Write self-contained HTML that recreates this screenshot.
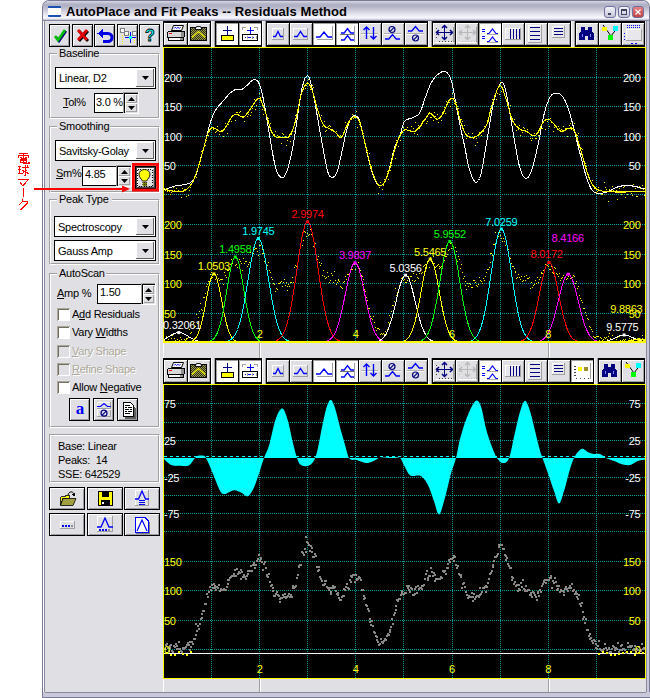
<!DOCTYPE html><html><head><meta charset="utf-8"><style>
html,body{margin:0;padding:0;}
body{width:650px;height:698px;position:relative;overflow:hidden;background:#fff;font-family:"Liberation Sans",sans-serif;}
.t{position:absolute;font-size:11px;line-height:13px;white-space:nowrap;color:#000;letter-spacing:-0.25px;}
svg{position:absolute;}
</style></head><body>
<div style="position:absolute;left:42px;top:0px;width:608px;height:698px;background:#7a7a96;border-radius:7px 7px 0 0;"></div>
<div style="position:absolute;left:43px;top:1px;width:606px;height:697px;background:#c8c8d8;border-radius:6px 6px 0 0;"></div>
<div style="position:absolute;left:43px;top:1px;width:606px;height:19px;background:linear-gradient(#d8d8e4 0px,#b4b4c8 3px,#b0b0c4 5px,#c8c8d8 9px,#e4e4ee 13px,#f8f8fc 17px,#c0c0d0 19px);border-radius:6px 6px 0 0;"></div>
<div style="position:absolute;left:42px;top:20px;width:608px;height:1px;background:#8484a0;"></div>
<div style="position:absolute;left:43px;top:21px;width:1px;height:677px;background:#fff;"></div>
<div style="position:absolute;left:44px;top:21px;width:1px;height:677px;background:#8888a0;"></div>
<div style="position:absolute;left:646px;top:21px;width:4px;height:677px;background:#c8c8d8;"></div>
<div style="position:absolute;left:646px;top:21px;width:1px;height:677px;background:#8888a0;"></div>
<div style="position:absolute;left:649px;top:21px;width:1px;height:677px;background:#7a7a96;"></div>
<div style="position:absolute;left:43px;top:692px;width:607px;height:6px;background:#c8c8d8;"></div>
<div style="position:absolute;left:45px;top:692px;width:601px;height:1px;background:#8888a0;"></div>
<div style="position:absolute;left:42px;top:697px;width:608px;height:1px;background:#7a7a96;"></div>
<div style="position:absolute;left:45px;top:21px;width:601px;height:671px;background:#e0dfe3;"></div>
<div style="position:absolute;left:48px;top:6px;width:13px;height:11px;background:#1c50b0;border-radius:1px;"></div>
<div style="position:absolute;left:48px;top:8px;width:13px;height:7px;background:#fffff8;"></div>
<div class="t" style="left:66px;top:4px;font-weight:bold;font-size:13px;line-height:15px;letter-spacing:0.07px;">AutoPlace and Fit Peaks -- Residuals Method</div>
<div style="position:absolute;left:604px;top:6px;width:12px;height:12px;background:linear-gradient(#f4f4fa,#c4c4d8);border:1px solid #7070a0;border-radius:3px;box-sizing:border-box;"></div>
<div style="position:absolute;left:618px;top:6px;width:12px;height:12px;background:linear-gradient(#f4f4fa,#c4c4d8);border:1px solid #7070a0;border-radius:3px;box-sizing:border-box;"></div>
<div style="position:absolute;left:632px;top:6px;width:12px;height:12px;background:linear-gradient(#e88080,#c04040);border:1px solid #7070a0;border-radius:3px;box-sizing:border-box;"></div>
<div style="position:absolute;left:608px;top:13px;width:3px;height:2px;background:#404060;"></div>
<div style="position:absolute;left:621px;top:9px;width:6px;height:6px;border:1px solid #404060;border-top-width:2px;box-sizing:border-box;"></div>
<svg style="left:635px;top:9px" width="6" height="6"><path d="M0.5 0.5L5.5 5.5M5.5 0.5L0.5 5.5" stroke="#fff" stroke-width="1.3"/></svg>
<div style="position:absolute;left:49px;top:24px;width:21px;height:23px;background:#000;"></div>
<div style="position:absolute;left:50px;top:25px;width:19px;height:21px;background:#fff;"></div>
<div style="position:absolute;left:51px;top:26px;width:18px;height:20px;background:#9d9da1;"></div>
<div style="position:absolute;left:51px;top:26px;width:17px;height:19px;background:#e0dfe3;"></div>
<svg style="position:absolute;left:50px;top:25px;overflow:visible" width="20" height="21" shape-rendering="crispEdges"><path d="M5 11L8 15L15 5" stroke="#000080" stroke-width="2.6" fill="none" transform="translate(1,1)" shape-rendering="auto"/><path d="M5 11L8 15L15 5" stroke="#00c000" stroke-width="2.6" fill="none" shape-rendering="auto"/></svg>
<div style="position:absolute;left:72px;top:24px;width:21px;height:23px;background:#000;"></div>
<div style="position:absolute;left:73px;top:25px;width:19px;height:21px;background:#fff;"></div>
<div style="position:absolute;left:74px;top:26px;width:18px;height:20px;background:#9d9da1;"></div>
<div style="position:absolute;left:74px;top:26px;width:17px;height:19px;background:#e0dfe3;"></div>
<svg style="position:absolute;left:73px;top:25px;overflow:visible" width="20" height="21" shape-rendering="crispEdges"><path d="M5 5L14 15M14 5L5 15" stroke="#000" stroke-width="2.8" transform="translate(1,1)" shape-rendering="auto"/><path d="M5 5L14 15M14 5L5 15" stroke="#e00000" stroke-width="2.8" shape-rendering="auto"/></svg>
<div style="position:absolute;left:94px;top:24px;width:21px;height:23px;background:#000;"></div>
<div style="position:absolute;left:95px;top:25px;width:19px;height:21px;background:#fff;"></div>
<div style="position:absolute;left:96px;top:26px;width:18px;height:20px;background:#9d9da1;"></div>
<div style="position:absolute;left:96px;top:26px;width:17px;height:19px;background:#e0dfe3;"></div>
<svg style="position:absolute;left:95px;top:25px;overflow:visible" width="20" height="21" shape-rendering="crispEdges"><path d="M7 8.5H13A4 4 0 0 1 13 16.5H8" stroke="#0000e0" stroke-width="3" fill="none" shape-rendering="auto"/><path d="M2.5 8.5L7.5 4V13Z" fill="#0000e0"/></svg>
<div style="position:absolute;left:117px;top:24px;width:21px;height:23px;background:#000;"></div>
<div style="position:absolute;left:118px;top:25px;width:19px;height:21px;background:#fff;"></div>
<div style="position:absolute;left:119px;top:26px;width:18px;height:20px;background:#9d9da1;"></div>
<div style="position:absolute;left:119px;top:26px;width:17px;height:19px;background:#e0dfe3;"></div>
<svg style="position:absolute;left:118px;top:25px;overflow:visible" width="20" height="21" shape-rendering="crispEdges"><rect x="2.5" y="3.5" width="4" height="4" fill="#fff" stroke="#808080"/><rect x="6.5" y="6.5" width="4" height="4" fill="#fff" stroke="#808080"/><rect x="14.5" y="6.5" width="4" height="4" fill="#fff" stroke="#808080"/><path d="M4.5 10V19M16.5 13V19" stroke="#ff0" stroke-dasharray="1 1"/><path d="M12.5 7V18M7 12.5H18" stroke="#00f"/><rect x="11" y="11" width="3" height="3" fill="#0ff"/></svg>
<div style="position:absolute;left:139px;top:24px;width:21px;height:23px;background:#000;"></div>
<div style="position:absolute;left:140px;top:25px;width:19px;height:21px;background:#fff;"></div>
<div style="position:absolute;left:141px;top:26px;width:18px;height:20px;background:#9d9da1;"></div>
<div style="position:absolute;left:141px;top:26px;width:17px;height:19px;background:#e0dfe3;"></div>
<svg style="position:absolute;left:140px;top:25px;overflow:visible" width="20" height="21" shape-rendering="crispEdges"><text x="10" y="16" text-anchor="middle" font-family="Liberation Sans" font-weight="bold" font-size="16" fill="#0ff" stroke="#000" stroke-width="0.8">?</text></svg>
<div style="position:absolute;left:49px;top:53px;width:111px;height:66px;border-top:1px solid #a0a0a0;border-left:1px solid #a0a0a0;border-right:1px solid #fff;border-bottom:1px solid #fff;box-sizing:border-box;"></div>
<div style="position:absolute;left:50px;top:54px;width:109px;height:64px;border-top:1px solid #fff;border-left:1px solid #fff;border-right:1px solid #a0a0a0;border-bottom:1px solid #a0a0a0;box-sizing:border-box;"></div>
<div style="position:absolute;left:57px;top:52px;width:43px;height:4px;background:#e0dfe3;"></div>
<div class="t" style="left:59px;top:47px;">Baseline</div>
<div style="position:absolute;left:55px;top:67px;width:101px;height:22px;background:#000;"></div>
<div style="position:absolute;left:56px;top:68px;width:99px;height:20px;background:#fff;"></div>
<div class="t" style="left:59px;top:72px;">Linear, D2</div>
<div style="position:absolute;left:136px;top:69px;width:18px;height:18px;background:#fff;"></div>
<div style="position:absolute;left:137px;top:70px;width:17px;height:17px;background:#a0a0a0;"></div>
<div style="position:absolute;left:137px;top:70px;width:16px;height:16px;background:#e0dfe3;"></div>
<div style="position:absolute;left:153px;top:69px;width:1px;height:18px;background:#606060;"></div>
<div style="position:absolute;left:136px;top:86px;width:18px;height:1px;background:#606060;"></div>
<svg style="position:absolute;left:141.5px;top:76.0px" width="7" height="4"><path d="M0 0H7L3.5 4Z" fill="#000"/></svg>
<div class="t" style="left:63px;top:96px;"><u>T</u>ol%</div>
<div style="position:absolute;left:94px;top:93px;width:30px;height:20px;background:#000;"></div>
<div style="position:absolute;left:95px;top:94px;width:28px;height:18px;background:#fff;"></div>
<div class="t" style="left:96px;top:96px;">3.0 %</div>
<div style="position:absolute;left:123px;top:92px;width:16px;height:22px;background:#fff;"></div>
<div style="position:absolute;left:123px;top:92px;width:15px;height:21px;background:#a0a0a0;"></div>
<div style="position:absolute;left:124px;top:93px;width:14px;height:20px;background:#000;"></div>
<div style="position:absolute;left:125px;top:94px;width:13px;height:19px;background:#e0dfe3;"></div>
<div style="position:absolute;left:125px;top:94px;width:12px;height:9px;background:#fff;"></div>
<div style="position:absolute;left:126px;top:95px;width:11px;height:8px;background:#a0a0a0;"></div>
<div style="position:absolute;left:126px;top:95px;width:10px;height:7px;background:#e0dfe3;"></div>
<div style="position:absolute;left:125px;top:103px;width:12px;height:9px;background:#fff;"></div>
<div style="position:absolute;left:126px;top:104px;width:11px;height:8px;background:#a0a0a0;"></div>
<div style="position:absolute;left:126px;top:104px;width:10px;height:7px;background:#e0dfe3;"></div>
<svg style="position:absolute;left:127.5px;top:96.5px" width="7" height="4"><path d="M3.5 0L7 4H0Z" fill="#000"/></svg>
<svg style="position:absolute;left:127.5px;top:105.5px" width="7" height="4"><path d="M0 0H7L3.5 4Z" fill="#000"/></svg>
<div style="position:absolute;left:49px;top:126px;width:111px;height:67px;border-top:1px solid #a0a0a0;border-left:1px solid #a0a0a0;border-right:1px solid #fff;border-bottom:1px solid #fff;box-sizing:border-box;"></div>
<div style="position:absolute;left:50px;top:127px;width:109px;height:65px;border-top:1px solid #fff;border-left:1px solid #fff;border-right:1px solid #a0a0a0;border-bottom:1px solid #a0a0a0;box-sizing:border-box;"></div>
<div style="position:absolute;left:57px;top:125px;width:53px;height:4px;background:#e0dfe3;"></div>
<div class="t" style="left:59px;top:120px;">Smoothing</div>
<div style="position:absolute;left:55px;top:140px;width:101px;height:21px;background:#000;"></div>
<div style="position:absolute;left:56px;top:141px;width:99px;height:19px;background:#fff;"></div>
<div class="t" style="left:59px;top:145px;">Savitsky-Golay</div>
<div style="position:absolute;left:136px;top:142px;width:18px;height:17px;background:#fff;"></div>
<div style="position:absolute;left:137px;top:143px;width:17px;height:16px;background:#a0a0a0;"></div>
<div style="position:absolute;left:137px;top:143px;width:16px;height:15px;background:#e0dfe3;"></div>
<div style="position:absolute;left:153px;top:142px;width:1px;height:17px;background:#606060;"></div>
<div style="position:absolute;left:136px;top:158px;width:18px;height:1px;background:#606060;"></div>
<svg style="position:absolute;left:141.5px;top:148.5px" width="7" height="4"><path d="M0 0H7L3.5 4Z" fill="#000"/></svg>
<div class="t" style="left:56px;top:167px;"><u>S</u>m%</div>
<div style="position:absolute;left:82px;top:166px;width:35px;height:20px;background:#000;"></div>
<div style="position:absolute;left:83px;top:167px;width:33px;height:18px;background:#fff;"></div>
<div class="t" style="left:85px;top:168px;">4.85</div>
<div style="position:absolute;left:116px;top:165px;width:16px;height:22px;background:#fff;"></div>
<div style="position:absolute;left:116px;top:165px;width:15px;height:21px;background:#a0a0a0;"></div>
<div style="position:absolute;left:117px;top:166px;width:14px;height:20px;background:#000;"></div>
<div style="position:absolute;left:118px;top:167px;width:13px;height:19px;background:#e0dfe3;"></div>
<div style="position:absolute;left:118px;top:167px;width:12px;height:9px;background:#fff;"></div>
<div style="position:absolute;left:119px;top:168px;width:11px;height:8px;background:#a0a0a0;"></div>
<div style="position:absolute;left:119px;top:168px;width:10px;height:7px;background:#e0dfe3;"></div>
<div style="position:absolute;left:118px;top:176px;width:12px;height:9px;background:#fff;"></div>
<div style="position:absolute;left:119px;top:177px;width:11px;height:8px;background:#a0a0a0;"></div>
<div style="position:absolute;left:119px;top:177px;width:10px;height:7px;background:#e0dfe3;"></div>
<svg style="position:absolute;left:120.5px;top:169.5px" width="7" height="4"><path d="M3.5 0L7 4H0Z" fill="#000"/></svg>
<svg style="position:absolute;left:120.5px;top:178.5px" width="7" height="4"><path d="M0 0H7L3.5 4Z" fill="#000"/></svg>
<div style="position:absolute;left:135px;top:166px;width:21px;height:23px;background:#000;"></div>
<div style="position:absolute;left:136px;top:167px;width:19px;height:21px;background:#404040;"></div>
<div style="position:absolute;left:137px;top:168px;width:17px;height:19px;background:#fff;"></div>
<div style="position:absolute;left:138px;top:169px;width:16px;height:18px;background:#a0a0a0;"></div>
<div style="position:absolute;left:138px;top:169px;width:15px;height:17px;background:#e0dfe3;"></div>
<svg style="position:absolute;left:134px;top:166px;overflow:visible" width="22" height="24" shape-rendering="crispEdges"><rect x="3.5" y="3.5" width="15" height="17" fill="none" stroke="#000" stroke-dasharray="1 1.5"/><path d="M10.5 3.5C7.3 3.5 5 5.5 5 8.5C5 11 7 12.5 8.5 15H12.5C14 12.5 16 11 16 8.5C16 5.5 13.7 3.5 10.5 3.5Z" fill="#ff0" stroke="#000" stroke-width="0.9" shape-rendering="auto"/><path d="M8.5 15.5H12.5V19.5H8.5Z" fill="#808000"/><path d="M8 16.5H13M8 18.5H13" stroke="#000" stroke-width="0.6" stroke-dasharray="1 1"/></svg>
<div style="position:absolute;left:49px;top:199px;width:111px;height:66px;border-top:1px solid #a0a0a0;border-left:1px solid #a0a0a0;border-right:1px solid #fff;border-bottom:1px solid #fff;box-sizing:border-box;"></div>
<div style="position:absolute;left:50px;top:200px;width:109px;height:64px;border-top:1px solid #fff;border-left:1px solid #fff;border-right:1px solid #a0a0a0;border-bottom:1px solid #a0a0a0;box-sizing:border-box;"></div>
<div style="position:absolute;left:57px;top:198px;width:55px;height:4px;background:#e0dfe3;"></div>
<div class="t" style="left:59px;top:193px;">Peak Type</div>
<div style="position:absolute;left:54px;top:216px;width:102px;height:21px;background:#000;"></div>
<div style="position:absolute;left:55px;top:217px;width:100px;height:19px;background:#fff;"></div>
<div class="t" style="left:58px;top:221px;">Spectroscopy</div>
<div style="position:absolute;left:136px;top:218px;width:18px;height:17px;background:#fff;"></div>
<div style="position:absolute;left:137px;top:219px;width:17px;height:16px;background:#a0a0a0;"></div>
<div style="position:absolute;left:137px;top:219px;width:16px;height:15px;background:#e0dfe3;"></div>
<div style="position:absolute;left:153px;top:218px;width:1px;height:17px;background:#606060;"></div>
<div style="position:absolute;left:136px;top:234px;width:18px;height:1px;background:#606060;"></div>
<svg style="position:absolute;left:141.5px;top:224.5px" width="7" height="4"><path d="M0 0H7L3.5 4Z" fill="#000"/></svg>
<div style="position:absolute;left:54px;top:240px;width:102px;height:21px;background:#000;"></div>
<div style="position:absolute;left:55px;top:241px;width:100px;height:19px;background:#fff;"></div>
<div class="t" style="left:58px;top:245px;">Gauss Amp</div>
<div style="position:absolute;left:136px;top:242px;width:18px;height:17px;background:#fff;"></div>
<div style="position:absolute;left:137px;top:243px;width:17px;height:16px;background:#a0a0a0;"></div>
<div style="position:absolute;left:137px;top:243px;width:16px;height:15px;background:#e0dfe3;"></div>
<div style="position:absolute;left:153px;top:242px;width:1px;height:17px;background:#606060;"></div>
<div style="position:absolute;left:136px;top:258px;width:18px;height:1px;background:#606060;"></div>
<svg style="position:absolute;left:141.5px;top:248.5px" width="7" height="4"><path d="M0 0H7L3.5 4Z" fill="#000"/></svg>
<div style="position:absolute;left:49px;top:273px;width:111px;height:155px;border-top:1px solid #a0a0a0;border-left:1px solid #a0a0a0;border-right:1px solid #fff;border-bottom:1px solid #fff;box-sizing:border-box;"></div>
<div style="position:absolute;left:50px;top:274px;width:109px;height:153px;border-top:1px solid #fff;border-left:1px solid #fff;border-right:1px solid #a0a0a0;border-bottom:1px solid #a0a0a0;box-sizing:border-box;"></div>
<div style="position:absolute;left:57px;top:272px;width:49px;height:4px;background:#e0dfe3;"></div>
<div class="t" style="left:59px;top:267px;">AutoScan</div>
<div class="t" style="left:57px;top:287px;"><u>A</u>mp %</div>
<div style="position:absolute;left:97px;top:284px;width:45px;height:20px;background:#000;"></div>
<div style="position:absolute;left:98px;top:285px;width:43px;height:18px;background:#fff;"></div>
<div class="t" style="left:100px;top:286px;">1.50</div>
<div style="position:absolute;left:141px;top:283px;width:15px;height:22px;background:#fff;"></div>
<div style="position:absolute;left:141px;top:283px;width:14px;height:21px;background:#a0a0a0;"></div>
<div style="position:absolute;left:142px;top:284px;width:13px;height:20px;background:#000;"></div>
<div style="position:absolute;left:143px;top:285px;width:12px;height:19px;background:#e0dfe3;"></div>
<div style="position:absolute;left:143px;top:285px;width:11px;height:9px;background:#fff;"></div>
<div style="position:absolute;left:144px;top:286px;width:10px;height:8px;background:#a0a0a0;"></div>
<div style="position:absolute;left:144px;top:286px;width:9px;height:7px;background:#e0dfe3;"></div>
<div style="position:absolute;left:143px;top:294px;width:11px;height:9px;background:#fff;"></div>
<div style="position:absolute;left:144px;top:295px;width:10px;height:8px;background:#a0a0a0;"></div>
<div style="position:absolute;left:144px;top:295px;width:9px;height:7px;background:#e0dfe3;"></div>
<svg style="position:absolute;left:145.0px;top:287.5px" width="7" height="4"><path d="M3.5 0L7 4H0Z" fill="#000"/></svg>
<svg style="position:absolute;left:145.0px;top:296.5px" width="7" height="4"><path d="M0 0H7L3.5 4Z" fill="#000"/></svg>
<div style="position:absolute;left:57px;top:308px;width:13px;height:13px;background:#aca899;"></div>
<div style="position:absolute;left:58px;top:309px;width:12px;height:12px;background:#fff;"></div>
<div style="position:absolute;left:58px;top:309px;width:11px;height:11px;background:#716f64;"></div>
<div style="position:absolute;left:59px;top:310px;width:10px;height:10px;background:#fff;"></div>
<div class="t" style="left:72px;top:308px;color:#000;">A<u>d</u>d Residuals</div>
<div style="position:absolute;left:57px;top:326px;width:13px;height:13px;background:#aca899;"></div>
<div style="position:absolute;left:58px;top:327px;width:12px;height:12px;background:#fff;"></div>
<div style="position:absolute;left:58px;top:327px;width:11px;height:11px;background:#716f64;"></div>
<div style="position:absolute;left:59px;top:328px;width:10px;height:10px;background:#fff;"></div>
<div class="t" style="left:72px;top:326px;color:#000;">Vary <u>W</u>idths</div>
<div style="position:absolute;left:57px;top:345px;width:13px;height:13px;background:#aca899;"></div>
<div style="position:absolute;left:58px;top:346px;width:12px;height:12px;background:#fff;"></div>
<div style="position:absolute;left:58px;top:346px;width:11px;height:11px;background:#716f64;"></div>
<div style="position:absolute;left:59px;top:347px;width:10px;height:10px;background:#e0dfe3;"></div>
<div class="t" style="left:72px;top:345px;color:#aca899;text-shadow:1px 1px #fff;"><u>V</u>ary Shape</div>
<div style="position:absolute;left:57px;top:363px;width:13px;height:13px;background:#aca899;"></div>
<div style="position:absolute;left:58px;top:364px;width:12px;height:12px;background:#fff;"></div>
<div style="position:absolute;left:58px;top:364px;width:11px;height:11px;background:#716f64;"></div>
<div style="position:absolute;left:59px;top:365px;width:10px;height:10px;background:#e0dfe3;"></div>
<div class="t" style="left:72px;top:363px;color:#aca899;text-shadow:1px 1px #fff;"><u>R</u>efine Shape</div>
<div style="position:absolute;left:57px;top:381px;width:13px;height:13px;background:#aca899;"></div>
<div style="position:absolute;left:58px;top:382px;width:12px;height:12px;background:#fff;"></div>
<div style="position:absolute;left:58px;top:382px;width:11px;height:11px;background:#716f64;"></div>
<div style="position:absolute;left:59px;top:383px;width:10px;height:10px;background:#fff;"></div>
<div class="t" style="left:72px;top:381px;color:#000;">Allow <u>N</u>egative</div>
<div style="position:absolute;left:69px;top:398px;width:21px;height:23px;background:#000;"></div>
<div style="position:absolute;left:70px;top:399px;width:19px;height:21px;background:#fff;"></div>
<div style="position:absolute;left:71px;top:400px;width:18px;height:20px;background:#9d9da1;"></div>
<div style="position:absolute;left:71px;top:400px;width:17px;height:19px;background:#e0dfe3;"></div>
<svg style="position:absolute;left:70px;top:399px;overflow:visible" width="20" height="21" shape-rendering="crispEdges"><text x="10" y="15" text-anchor="middle" font-family="Liberation Serif" font-weight="bold" font-size="17" fill="#0000ff">a</text></svg>
<div style="position:absolute;left:93px;top:398px;width:21px;height:23px;background:#000;"></div>
<div style="position:absolute;left:94px;top:399px;width:19px;height:21px;background:#fff;"></div>
<div style="position:absolute;left:95px;top:400px;width:18px;height:20px;background:#9d9da1;"></div>
<div style="position:absolute;left:95px;top:400px;width:17px;height:19px;background:#e0dfe3;"></div>
<svg style="position:absolute;left:94px;top:399px;overflow:visible" width="20" height="21" shape-rendering="crispEdges"><rect x="3" y="3" width="14" height="15" fill="#a0a0a0"/><rect x="3" y="3" width="13" height="14" fill="#fff"/><rect x="4" y="4" width="12" height="13" fill="#e0dfe3"/><path d="M3 9.5H17" stroke="#a0a0a0"/><path d="M3 10.5H17" stroke="#fff"/><path d="M3 7.5H6.5L10.0 4.5L13.5 7.5H17" fill="none" stroke="#0000ff" stroke-width="1.1" shape-rendering="auto"/><circle cx="10" cy="14.2" r="3" fill="none" stroke="#000080" stroke-width="1.2" shape-rendering="auto"/><path d="M12.1 12.1L7.9 16.3" stroke="#000080" stroke-width="1.2" shape-rendering="auto"/></svg>
<div style="position:absolute;left:117px;top:398px;width:21px;height:23px;background:#000;"></div>
<div style="position:absolute;left:118px;top:399px;width:19px;height:21px;background:#fff;"></div>
<div style="position:absolute;left:119px;top:400px;width:18px;height:20px;background:#9d9da1;"></div>
<div style="position:absolute;left:119px;top:400px;width:17px;height:19px;background:#e0dfe3;"></div>
<svg style="position:absolute;left:118px;top:399px;overflow:visible" width="20" height="21" shape-rendering="crispEdges"><path d="M6 4.5H13L16.5 8V18.5H6Z" fill="#606060" transform="translate(1,1)"/><path d="M5.5 3.5H12.5L15.5 6.5V17.5H5.5Z" fill="#fff" stroke="#000"/><path d="M7 6.5h5M7 8.5h2M10 8.5h4M7 10.5h4M12 10.5h2M7 12.5h2M10 12.5h4M7 14.5h5" stroke="#000"/></svg>
<div style="position:absolute;left:49px;top:434px;width:111px;height:49px;border-top:1px solid #a0a0a0;border-left:1px solid #a0a0a0;border-right:1px solid #fff;border-bottom:1px solid #fff;box-sizing:border-box;"></div>
<div style="position:absolute;left:50px;top:435px;width:109px;height:47px;border-top:1px solid #fff;border-left:1px solid #fff;border-right:1px solid #a0a0a0;border-bottom:1px solid #a0a0a0;box-sizing:border-box;"></div>
<div class="t" style="left:58px;top:440px;">Base: Linear</div>
<div class="t" style="left:58px;top:454px;">Peaks:&nbsp; 14</div>
<div class="t" style="left:58px;top:468px;">SSE: 642529</div>
<div style="position:absolute;left:49px;top:487px;width:36px;height:23px;background:#000;"></div>
<div style="position:absolute;left:50px;top:488px;width:34px;height:21px;background:#fff;"></div>
<div style="position:absolute;left:51px;top:489px;width:33px;height:20px;background:#9d9da1;"></div>
<div style="position:absolute;left:51px;top:489px;width:32px;height:19px;background:#e0dfe3;"></div>
<svg style="position:absolute;left:57px;top:488px;overflow:visible" width="20" height="21" shape-rendering="crispEdges"><path d="M3.5 8.5H8L9 7H12V10H6L3.5 17Z" fill="#ff0" stroke="#000" stroke-width="0.8"/><path d="M6 10.5H19L16 17.5H3.5Z" fill="#a0a040" stroke="#000" stroke-width="0.8" shape-rendering="auto"/><path d="M11 7C12 3 16 3 17 6" stroke="#000" fill="none" shape-rendering="auto"/><path d="M15.5 6.5L17.5 7.5L18 5" stroke="#000" fill="none"/></svg>
<div style="position:absolute;left:87px;top:487px;width:36px;height:23px;background:#000;"></div>
<div style="position:absolute;left:88px;top:488px;width:34px;height:21px;background:#fff;"></div>
<div style="position:absolute;left:89px;top:489px;width:33px;height:20px;background:#9d9da1;"></div>
<div style="position:absolute;left:89px;top:489px;width:32px;height:19px;background:#e0dfe3;"></div>
<svg style="position:absolute;left:95px;top:488px;overflow:visible" width="20" height="21" shape-rendering="crispEdges"><rect x="3" y="3" width="15" height="15" fill="#000"/><rect x="4" y="4" width="13" height="13" fill="#ff0"/><rect x="7" y="4" width="7" height="5" fill="#000"/><rect x="6" y="12" width="9" height="5" fill="#000"/><rect x="7" y="14" width="2" height="2" fill="#fff"/></svg>
<div style="position:absolute;left:124px;top:487px;width:36px;height:23px;background:#000;"></div>
<div style="position:absolute;left:125px;top:488px;width:34px;height:21px;background:#fff;"></div>
<div style="position:absolute;left:126px;top:489px;width:33px;height:20px;background:#9d9da1;"></div>
<div style="position:absolute;left:126px;top:489px;width:32px;height:19px;background:#e0dfe3;"></div>
<svg style="position:absolute;left:132px;top:488px;overflow:visible" width="20" height="21" shape-rendering="crispEdges"><rect x="3" y="2" width="14" height="16" fill="#a0a0a0"/><rect x="3" y="2" width="13" height="15" fill="#fff"/><rect x="4" y="3" width="12" height="14" fill="#e0dfe3"/><path d="M3 11H6.5L10.0 3L13.5 11H17" fill="none" stroke="#0000ff" stroke-width="1.3" shape-rendering="auto"/><path d="M7 12.5H13M7 14.5H13M7 16.5H13" stroke="#00f"/></svg>
<div style="position:absolute;left:49px;top:513px;width:36px;height:23px;background:#000;"></div>
<div style="position:absolute;left:50px;top:514px;width:34px;height:21px;background:#fff;"></div>
<div style="position:absolute;left:51px;top:515px;width:33px;height:20px;background:#9d9da1;"></div>
<div style="position:absolute;left:51px;top:515px;width:32px;height:19px;background:#e0dfe3;"></div>
<svg style="position:absolute;left:57px;top:514px;overflow:visible" width="20" height="21" shape-rendering="crispEdges"><rect x="3" y="7" width="15" height="8" fill="#a0a0a0"/><rect x="3" y="7" width="14" height="7" fill="#fff"/><rect x="4" y="8" width="13" height="6" fill="#e0dfe3"/><path d="M5 11.5h2M8 11.5h2M11 11.5h2" stroke="#00f" stroke-width="2"/><path d="M14 11.5h2" stroke="#909090" stroke-width="2"/></svg>
<div style="position:absolute;left:87px;top:513px;width:36px;height:23px;background:#000;"></div>
<div style="position:absolute;left:88px;top:514px;width:34px;height:21px;background:#fff;"></div>
<div style="position:absolute;left:89px;top:515px;width:33px;height:20px;background:#9d9da1;"></div>
<div style="position:absolute;left:89px;top:515px;width:32px;height:19px;background:#e0dfe3;"></div>
<svg style="position:absolute;left:95px;top:514px;overflow:visible" width="20" height="21" shape-rendering="crispEdges"><rect x="2" y="2" width="16" height="16" fill="#a0a0a0"/><rect x="2" y="2" width="15" height="15" fill="#fff"/><rect x="3" y="3" width="14" height="14" fill="#e0dfe3"/><path d="M2 13H6.0L10.0 4L14.0 13H18" fill="none" stroke="#0000ff" stroke-width="1.3" shape-rendering="auto"/><path d="M4 16h2M7 16h2M10 16h2" stroke="#00f" stroke-width="2"/><path d="M13 16h2" stroke="#909090" stroke-width="2"/></svg>
<div style="position:absolute;left:124px;top:513px;width:36px;height:23px;background:#000;"></div>
<div style="position:absolute;left:125px;top:514px;width:34px;height:21px;background:#fff;"></div>
<div style="position:absolute;left:126px;top:515px;width:33px;height:20px;background:#9d9da1;"></div>
<div style="position:absolute;left:126px;top:515px;width:32px;height:19px;background:#e0dfe3;"></div>
<svg style="position:absolute;left:132px;top:514px;overflow:visible" width="20" height="21" shape-rendering="crispEdges"><path d="M3.5 3.5H13L16.5 7V18.5H3.5Z" fill="#fff" stroke="#00f" stroke-width="1.3"/><path d="M5 17L10 6L15 17" stroke="#00f" stroke-width="1.2" fill="none" shape-rendering="auto"/><path d="M4 19.5H17.5V8" stroke="#808080" fill="none"/></svg>
<svg style="left:0px;top:140px" width="40" height="80"><g stroke="#f00" stroke-width="1.1" fill="none" shape-rendering="crispEdges"><path d="M19 13.5H28M18.5 18V15.5H28.5V18M23.5 14V20M20 17.5H22M25 17.5H27"/><path d="M20.5 19V22.5H26.5V19H20.5M20.5 20.5H26.5M23.5 19V23.5H29V22"/><path d="M18 26.5H21M18 29.5H21M18 33.5H21.5M19.5 26.5V33.5M22 27.5H29M25.5 25V35.5H24M27 25.5L28 26.5M22.5 30L24 31.5M22 34L25 31M27 30L25.5 31.5M26 32L28.5 34"/><path d="M18 39.5H28L23 46M20 42.5L23 46"/><path d="M23.5 48V56.5"/><path d="M22.5 59V61.5M22.5 61.5H27.5V63L21 69.5H20M22 62L19 65"/></g></svg>
<svg style="left:130px;top:161px" width="32" height="34"><rect x="3.4" y="3.4" width="24.2" height="25.7" fill="none" stroke="#f00" stroke-width="2.8"/></svg>
<svg style="left:30px;top:180px" width="102" height="16"><path d="M4 9H93" stroke="#f00" stroke-width="2"/><path d="M92 5.5L100 9L92 12.5Z" fill="#f00"/></svg>
<div style="position:absolute;left:211px;top:21px;width:4px;height:26px;background:#fff"></div>
<div style="position:absolute;left:212px;top:21px;width:3px;height:26px;background:#a0a0a0"></div>
<div style="position:absolute;left:212px;top:21px;width:2px;height:26px;background:#e4e4e8"></div>
<div style="position:absolute;left:262px;top:21px;width:4px;height:26px;background:#fff"></div>
<div style="position:absolute;left:263px;top:21px;width:3px;height:26px;background:#a0a0a0"></div>
<div style="position:absolute;left:263px;top:21px;width:2px;height:26px;background:#e4e4e8"></div>
<div style="position:absolute;left:428px;top:21px;width:4px;height:26px;background:#fff"></div>
<div style="position:absolute;left:429px;top:21px;width:3px;height:26px;background:#a0a0a0"></div>
<div style="position:absolute;left:429px;top:21px;width:2px;height:26px;background:#e4e4e8"></div>
<div style="position:absolute;left:571px;top:21px;width:4px;height:26px;background:#fff"></div>
<div style="position:absolute;left:572px;top:21px;width:3px;height:26px;background:#a0a0a0"></div>
<div style="position:absolute;left:572px;top:21px;width:2px;height:26px;background:#e4e4e8"></div>
<div style="position:absolute;left:163px;top:21px;width:48px;height:26px;background:#000"></div>
<div style="position:absolute;left:164px;top:23px;width:23px;height:22px;background:#fff"></div>
<div style="position:absolute;left:165px;top:24px;width:22px;height:21px;background:#a0a0a0"></div>
<div style="position:absolute;left:165px;top:24px;width:21px;height:20px;background:#e0dfe3"></div>
<svg style="position:absolute;left:164px;top:23px;overflow:visible" width="22" height="22" shape-rendering="crispEdges"><path d="M9.5 2.5H19.5L17.5 7.5H7.5Z" fill="#fff" stroke="#000" shape-rendering="auto"/><path d="M10 5.5l1.3-1.3 1.3 1.3 1.3-1.3 1.3 1.3 1.3-1.3" stroke="#00f" fill="none" shape-rendering="auto"/><rect x="3.5" y="8.5" width="17" height="6" rx="1.5" fill="#d8d8d8" stroke="#000"/><rect x="17" y="9" width="3" height="5" fill="#909090"/><rect x="5" y="10" width="3" height="1" fill="#f00"/><rect x="4.5" y="14.5" width="15" height="3" rx="1" fill="#fff" stroke="#000"/><rect x="16" y="15" width="3" height="2" fill="#909090"/></svg>
<div style="position:absolute;left:188px;top:23px;width:22px;height:22px;background:#fff"></div>
<div style="position:absolute;left:189px;top:24px;width:21px;height:21px;background:#a0a0a0"></div>
<div style="position:absolute;left:189px;top:24px;width:20px;height:20px;background:#e0dfe3"></div>
<svg style="position:absolute;left:188px;top:23px;overflow:visible" width="22" height="22" shape-rendering="crispEdges"><defs><pattern id="dith" width="2" height="2" patternUnits="userSpaceOnUse"><rect width="2" height="2" fill="#303018"/><rect width="1" height="1" fill="#9a9a48"/><rect x="1" y="1" width="1" height="1" fill="#9a9a48"/></pattern></defs><rect x="2.5" y="4.5" width="16" height="13" fill="url(#dith)" stroke="#000"/><path d="M4 14.5L10.5 8.5L17 14.5" stroke="#ff0" fill="none" stroke-width="1.1" shape-rendering="auto"/><path d="M7 6.5H14L12.5 3.5H8.5Z" fill="#f0f0f0" stroke="#000" stroke-width="0.9" shape-rendering="auto"/></svg>
<div style="position:absolute;left:215px;top:21px;width:47px;height:26px;background:#000"></div>
<div style="position:absolute;left:216px;top:23px;width:22px;height:22px;background:#a0a0a0"></div>
<div style="position:absolute;left:217px;top:24px;width:21px;height:21px;background:#fff"></div>
<svg style="position:absolute;left:216px;top:23px;overflow:visible" width="22" height="22" shape-rendering="crispEdges"><path d="M11.5 3V12M7 7.5H16" stroke="#000080" stroke-width="1"/><rect x="5.5" y="12.5" width="12" height="5" fill="#ff0" stroke="#000"/></svg>
<div style="position:absolute;left:239px;top:23px;width:22px;height:22px;background:#a0a0a0"></div>
<div style="position:absolute;left:240px;top:24px;width:21px;height:21px;background:#fff"></div>
<svg style="position:absolute;left:239px;top:23px;overflow:visible" width="22" height="22" shape-rendering="crispEdges"><path d="M3.5 7V4.5H7M15 4.5H18.5V7" stroke="#a0a0a0" fill="none"/><path d="M11.5 4V11M8 7.5H15" stroke="#00f" stroke-width="1.2"/><rect x="3.5" y="11.5" width="15" height="6" fill="#fff" stroke="#000"/><path d="M6 14.5h1M9 14.5h3M14 14.5h1" stroke="#00f"/><path d="M8 13v3M13 13v3M17 13v3" stroke="#a0a0a0"/></svg>
<div style="position:absolute;left:266px;top:21px;width:162px;height:26px;background:#000"></div>
<div style="position:absolute;left:267px;top:23px;width:22px;height:22px;background:#fff"></div>
<div style="position:absolute;left:268px;top:24px;width:21px;height:21px;background:#a0a0a0"></div>
<div style="position:absolute;left:268px;top:24px;width:20px;height:20px;background:#e0dfe3"></div>
<svg style="position:absolute;left:267px;top:23px;overflow:visible" width="22" height="22" shape-rendering="crispEdges"><rect x="5" y="5" width="12" height="12" fill="#a0a0a0"/><rect x="5" y="5" width="11" height="11" fill="#fff"/><rect x="6" y="6" width="10" height="10" fill="#e0dfe3"/><path d="M6 13.5H8.5L11.0 8.5L13.5 13.5H16" fill="none" stroke="#0000ff" stroke-width="1.3" shape-rendering="auto"/></svg>
<div style="position:absolute;left:290px;top:23px;width:22px;height:22px;background:#fff"></div>
<div style="position:absolute;left:291px;top:24px;width:21px;height:21px;background:#a0a0a0"></div>
<div style="position:absolute;left:291px;top:24px;width:20px;height:20px;background:#e0dfe3"></div>
<svg style="position:absolute;left:290px;top:23px;overflow:visible" width="22" height="22" shape-rendering="crispEdges"><rect x="3" y="5" width="15" height="12" fill="#a0a0a0"/><rect x="3" y="5" width="14" height="11" fill="#fff"/><rect x="4" y="6" width="13" height="10" fill="#e0dfe3"/><path d="M4 13.5H7.2L10.5 8.5L13.8 13.5H17" fill="none" stroke="#0000ff" stroke-width="1.3" shape-rendering="auto"/></svg>
<div style="position:absolute;left:313px;top:23px;width:22px;height:22px;background:#a0a0a0"></div>
<div style="position:absolute;left:314px;top:24px;width:21px;height:21px;background:#fff"></div>
<svg style="position:absolute;left:313px;top:23px;overflow:visible" width="22" height="22" shape-rendering="crispEdges"><path d="M3 14H7.0L11.0 9L15.0 14H19" fill="none" stroke="#0000ff" stroke-width="1.3" shape-rendering="auto"/><path d="M19.5 3V16.5H4" stroke="#a0a0a0" fill="none"/></svg>
<div style="position:absolute;left:336px;top:23px;width:22px;height:22px;background:#a0a0a0"></div>
<div style="position:absolute;left:337px;top:24px;width:21px;height:21px;background:#fff"></div>
<svg style="position:absolute;left:336px;top:23px;overflow:visible" width="22" height="22" shape-rendering="crispEdges"><path d="M5 10H8.2L11.5 5.5L14.8 10H18" fill="none" stroke="#0000ff" stroke-width="1.3" shape-rendering="auto"/><path d="M4 11.5H18" stroke="#707070"/><path d="M5 17H8.2L11.5 12.5L14.8 17H18" fill="none" stroke="#0000ff" stroke-width="1.3" shape-rendering="auto"/><path d="M18.5 3V18.5" stroke="#a0a0a0" fill="none"/></svg>
<div style="position:absolute;left:359px;top:23px;width:22px;height:22px;background:#fff"></div>
<div style="position:absolute;left:360px;top:24px;width:21px;height:21px;background:#a0a0a0"></div>
<div style="position:absolute;left:360px;top:24px;width:20px;height:20px;background:#e0dfe3"></div>
<svg style="position:absolute;left:359px;top:23px;overflow:visible" width="22" height="22" shape-rendering="crispEdges"><path d="M2 11.5H19" stroke="#fff"/><path d="M2 10.5H19" stroke="#b0b0b0"/><path d="M7.5 16V4M4.5 7L7.5 4L10.5 7M14.5 4V16M11.5 13L14.5 16L17.5 13" stroke="#00f" stroke-width="1.4" fill="none" shape-rendering="auto"/></svg>
<div style="position:absolute;left:382px;top:23px;width:22px;height:22px;background:#fff"></div>
<div style="position:absolute;left:383px;top:24px;width:21px;height:21px;background:#a0a0a0"></div>
<div style="position:absolute;left:383px;top:24px;width:20px;height:20px;background:#e0dfe3"></div>
<svg style="position:absolute;left:382px;top:23px;overflow:visible" width="22" height="22" shape-rendering="crispEdges"><path d="M2 11.5H19" stroke="#fff"/><path d="M2 10.5H19" stroke="#b0b0b0"/><circle cx="10" cy="6.5" r="3" fill="none" stroke="#000080" stroke-width="1.2" shape-rendering="auto"/><path d="M12.1 4.4L7.9 8.6" stroke="#000080" stroke-width="1.2" shape-rendering="auto"/><path d="M3 16H6.8L10.5 11.5L14.2 16H18" fill="none" stroke="#0000ff" stroke-width="1.3" shape-rendering="auto"/></svg>
<div style="position:absolute;left:405px;top:23px;width:22px;height:22px;background:#fff"></div>
<div style="position:absolute;left:406px;top:24px;width:21px;height:21px;background:#a0a0a0"></div>
<div style="position:absolute;left:406px;top:24px;width:20px;height:20px;background:#e0dfe3"></div>
<svg style="position:absolute;left:405px;top:23px;overflow:visible" width="22" height="22" shape-rendering="crispEdges"><path d="M2 11.5H19" stroke="#fff"/><path d="M2 10.5H19" stroke="#b0b0b0"/><path d="M3 8H6.8L10.5 3.5L14.2 8H18" fill="none" stroke="#0000ff" stroke-width="1.3" shape-rendering="auto"/><circle cx="10.5" cy="15" r="3" fill="none" stroke="#000080" stroke-width="1.2" shape-rendering="auto"/><path d="M12.6 12.9L8.4 17.1" stroke="#000080" stroke-width="1.2" shape-rendering="auto"/></svg>
<div style="position:absolute;left:432px;top:21px;width:139px;height:26px;background:#000"></div>
<div style="position:absolute;left:433px;top:23px;width:22px;height:22px;background:#fff"></div>
<div style="position:absolute;left:434px;top:24px;width:21px;height:21px;background:#a0a0a0"></div>
<div style="position:absolute;left:434px;top:24px;width:20px;height:20px;background:#e0dfe3"></div>
<svg style="position:absolute;left:433px;top:23px;overflow:visible" width="22" height="22" shape-rendering="crispEdges"><path d="M11.5 2V16M3 9.5H19" stroke="#000080"/><path d="M9 5L11.5 2.5L14 5M9 14L11.5 16.5L14 14M6 7L3.5 9.5L6 12M17 7L19.5 9.5L17 12" stroke="#000080" stroke-width="1.5" fill="none" shape-rendering="auto"/><path d="M3 5h1M3 8h1M3 11h1M3 14h1M6 18h1M9 18h1M12 18h1M15 18h1M18 18h1" stroke="#404040"/><path d="M2 19.5H20" stroke="#fff"/><path d="M20.5 4V19" stroke="#a0a0a0"/></svg>
<div style="position:absolute;left:456px;top:23px;width:22px;height:22px;background:#fff"></div>
<div style="position:absolute;left:457px;top:24px;width:21px;height:21px;background:#a0a0a0"></div>
<div style="position:absolute;left:457px;top:24px;width:20px;height:20px;background:#e0dfe3"></div>
<svg style="position:absolute;left:456px;top:23px;overflow:visible" width="22" height="22" shape-rendering="crispEdges"><path d="M11.5 2V16M3 9.5H19" stroke="#b8b8b8"/><path d="M9 5L11.5 2.5L14 5M9 14L11.5 16.5L14 14M6 7L3.5 9.5L6 12M17 7L19.5 9.5L17 12" stroke="#b8b8b8" stroke-width="1.5" fill="none" shape-rendering="auto"/><path d="M3 5h1M3 8h1M3 11h1M3 14h1M6 18h1M9 18h1M12 18h1M15 18h1M18 18h1" stroke="#c0c0c0"/><path d="M2 19.5H20" stroke="#fff"/><path d="M20.5 4V19" stroke="#a0a0a0"/></svg>
<div style="position:absolute;left:479px;top:23px;width:22px;height:22px;background:#a0a0a0"></div>
<div style="position:absolute;left:480px;top:24px;width:21px;height:21px;background:#fff"></div>
<svg style="position:absolute;left:479px;top:23px;overflow:visible" width="22" height="22" shape-rendering="crispEdges"><path d="M3 6.5h3M3 8.5h3M3 13.5h3M3 15.5h3" stroke="#00f"/><path d="M8 10.5H10L13.5 6L17 10.5H19M8 18.5H10L13.5 14L17 18.5H19" stroke="#00f" stroke-width="1.2" fill="none" shape-rendering="auto"/><path d="M8 11.5H19M8 19.5H19" stroke="#b0b0b0"/></svg>
<div style="position:absolute;left:502px;top:23px;width:22px;height:22px;background:#fff"></div>
<div style="position:absolute;left:503px;top:24px;width:21px;height:21px;background:#a0a0a0"></div>
<div style="position:absolute;left:503px;top:24px;width:20px;height:20px;background:#e0dfe3"></div>
<svg style="position:absolute;left:502px;top:23px;overflow:visible" width="22" height="22" shape-rendering="crispEdges"><rect x="3" y="5" width="16" height="12" fill="#a0a0a0"/><rect x="3" y="5" width="15" height="11" fill="#fff"/><rect x="4" y="6" width="14" height="10" fill="#e8e8ec"/><path d="M8.5 6V16M11.5 6V16M14.5 6V16M17.5 6V16" stroke="#000080"/></svg>
<div style="position:absolute;left:525px;top:23px;width:22px;height:22px;background:#fff"></div>
<div style="position:absolute;left:526px;top:24px;width:21px;height:21px;background:#a0a0a0"></div>
<div style="position:absolute;left:526px;top:24px;width:20px;height:20px;background:#e0dfe3"></div>
<svg style="position:absolute;left:525px;top:23px;overflow:visible" width="22" height="22" shape-rendering="crispEdges"><rect x="3" y="2" width="14" height="18" fill="#a0a0a0"/><rect x="3" y="2" width="13" height="17" fill="#fff"/><rect x="4" y="3" width="12" height="16" fill="#e8e8ec"/><path d="M5 4.5H15M5 8.5H15M5 12.5H15M5 16.5H15" stroke="#000080"/></svg>
<div style="position:absolute;left:548px;top:23px;width:22px;height:22px;background:#fff"></div>
<div style="position:absolute;left:549px;top:24px;width:21px;height:21px;background:#a0a0a0"></div>
<div style="position:absolute;left:549px;top:24px;width:20px;height:20px;background:#e0dfe3"></div>
<svg style="position:absolute;left:548px;top:23px;overflow:visible" width="22" height="22" shape-rendering="crispEdges"><rect x="4" y="3" width="13" height="12" fill="#a0a0a0"/><rect x="4" y="3" width="12" height="11" fill="#fff"/><rect x="5" y="4" width="11" height="10" fill="#e8e8ec"/><path d="M6 5.5H15M6 8.5H15M6 11.5H15" stroke="#000080"/></svg>
<div style="position:absolute;left:575px;top:21px;width:70px;height:26px;background:#000"></div>
<div style="position:absolute;left:576px;top:23px;width:22px;height:22px;background:#fff"></div>
<div style="position:absolute;left:577px;top:24px;width:21px;height:21px;background:#a0a0a0"></div>
<div style="position:absolute;left:577px;top:24px;width:20px;height:20px;background:#e0dfe3"></div>
<svg style="position:absolute;left:576px;top:23px;overflow:visible" width="22" height="22" shape-rendering="crispEdges"><path d="M5 4h4v3h3v-3h4v4l2 3v6h-6v-4h-3v4h-6v-6l2-3z" fill="#000080"/><rect x="6" y="11" width="1" height="3" fill="#8080ff"/><rect x="14" y="11" width="1" height="3" fill="#8080ff"/><rect x="9" y="8" width="3" height="2" fill="#000080"/></svg>
<div style="position:absolute;left:599px;top:23px;width:22px;height:22px;background:#fff"></div>
<div style="position:absolute;left:600px;top:24px;width:21px;height:21px;background:#a0a0a0"></div>
<div style="position:absolute;left:600px;top:24px;width:20px;height:20px;background:#e0dfe3"></div>
<svg style="position:absolute;left:599px;top:23px;overflow:visible" width="22" height="22" shape-rendering="crispEdges"><path d="M4 2L12 13L19 4" stroke="#000" fill="none" shape-rendering="auto"/><rect x="3" y="4" width="5" height="4" fill="#ff0"/><rect x="14" y="3" width="5" height="5" fill="#0ff"/><rect x="9" y="12" width="5" height="5" fill="#0f0"/></svg>
<div style="position:absolute;left:622px;top:23px;width:22px;height:22px;background:#fff"></div>
<div style="position:absolute;left:623px;top:24px;width:21px;height:21px;background:#a0a0a0"></div>
<div style="position:absolute;left:623px;top:24px;width:20px;height:20px;background:#e0dfe3"></div>
<svg style="position:absolute;left:622px;top:23px;overflow:visible" width="22" height="22" shape-rendering="crispEdges"><rect x="4" y="6" width="16" height="12" fill="#a0a0a0"/><rect x="4" y="6" width="15" height="11" fill="#fff"/><rect x="5" y="7" width="14" height="10" fill="#e8e8ec"/><path d="M5 2h13M5 4h13" stroke="#00f" stroke-dasharray="1 1"/><path d="M2 10v1M2 13v1M2 16v1" stroke="#00f"/><path d="M9 20h2M13 20h2" stroke="#00f"/></svg>
<div style="position:absolute;left:211px;top:358px;width:4px;height:26px;background:#fff"></div>
<div style="position:absolute;left:212px;top:358px;width:3px;height:26px;background:#a0a0a0"></div>
<div style="position:absolute;left:212px;top:358px;width:2px;height:26px;background:#e4e4e8"></div>
<div style="position:absolute;left:262px;top:358px;width:4px;height:26px;background:#fff"></div>
<div style="position:absolute;left:263px;top:358px;width:3px;height:26px;background:#a0a0a0"></div>
<div style="position:absolute;left:263px;top:358px;width:2px;height:26px;background:#e4e4e8"></div>
<div style="position:absolute;left:428px;top:358px;width:4px;height:26px;background:#fff"></div>
<div style="position:absolute;left:429px;top:358px;width:3px;height:26px;background:#a0a0a0"></div>
<div style="position:absolute;left:429px;top:358px;width:2px;height:26px;background:#e4e4e8"></div>
<div style="position:absolute;left:594px;top:358px;width:4px;height:26px;background:#fff"></div>
<div style="position:absolute;left:595px;top:358px;width:3px;height:26px;background:#a0a0a0"></div>
<div style="position:absolute;left:595px;top:358px;width:2px;height:26px;background:#e4e4e8"></div>
<div style="position:absolute;left:163px;top:358px;width:48px;height:26px;background:#000"></div>
<div style="position:absolute;left:164px;top:360px;width:23px;height:22px;background:#fff"></div>
<div style="position:absolute;left:165px;top:361px;width:22px;height:21px;background:#a0a0a0"></div>
<div style="position:absolute;left:165px;top:361px;width:21px;height:20px;background:#e0dfe3"></div>
<svg style="position:absolute;left:164px;top:360px;overflow:visible" width="22" height="22" shape-rendering="crispEdges"><path d="M9.5 2.5H19.5L17.5 7.5H7.5Z" fill="#fff" stroke="#000" shape-rendering="auto"/><path d="M10 5.5l1.3-1.3 1.3 1.3 1.3-1.3 1.3 1.3 1.3-1.3" stroke="#00f" fill="none" shape-rendering="auto"/><rect x="3.5" y="8.5" width="17" height="6" rx="1.5" fill="#d8d8d8" stroke="#000"/><rect x="17" y="9" width="3" height="5" fill="#909090"/><rect x="5" y="10" width="3" height="1" fill="#f00"/><rect x="4.5" y="14.5" width="15" height="3" rx="1" fill="#fff" stroke="#000"/><rect x="16" y="15" width="3" height="2" fill="#909090"/></svg>
<div style="position:absolute;left:188px;top:360px;width:22px;height:22px;background:#fff"></div>
<div style="position:absolute;left:189px;top:361px;width:21px;height:21px;background:#a0a0a0"></div>
<div style="position:absolute;left:189px;top:361px;width:20px;height:20px;background:#e0dfe3"></div>
<svg style="position:absolute;left:188px;top:360px;overflow:visible" width="22" height="22" shape-rendering="crispEdges"><defs><pattern id="dith" width="2" height="2" patternUnits="userSpaceOnUse"><rect width="2" height="2" fill="#303018"/><rect width="1" height="1" fill="#9a9a48"/><rect x="1" y="1" width="1" height="1" fill="#9a9a48"/></pattern></defs><rect x="2.5" y="4.5" width="16" height="13" fill="url(#dith)" stroke="#000"/><path d="M4 14.5L10.5 8.5L17 14.5" stroke="#ff0" fill="none" stroke-width="1.1" shape-rendering="auto"/><path d="M7 6.5H14L12.5 3.5H8.5Z" fill="#f0f0f0" stroke="#000" stroke-width="0.9" shape-rendering="auto"/></svg>
<div style="position:absolute;left:215px;top:358px;width:47px;height:26px;background:#000"></div>
<div style="position:absolute;left:216px;top:360px;width:22px;height:22px;background:#a0a0a0"></div>
<div style="position:absolute;left:217px;top:361px;width:21px;height:21px;background:#fff"></div>
<svg style="position:absolute;left:216px;top:360px;overflow:visible" width="22" height="22" shape-rendering="crispEdges"><path d="M11.5 3V12M7 7.5H16" stroke="#000080" stroke-width="1"/><rect x="5.5" y="12.5" width="12" height="5" fill="#ff0" stroke="#000"/></svg>
<div style="position:absolute;left:239px;top:360px;width:22px;height:22px;background:#a0a0a0"></div>
<div style="position:absolute;left:240px;top:361px;width:21px;height:21px;background:#fff"></div>
<svg style="position:absolute;left:239px;top:360px;overflow:visible" width="22" height="22" shape-rendering="crispEdges"><path d="M3.5 7V4.5H7M15 4.5H18.5V7" stroke="#a0a0a0" fill="none"/><path d="M11.5 4V11M8 7.5H15" stroke="#00f" stroke-width="1.2"/><rect x="3.5" y="11.5" width="15" height="6" fill="#fff" stroke="#000"/><path d="M6 14.5h1M9 14.5h3M14 14.5h1" stroke="#00f"/><path d="M8 13v3M13 13v3M17 13v3" stroke="#a0a0a0"/></svg>
<div style="position:absolute;left:266px;top:358px;width:162px;height:26px;background:#000"></div>
<div style="position:absolute;left:267px;top:360px;width:22px;height:22px;background:#fff"></div>
<div style="position:absolute;left:268px;top:361px;width:21px;height:21px;background:#a0a0a0"></div>
<div style="position:absolute;left:268px;top:361px;width:20px;height:20px;background:#e0dfe3"></div>
<svg style="position:absolute;left:267px;top:360px;overflow:visible" width="22" height="22" shape-rendering="crispEdges"><rect x="5" y="5" width="12" height="12" fill="#a0a0a0"/><rect x="5" y="5" width="11" height="11" fill="#fff"/><rect x="6" y="6" width="10" height="10" fill="#e0dfe3"/><path d="M6 13.5H8.5L11.0 8.5L13.5 13.5H16" fill="none" stroke="#0000ff" stroke-width="1.3" shape-rendering="auto"/></svg>
<div style="position:absolute;left:290px;top:360px;width:22px;height:22px;background:#fff"></div>
<div style="position:absolute;left:291px;top:361px;width:21px;height:21px;background:#a0a0a0"></div>
<div style="position:absolute;left:291px;top:361px;width:20px;height:20px;background:#e0dfe3"></div>
<svg style="position:absolute;left:290px;top:360px;overflow:visible" width="22" height="22" shape-rendering="crispEdges"><rect x="3" y="5" width="15" height="12" fill="#a0a0a0"/><rect x="3" y="5" width="14" height="11" fill="#fff"/><rect x="4" y="6" width="13" height="10" fill="#e0dfe3"/><path d="M4 13.5H7.2L10.5 8.5L13.8 13.5H17" fill="none" stroke="#0000ff" stroke-width="1.3" shape-rendering="auto"/></svg>
<div style="position:absolute;left:313px;top:360px;width:22px;height:22px;background:#a0a0a0"></div>
<div style="position:absolute;left:314px;top:361px;width:21px;height:21px;background:#fff"></div>
<svg style="position:absolute;left:313px;top:360px;overflow:visible" width="22" height="22" shape-rendering="crispEdges"><path d="M3 14H7.0L11.0 9L15.0 14H19" fill="none" stroke="#0000ff" stroke-width="1.3" shape-rendering="auto"/><path d="M19.5 3V16.5H4" stroke="#a0a0a0" fill="none"/></svg>
<div style="position:absolute;left:336px;top:360px;width:22px;height:22px;background:#a0a0a0"></div>
<div style="position:absolute;left:337px;top:361px;width:21px;height:21px;background:#fff"></div>
<svg style="position:absolute;left:336px;top:360px;overflow:visible" width="22" height="22" shape-rendering="crispEdges"><path d="M5 10H8.2L11.5 5.5L14.8 10H18" fill="none" stroke="#0000ff" stroke-width="1.3" shape-rendering="auto"/><path d="M4 11.5H18" stroke="#707070"/><path d="M5 17H8.2L11.5 12.5L14.8 17H18" fill="none" stroke="#0000ff" stroke-width="1.3" shape-rendering="auto"/><path d="M18.5 3V18.5" stroke="#a0a0a0" fill="none"/></svg>
<div style="position:absolute;left:359px;top:360px;width:22px;height:22px;background:#fff"></div>
<div style="position:absolute;left:360px;top:361px;width:21px;height:21px;background:#a0a0a0"></div>
<div style="position:absolute;left:360px;top:361px;width:20px;height:20px;background:#e0dfe3"></div>
<svg style="position:absolute;left:359px;top:360px;overflow:visible" width="22" height="22" shape-rendering="crispEdges"><path d="M2 11.5H19" stroke="#fff"/><path d="M2 10.5H19" stroke="#b0b0b0"/><path d="M7.5 16V4M4.5 7L7.5 4L10.5 7M14.5 4V16M11.5 13L14.5 16L17.5 13" stroke="#00f" stroke-width="1.4" fill="none" shape-rendering="auto"/></svg>
<div style="position:absolute;left:382px;top:360px;width:22px;height:22px;background:#fff"></div>
<div style="position:absolute;left:383px;top:361px;width:21px;height:21px;background:#a0a0a0"></div>
<div style="position:absolute;left:383px;top:361px;width:20px;height:20px;background:#e0dfe3"></div>
<svg style="position:absolute;left:382px;top:360px;overflow:visible" width="22" height="22" shape-rendering="crispEdges"><path d="M2 11.5H19" stroke="#fff"/><path d="M2 10.5H19" stroke="#b0b0b0"/><circle cx="10" cy="6.5" r="3" fill="none" stroke="#000080" stroke-width="1.2" shape-rendering="auto"/><path d="M12.1 4.4L7.9 8.6" stroke="#000080" stroke-width="1.2" shape-rendering="auto"/><path d="M3 16H6.8L10.5 11.5L14.2 16H18" fill="none" stroke="#0000ff" stroke-width="1.3" shape-rendering="auto"/></svg>
<div style="position:absolute;left:405px;top:360px;width:22px;height:22px;background:#fff"></div>
<div style="position:absolute;left:406px;top:361px;width:21px;height:21px;background:#a0a0a0"></div>
<div style="position:absolute;left:406px;top:361px;width:20px;height:20px;background:#e0dfe3"></div>
<svg style="position:absolute;left:405px;top:360px;overflow:visible" width="22" height="22" shape-rendering="crispEdges"><path d="M2 11.5H19" stroke="#fff"/><path d="M2 10.5H19" stroke="#b0b0b0"/><path d="M3 8H6.8L10.5 3.5L14.2 8H18" fill="none" stroke="#0000ff" stroke-width="1.3" shape-rendering="auto"/><circle cx="10.5" cy="15" r="3" fill="none" stroke="#000080" stroke-width="1.2" shape-rendering="auto"/><path d="M12.6 12.9L8.4 17.1" stroke="#000080" stroke-width="1.2" shape-rendering="auto"/></svg>
<div style="position:absolute;left:432px;top:358px;width:162px;height:26px;background:#000"></div>
<div style="position:absolute;left:433px;top:360px;width:22px;height:22px;background:#fff"></div>
<div style="position:absolute;left:434px;top:361px;width:21px;height:21px;background:#a0a0a0"></div>
<div style="position:absolute;left:434px;top:361px;width:20px;height:20px;background:#e0dfe3"></div>
<svg style="position:absolute;left:433px;top:360px;overflow:visible" width="22" height="22" shape-rendering="crispEdges"><path d="M11.5 2V16M3 9.5H19" stroke="#000080"/><path d="M9 5L11.5 2.5L14 5M9 14L11.5 16.5L14 14M6 7L3.5 9.5L6 12M17 7L19.5 9.5L17 12" stroke="#000080" stroke-width="1.5" fill="none" shape-rendering="auto"/><path d="M3 5h1M3 8h1M3 11h1M3 14h1M6 18h1M9 18h1M12 18h1M15 18h1M18 18h1" stroke="#404040"/><path d="M2 19.5H20" stroke="#fff"/><path d="M20.5 4V19" stroke="#a0a0a0"/></svg>
<div style="position:absolute;left:456px;top:360px;width:22px;height:22px;background:#fff"></div>
<div style="position:absolute;left:457px;top:361px;width:21px;height:21px;background:#a0a0a0"></div>
<div style="position:absolute;left:457px;top:361px;width:20px;height:20px;background:#e0dfe3"></div>
<svg style="position:absolute;left:456px;top:360px;overflow:visible" width="22" height="22" shape-rendering="crispEdges"><path d="M11.5 2V16M3 9.5H19" stroke="#b8b8b8"/><path d="M9 5L11.5 2.5L14 5M9 14L11.5 16.5L14 14M6 7L3.5 9.5L6 12M17 7L19.5 9.5L17 12" stroke="#b8b8b8" stroke-width="1.5" fill="none" shape-rendering="auto"/><path d="M3 5h1M3 8h1M3 11h1M3 14h1M6 18h1M9 18h1M12 18h1M15 18h1M18 18h1" stroke="#c0c0c0"/><path d="M2 19.5H20" stroke="#fff"/><path d="M20.5 4V19" stroke="#a0a0a0"/></svg>
<div style="position:absolute;left:479px;top:360px;width:22px;height:22px;background:#a0a0a0"></div>
<div style="position:absolute;left:480px;top:361px;width:21px;height:21px;background:#fff"></div>
<svg style="position:absolute;left:479px;top:360px;overflow:visible" width="22" height="22" shape-rendering="crispEdges"><path d="M3 6.5h3M3 8.5h3M3 13.5h3M3 15.5h3" stroke="#00f"/><path d="M8 10.5H10L13.5 6L17 10.5H19M8 18.5H10L13.5 14L17 18.5H19" stroke="#00f" stroke-width="1.2" fill="none" shape-rendering="auto"/><path d="M8 11.5H19M8 19.5H19" stroke="#b0b0b0"/></svg>
<div style="position:absolute;left:502px;top:360px;width:22px;height:22px;background:#fff"></div>
<div style="position:absolute;left:503px;top:361px;width:21px;height:21px;background:#a0a0a0"></div>
<div style="position:absolute;left:503px;top:361px;width:20px;height:20px;background:#e0dfe3"></div>
<svg style="position:absolute;left:502px;top:360px;overflow:visible" width="22" height="22" shape-rendering="crispEdges"><rect x="3" y="5" width="16" height="12" fill="#a0a0a0"/><rect x="3" y="5" width="15" height="11" fill="#fff"/><rect x="4" y="6" width="14" height="10" fill="#e8e8ec"/><path d="M8.5 6V16M11.5 6V16M14.5 6V16M17.5 6V16" stroke="#000080"/></svg>
<div style="position:absolute;left:525px;top:360px;width:22px;height:22px;background:#fff"></div>
<div style="position:absolute;left:526px;top:361px;width:21px;height:21px;background:#a0a0a0"></div>
<div style="position:absolute;left:526px;top:361px;width:20px;height:20px;background:#e0dfe3"></div>
<svg style="position:absolute;left:525px;top:360px;overflow:visible" width="22" height="22" shape-rendering="crispEdges"><rect x="3" y="2" width="14" height="18" fill="#a0a0a0"/><rect x="3" y="2" width="13" height="17" fill="#fff"/><rect x="4" y="3" width="12" height="16" fill="#e8e8ec"/><path d="M5 4.5H15M5 8.5H15M5 12.5H15M5 16.5H15" stroke="#000080"/></svg>
<div style="position:absolute;left:548px;top:360px;width:22px;height:22px;background:#fff"></div>
<div style="position:absolute;left:549px;top:361px;width:21px;height:21px;background:#a0a0a0"></div>
<div style="position:absolute;left:549px;top:361px;width:20px;height:20px;background:#e0dfe3"></div>
<svg style="position:absolute;left:548px;top:360px;overflow:visible" width="22" height="22" shape-rendering="crispEdges"><rect x="4" y="3" width="13" height="12" fill="#a0a0a0"/><rect x="4" y="3" width="12" height="11" fill="#fff"/><rect x="5" y="4" width="11" height="10" fill="#e8e8ec"/><path d="M6 5.5H15M6 8.5H15M6 11.5H15" stroke="#000080"/></svg>
<div style="position:absolute;left:571px;top:360px;width:22px;height:22px;background:#a0a0a0"></div>
<div style="position:absolute;left:572px;top:361px;width:21px;height:21px;background:#fff"></div>
<svg style="position:absolute;left:571px;top:360px;overflow:visible" width="22" height="22" shape-rendering="crispEdges"><path d="M3 6h2M3 9h2M3 12h2M3 15h2M5 18h1M9 18h1M13 18h1M17 18h1" stroke="#404040"/><rect x="7" y="7" width="4" height="4" fill="#ff0"/><rect x="13" y="7" width="4" height="4" fill="#a09030"/><path d="M19.5 3V19" stroke="#a0a0a0"/></svg>
<div style="position:absolute;left:598px;top:358px;width:47px;height:26px;background:#000"></div>
<div style="position:absolute;left:599px;top:360px;width:22px;height:22px;background:#fff"></div>
<div style="position:absolute;left:600px;top:361px;width:21px;height:21px;background:#a0a0a0"></div>
<div style="position:absolute;left:600px;top:361px;width:20px;height:20px;background:#e0dfe3"></div>
<svg style="position:absolute;left:599px;top:360px;overflow:visible" width="22" height="22" shape-rendering="crispEdges"><path d="M5 4h4v3h3v-3h4v4l2 3v6h-6v-4h-3v4h-6v-6l2-3z" fill="#000080"/><rect x="6" y="11" width="1" height="3" fill="#8080ff"/><rect x="14" y="11" width="1" height="3" fill="#8080ff"/><rect x="9" y="8" width="3" height="2" fill="#000080"/></svg>
<div style="position:absolute;left:622px;top:360px;width:22px;height:22px;background:#fff"></div>
<div style="position:absolute;left:623px;top:361px;width:21px;height:21px;background:#a0a0a0"></div>
<div style="position:absolute;left:623px;top:361px;width:20px;height:20px;background:#e0dfe3"></div>
<svg style="position:absolute;left:622px;top:360px;overflow:visible" width="22" height="22" shape-rendering="crispEdges"><path d="M4 2L12 13L19 4" stroke="#000" fill="none" shape-rendering="auto"/><rect x="3" y="4" width="5" height="4" fill="#ff0"/><rect x="14" y="3" width="5" height="5" fill="#0ff"/><rect x="9" y="12" width="5" height="5" fill="#0f0"/></svg>
<svg style="position:absolute;left:0;top:0" width="650" height="698" shape-rendering="crispEdges">
<rect x="163" y="47" width="483" height="296" fill="#000"/>
<rect x="163.5" y="47.5" width="482" height="295" fill="none" stroke="#ff0" stroke-width="1"/>
<rect x="163" y="384" width="483" height="295" fill="#000"/>
<rect x="163.5" y="384.5" width="482" height="294" fill="none" stroke="#ff0" stroke-width="1"/>
<path d="M211.5 48V342" stroke="#00a0a0" stroke-dasharray="1 1"/>
<path d="M259.5 48V342" stroke="#00a0a0" stroke-dasharray="1 1"/>
<path d="M307.5 48V342" stroke="#00a0a0" stroke-dasharray="1 1"/>
<path d="M355.5 48V342" stroke="#00a0a0" stroke-dasharray="1 1"/>
<path d="M403.5 48V342" stroke="#00a0a0" stroke-dasharray="1 1"/>
<path d="M452.5 48V342" stroke="#00a0a0" stroke-dasharray="1 1"/>
<path d="M500.5 48V342" stroke="#00a0a0" stroke-dasharray="1 1"/>
<path d="M548.5 48V342" stroke="#00a0a0" stroke-dasharray="1 1"/>
<path d="M596.5 48V342" stroke="#00a0a0" stroke-dasharray="1 1"/>
<path d="M164 77.5H645" stroke="#00a0a0" stroke-dasharray="1 1"/>
<path d="M164 106.5H645" stroke="#00a0a0" stroke-dasharray="1 1"/>
<path d="M164 136.5H645" stroke="#00a0a0" stroke-dasharray="1 1"/>
<path d="M164 165.5H645" stroke="#00a0a0" stroke-dasharray="1 1"/>
<path d="M164 194.5H645" stroke="#00a0a0" stroke-dasharray="1 1"/>
<path d="M164 224.5H645" stroke="#00a0a0" stroke-dasharray="1 1"/>
<path d="M164 254.5H645" stroke="#00a0a0" stroke-dasharray="1 1"/>
<path d="M164 283.5H645" stroke="#00a0a0" stroke-dasharray="1 1"/>
<path d="M164 313.5H645" stroke="#00a0a0" stroke-dasharray="1 1"/>
<path d="M211.5 385V678" stroke="#00a0a0" stroke-dasharray="1 1"/>
<path d="M259.5 385V678" stroke="#00a0a0" stroke-dasharray="1 1"/>
<path d="M307.5 385V678" stroke="#00a0a0" stroke-dasharray="1 1"/>
<path d="M355.5 385V678" stroke="#00a0a0" stroke-dasharray="1 1"/>
<path d="M403.5 385V678" stroke="#00a0a0" stroke-dasharray="1 1"/>
<path d="M452.5 385V678" stroke="#00a0a0" stroke-dasharray="1 1"/>
<path d="M500.5 385V678" stroke="#00a0a0" stroke-dasharray="1 1"/>
<path d="M548.5 385V678" stroke="#00a0a0" stroke-dasharray="1 1"/>
<path d="M596.5 385V678" stroke="#00a0a0" stroke-dasharray="1 1"/>
<path d="M164 403.5H645" stroke="#00a0a0" stroke-dasharray="1 1"/>
<path d="M164 422.5H645" stroke="#00a0a0" stroke-dasharray="1 1"/>
<path d="M164 440.5H645" stroke="#00a0a0" stroke-dasharray="1 1"/>
<path d="M164 477.5H645" stroke="#00a0a0" stroke-dasharray="1 1"/>
<path d="M164 495.5H645" stroke="#00a0a0" stroke-dasharray="1 1"/>
<path d="M164 513.5H645" stroke="#00a0a0" stroke-dasharray="1 1"/>
<path d="M164 531.5H645" stroke="#00a0a0" stroke-dasharray="1 1"/>
<path d="M164 561.5H645" stroke="#00a0a0" stroke-dasharray="1 1"/>
<path d="M164 590.5H645" stroke="#00a0a0" stroke-dasharray="1 1"/>
<path d="M164 620.5H645" stroke="#00a0a0" stroke-dasharray="1 1"/>
<path d="M164 649.5H645" stroke="#00a0a0" stroke-dasharray="1 1"/>
</svg>
<svg style="position:absolute;left:0;top:0" width="650" height="698"><defs><clipPath id="cp1"><rect x="164" y="48" width="481" height="293"/></clipPath><clipPath id="cp2"><rect x="164" y="385" width="481" height="293"/></clipPath></defs><g clip-path="url(#cp1)">
</g><g clip-path="url(#cp2)">
<path d="M164 458.0 L164.0 458.9 L164.5 459.4 L165.0 459.9 L165.5 460.4 L166.0 460.9 L166.5 461.4 L167.0 461.9 L167.5 462.3 L168.0 462.8 L168.5 463.2 L169.0 463.6 L169.5 464.0 L170.0 464.4 L170.5 464.6 L171.0 464.9 L171.5 465.1 L172.0 465.3 L172.5 465.4 L173.0 465.5 L173.5 465.6 L174.0 465.7 L174.5 465.7 L175.0 465.8 L175.5 465.8 L176.0 465.8 L176.5 465.8 L177.0 465.8 L177.5 465.8 L178.0 465.7 L178.5 465.7 L179.0 465.7 L179.5 465.7 L180.0 465.7 L180.5 465.7 L181.0 465.8 L181.5 465.8 L182.0 465.9 L182.5 465.9 L183.0 466.0 L183.5 466.0 L184.0 466.1 L184.5 466.1 L185.0 466.2 L185.5 466.2 L186.0 466.1 L186.5 466.1 L187.0 466.0 L187.5 465.9 L188.0 465.8 L188.5 465.6 L189.0 465.3 L189.5 465.0 L190.0 464.6 L190.5 464.1 L191.0 463.5 L191.5 462.8 L192.0 462.1 L192.5 461.4 L193.0 460.6 L193.5 459.9 L194.0 459.2 L194.5 458.6 L195.0 458.0 L195.5 457.5 L196.0 457.0 L196.5 456.6 L197.0 456.2 L197.5 456.0 L198.0 455.8 L198.5 455.7 L199.0 455.6 L199.5 455.5 L200.0 455.5 L200.5 455.4 L201.0 455.4 L201.5 455.4 L202.0 455.4 L202.5 455.5 L203.0 455.6 L203.5 455.7 L204.0 455.8 L204.5 456.0 L205.0 456.5 L205.5 457.2 L206.0 458.0 L206.5 459.0 L207.0 460.0 L207.5 461.0 L208.0 462.1 L208.5 463.2 L209.0 464.3 L209.5 465.5 L210.0 466.7 L210.5 467.8 L211.0 469.0 L211.5 470.2 L212.0 471.4 L212.5 472.7 L213.0 474.0 L213.5 475.2 L214.0 476.5 L214.5 477.8 L215.0 479.1 L215.5 480.3 L216.0 481.5 L216.5 482.7 L217.0 483.9 L217.5 485.2 L218.0 486.4 L218.5 487.6 L219.0 488.8 L219.5 489.8 L220.0 490.8 L220.5 491.7 L221.0 492.5 L221.5 493.1 L222.0 493.5 L222.5 493.8 L223.0 494.0 L223.5 494.1 L224.0 494.1 L224.5 494.0 L225.0 494.0 L225.5 493.9 L226.0 493.7 L226.5 493.5 L227.0 493.3 L227.5 493.1 L228.0 492.8 L228.5 492.6 L229.0 492.3 L229.5 492.0 L230.0 491.8 L230.5 491.5 L231.0 491.3 L231.5 491.0 L232.0 490.8 L232.5 490.6 L233.0 490.5 L233.5 490.4 L234.0 490.3 L234.5 490.3 L235.0 490.3 L235.5 490.4 L236.0 490.5 L236.5 490.6 L237.0 490.8 L237.5 490.9 L238.0 491.2 L238.5 491.4 L239.0 491.6 L239.5 491.8 L240.0 492.1 L240.5 492.3 L241.0 492.5 L241.5 492.7 L242.0 493.1 L242.5 493.4 L243.0 493.8 L243.5 494.2 L244.0 494.6 L244.5 495.0 L245.0 495.4 L245.5 495.7 L246.0 496.0 L246.5 496.2 L247.0 496.3 L247.5 496.3 L248.0 496.2 L248.5 495.9 L249.0 495.5 L249.5 495.0 L250.0 494.5 L250.5 493.8 L251.0 493.0 L251.5 492.2 L252.0 491.3 L252.5 490.4 L253.0 489.4 L253.5 488.4 L254.0 487.4 L254.5 486.3 L255.0 485.1 L255.5 483.8 L256.0 482.4 L256.5 480.9 L257.0 479.4 L257.5 477.9 L258.0 476.4 L258.5 474.9 L259.0 473.4 L259.5 471.9 L260.0 470.4 L260.5 468.8 L261.0 467.2 L261.5 465.6 L262.0 464.0 L262.5 462.5 L263.0 460.9 L263.5 459.4 L264.0 458.0 L264.5 456.7 L265.0 455.4 L265.5 454.3 L266.0 453.2 L266.5 452.1 L267.0 451.0 L267.5 449.8 L268.0 448.5 L268.5 447.1 L269.0 445.5 L269.5 443.8 L270.0 441.8 L270.5 439.8 L271.0 437.6 L271.5 435.4 L272.0 433.2 L272.5 431.0 L273.0 428.9 L273.5 426.9 L274.0 425.0 L274.5 423.2 L275.0 421.5 L275.5 419.8 L276.0 418.2 L276.5 416.7 L277.0 415.4 L277.5 414.2 L278.0 413.2 L278.5 412.3 L279.0 411.5 L279.5 410.7 L280.0 410.0 L280.5 409.4 L281.0 408.9 L281.5 408.6 L282.0 408.5 L282.5 408.5 L283.0 408.8 L283.5 409.3 L284.0 410.1 L284.5 411.0 L285.0 412.1 L285.5 413.4 L286.0 414.8 L286.5 416.3 L287.0 417.9 L287.5 419.6 L288.0 421.3 L288.5 423.1 L289.0 425.1 L289.5 427.3 L290.0 429.6 L290.5 431.9 L291.0 434.3 L291.5 436.7 L292.0 439.0 L292.5 441.2 L293.0 443.3 L293.5 445.3 L294.0 447.3 L294.5 449.3 L295.0 451.2 L295.5 453.0 L296.0 454.8 L296.5 456.4 L297.0 458.0 L297.5 459.4 L298.0 460.8 L298.5 461.9 L299.0 462.9 L299.5 463.7 L300.0 464.2 L300.5 464.6 L301.0 465.0 L301.5 465.2 L302.0 465.5 L302.5 465.7 L303.0 465.9 L303.5 466.0 L304.0 466.1 L304.5 466.2 L305.0 466.2 L305.5 466.2 L306.0 466.2 L306.5 466.1 L307.0 466.1 L307.5 466.0 L308.0 465.9 L308.5 465.7 L309.0 465.5 L309.5 465.3 L310.0 465.0 L310.5 464.6 L311.0 464.2 L311.5 463.8 L312.0 463.3 L312.5 462.7 L313.0 462.0 L313.5 461.3 L314.0 460.4 L314.5 459.4 L315.0 458.3 L315.5 457.0 L316.0 455.6 L316.5 454.0 L317.0 452.1 L317.5 450.1 L318.0 447.8 L318.5 445.3 L319.0 442.8 L319.5 440.1 L320.0 437.4 L320.5 434.7 L321.0 432.1 L321.5 429.6 L322.0 427.2 L322.5 424.8 L323.0 422.5 L323.5 420.1 L324.0 417.8 L324.5 415.5 L325.0 413.3 L325.5 411.2 L326.0 409.3 L326.5 407.5 L327.0 405.9 L327.5 404.5 L328.0 403.2 L328.5 402.2 L329.0 401.3 L329.5 400.6 L330.0 400.2 L330.5 400.0 L331.0 400.0 L331.5 400.3 L332.0 400.9 L332.5 401.7 L333.0 402.7 L333.5 403.9 L334.0 405.2 L334.5 406.6 L335.0 408.1 L335.5 409.7 L336.0 411.4 L336.5 413.3 L337.0 415.2 L337.5 417.2 L338.0 419.3 L338.5 421.3 L339.0 423.3 L339.5 425.3 L340.0 427.2 L340.5 429.0 L341.0 430.8 L341.5 432.6 L342.0 434.4 L342.5 436.1 L343.0 437.9 L343.5 439.6 L344.0 441.4 L344.5 443.1 L345.0 444.8 L345.5 446.6 L346.0 448.5 L346.5 450.5 L347.0 452.4 L347.5 454.2 L348.0 455.8 L348.5 457.1 L349.0 458.0 L349.5 458.6 L350.0 459.1 L350.5 459.4 L351.0 459.6 L351.5 459.8 L352.0 459.9 L352.5 459.9 L353.0 459.8 L353.5 459.8 L354.0 459.7 L354.5 459.7 L355.0 459.7 L355.5 459.7 L356.0 459.8 L356.5 460.0 L357.0 460.1 L357.5 460.3 L358.0 460.5 L358.5 460.7 L359.0 460.9 L359.5 461.0 L360.0 461.2 L360.5 461.4 L361.0 461.6 L361.5 461.8 L362.0 462.0 L362.5 462.1 L363.0 462.3 L363.5 462.4 L364.0 462.6 L364.5 462.7 L365.0 462.8 L365.5 462.9 L366.0 462.9 L366.5 463.0 L367.0 463.0 L367.5 463.0 L368.0 462.9 L368.5 462.8 L369.0 462.7 L369.5 462.6 L370.0 462.5 L370.5 462.3 L371.0 462.1 L371.5 461.9 L372.0 461.7 L372.5 461.4 L373.0 461.2 L373.5 461.0 L374.0 460.7 L374.5 460.5 L375.0 460.3 L375.5 460.0 L376.0 459.8 L376.5 459.6 L377.0 459.2 L377.5 458.8 L378.0 458.4 L378.5 458.1 L379.0 458.0 L379.5 458.0 L380.0 457.9 L380.5 457.9 L381.0 457.8 L381.5 457.8 L382.0 457.7 L382.5 457.7 L383.0 457.6 L383.5 457.6 L384.0 457.5 L384.5 457.5 L385.0 457.4 L385.5 457.4 L386.0 457.3 L386.5 457.3 L387.0 457.2 L387.5 457.2 L388.0 457.1 L388.5 457.1 L389.0 457.1 L389.5 457.0 L390.0 457.0 L390.5 457.0 L391.0 457.0 L391.5 457.0 L392.0 457.0 L392.5 457.0 L393.0 457.0 L393.5 457.0 L394.0 457.0 L394.5 457.0 L395.0 457.1 L395.5 457.1 L396.0 457.2 L396.5 457.2 L397.0 457.3 L397.5 457.4 L398.0 457.5 L398.5 457.6 L399.0 457.7 L399.5 457.9 L400.0 458.0 L400.5 458.3 L401.0 459.0 L401.5 459.9 L402.0 461.0 L402.5 462.1 L403.0 463.3 L403.5 464.4 L404.0 465.3 L404.5 466.2 L405.0 467.2 L405.5 468.2 L406.0 469.2 L406.5 470.1 L407.0 471.1 L407.5 472.0 L408.0 472.9 L408.5 473.7 L409.0 474.3 L409.5 474.9 L410.0 475.2 L410.5 475.5 L411.0 475.7 L411.5 475.9 L412.0 476.0 L412.5 476.1 L413.0 476.1 L413.5 476.1 L414.0 476.0 L414.5 476.0 L415.0 475.9 L415.5 475.8 L416.0 475.7 L416.5 475.6 L417.0 475.6 L417.5 475.5 L418.0 475.5 L418.5 475.5 L419.0 475.5 L419.5 475.6 L420.0 475.7 L420.5 475.9 L421.0 476.1 L421.5 476.4 L422.0 476.8 L422.5 477.2 L423.0 477.7 L423.5 478.2 L424.0 478.8 L424.5 479.4 L425.0 480.1 L425.5 480.8 L426.0 481.6 L426.5 482.4 L427.0 483.3 L427.5 484.2 L428.0 485.2 L428.5 486.2 L429.0 487.3 L429.5 488.6 L430.0 489.9 L430.5 491.3 L431.0 492.7 L431.5 494.1 L432.0 495.6 L432.5 497.1 L433.0 498.5 L433.5 499.9 L434.0 501.3 L434.5 502.8 L435.0 504.4 L435.5 506.2 L436.0 508.0 L436.5 509.8 L437.0 511.4 L437.5 512.8 L438.0 513.8 L438.5 514.4 L439.0 514.5 L439.5 514.2 L440.0 513.5 L440.5 512.6 L441.0 511.4 L441.5 510.0 L442.0 508.4 L442.5 506.7 L443.0 504.9 L443.5 503.1 L444.0 501.2 L444.5 499.4 L445.0 497.6 L445.5 495.9 L446.0 494.0 L446.5 492.0 L447.0 489.9 L447.5 487.8 L448.0 485.7 L448.5 483.5 L449.0 481.4 L449.5 479.3 L450.0 477.2 L450.5 475.3 L451.0 473.4 L451.5 471.7 L452.0 470.1 L452.5 468.6 L453.0 467.2 L453.5 465.9 L454.0 464.5 L454.5 463.0 L455.0 461.5 L455.5 459.8 L456.0 458.0 L456.5 455.9 L457.0 453.5 L457.5 451.0 L458.0 448.3 L458.5 445.7 L459.0 443.2 L459.5 440.9 L460.0 438.9 L460.5 437.1 L461.0 435.4 L461.5 433.7 L462.0 432.0 L462.5 430.3 L463.0 428.7 L463.5 427.1 L464.0 425.6 L464.5 424.1 L465.0 422.6 L465.5 421.2 L466.0 419.8 L466.5 418.5 L467.0 417.2 L467.5 415.9 L468.0 414.7 L468.5 413.5 L469.0 412.3 L469.5 411.2 L470.0 410.1 L470.5 409.0 L471.0 407.9 L471.5 406.9 L472.0 406.0 L472.5 405.1 L473.0 404.2 L473.5 403.4 L474.0 402.7 L474.5 402.1 L475.0 401.6 L475.5 401.1 L476.0 400.7 L476.5 400.5 L477.0 400.5 L477.5 400.7 L478.0 401.0 L478.5 401.6 L479.0 402.2 L479.5 403.1 L480.0 404.1 L480.5 405.3 L481.0 406.6 L481.5 408.2 L482.0 410.1 L482.5 412.3 L483.0 414.6 L483.5 417.1 L484.0 419.6 L484.5 422.1 L485.0 424.4 L485.5 426.7 L486.0 428.6 L486.5 430.4 L487.0 432.2 L487.5 433.9 L488.0 435.5 L488.5 437.0 L489.0 438.6 L489.5 440.0 L490.0 441.5 L490.5 442.9 L491.0 444.3 L491.5 445.6 L492.0 447.0 L492.5 448.3 L493.0 449.6 L493.5 450.9 L494.0 452.1 L494.5 453.2 L495.0 454.3 L495.5 455.4 L496.0 456.3 L496.5 457.2 L497.0 458.0 L497.5 458.7 L498.0 459.4 L498.5 460.0 L499.0 460.6 L499.5 461.2 L500.0 461.7 L500.5 462.1 L501.0 462.5 L501.5 462.7 L502.0 463.0 L502.5 463.1 L503.0 463.1 L503.5 463.1 L504.0 463.1 L504.5 463.1 L505.0 462.9 L505.5 462.8 L506.0 462.5 L506.5 462.1 L507.0 461.6 L507.5 461.0 L508.0 460.2 L508.5 459.2 L509.0 458.0 L509.5 456.6 L510.0 454.9 L510.5 453.0 L511.0 450.9 L511.5 448.7 L512.0 446.4 L512.5 444.0 L513.0 441.6 L513.5 439.1 L514.0 436.8 L514.5 434.5 L515.0 432.3 L515.5 430.2 L516.0 428.0 L516.5 425.8 L517.0 423.6 L517.5 421.4 L518.0 419.2 L518.5 417.2 L519.0 415.2 L519.5 413.4 L520.0 411.8 L520.5 410.2 L521.0 408.6 L521.5 407.1 L522.0 405.6 L522.5 404.3 L523.0 403.2 L523.5 402.2 L524.0 401.4 L524.5 400.9 L525.0 400.7 L525.5 400.9 L526.0 401.3 L526.5 402.0 L527.0 402.9 L527.5 404.0 L528.0 405.2 L528.5 406.6 L529.0 408.0 L529.5 409.5 L530.0 411.0 L530.5 412.6 L531.0 414.4 L531.5 416.3 L532.0 418.3 L532.5 420.3 L533.0 422.5 L533.5 424.6 L534.0 426.7 L534.5 428.8 L535.0 430.8 L535.5 432.8 L536.0 434.9 L536.5 436.9 L537.0 438.9 L537.5 441.0 L538.0 443.0 L538.5 445.0 L539.0 446.9 L539.5 448.8 L540.0 450.7 L540.5 452.4 L541.0 453.9 L541.5 455.3 L542.0 456.6 L542.5 458.0 L543.0 459.4 L543.5 460.8 L544.0 462.2 L544.5 463.6 L545.0 465.0 L545.5 466.4 L546.0 467.8 L546.5 469.2 L547.0 470.6 L547.5 472.0 L548.0 473.4 L548.5 474.9 L549.0 476.3 L549.5 477.8 L550.0 479.3 L550.5 480.8 L551.0 482.3 L551.5 483.8 L552.0 485.3 L552.5 486.8 L553.0 488.2 L553.5 489.6 L554.0 491.0 L554.5 492.5 L555.0 494.1 L555.5 495.7 L556.0 497.4 L556.5 499.0 L557.0 500.4 L557.5 501.7 L558.0 502.6 L558.5 503.3 L559.0 503.5 L559.5 503.3 L560.0 502.7 L560.5 501.8 L561.0 500.6 L561.5 499.2 L562.0 497.7 L562.5 496.0 L563.0 494.3 L563.5 492.6 L564.0 491.0 L564.5 489.4 L565.0 487.7 L565.5 485.9 L566.0 484.0 L566.5 482.1 L567.0 480.1 L567.5 478.2 L568.0 476.3 L568.5 474.4 L569.0 472.5 L569.5 470.7 L570.0 469.0 L570.5 467.4 L571.0 465.8 L571.5 464.3 L572.0 462.9 L572.5 461.5 L573.0 460.2 L573.5 459.1 L574.0 458.0 L574.5 457.0 L575.0 456.1 L575.5 455.2 L576.0 454.4 L576.5 453.7 L577.0 453.0 L577.5 452.4 L578.0 451.7 L578.5 451.2 L579.0 450.7 L579.5 450.2 L580.0 449.8 L580.5 449.4 L581.0 449.2 L581.5 449.0 L582.0 448.8 L582.5 448.8 L583.0 448.8 L583.5 449.0 L584.0 449.2 L584.5 449.5 L585.0 449.9 L585.5 450.3 L586.0 450.7 L586.5 451.1 L587.0 451.5 L587.5 451.9 L588.0 452.1 L588.5 452.4 L589.0 452.6 L589.5 452.8 L590.0 453.0 L590.5 453.1 L591.0 453.3 L591.5 453.4 L592.0 453.6 L592.5 453.7 L593.0 453.8 L593.5 453.9 L594.0 454.0 L594.5 454.0 L595.0 454.0 L595.5 454.0 L596.0 453.9 L596.5 453.9 L597.0 453.8 L597.5 453.8 L598.0 453.7 L598.5 453.7 L599.0 453.8 L599.5 453.8 L600.0 454.0 L600.5 454.2 L601.0 454.4 L601.5 454.7 L602.0 455.1 L602.5 455.5 L603.0 455.9 L603.5 456.3 L604.0 456.7 L604.5 457.0 L605.0 457.4 L605.5 457.7 L606.0 458.0 L606.5 458.2 L607.0 458.5 L607.5 458.7 L608.0 458.9 L608.5 459.1 L609.0 459.2 L609.5 459.4 L610.0 459.6 L610.5 459.7 L611.0 459.9 L611.5 460.1 L612.0 460.2 L612.5 460.4 L613.0 460.6 L613.5 460.7 L614.0 460.9 L614.5 461.1 L615.0 461.3 L615.5 461.6 L616.0 461.8 L616.5 462.0 L617.0 462.3 L617.5 462.5 L618.0 462.7 L618.5 463.0 L619.0 463.2 L619.5 463.4 L620.0 463.6 L620.5 463.8 L621.0 463.9 L621.5 464.1 L622.0 464.2 L622.5 464.4 L623.0 464.5 L623.5 464.6 L624.0 464.7 L624.5 464.8 L625.0 464.9 L625.5 465.0 L626.0 465.1 L626.5 465.1 L627.0 465.2 L627.5 465.2 L628.0 465.2 L628.5 465.2 L629.0 465.1 L629.5 465.1 L630.0 465.0 L630.5 464.8 L631.0 464.7 L631.5 464.5 L632.0 464.2 L632.5 464.0 L633.0 463.7 L633.5 463.4 L634.0 463.1 L634.5 462.8 L635.0 462.5 L635.5 462.2 L636.0 461.9 L636.5 461.6 L637.0 461.4 L637.5 461.1 L638.0 460.9 L638.5 460.8 L639.0 460.6 L639.5 460.5 L640.0 460.4 L640.5 460.3 L641.0 460.2 L641.5 460.1 L642.0 460.0 L642.5 460.0 L643.0 459.9 L643.5 459.8 L644.0 459.8 L644.5 459.7 L645.0 459.6 L645 458.0 Z" fill="#00ffff"/>
<path d="M164 456.5H645" stroke="#0ff" stroke-dasharray="3 3" stroke-width="1" shape-rendering="crispEdges"/>
<path d="M164 653.5H645" stroke="#fff" stroke-width="1"/>
</g><g clip-path="url(#cp1)">
<path d="M164.0 190.0 L164.5 189.8 L165.0 189.6 L165.5 189.4 L166.0 189.2 L166.5 189.0 L167.0 188.8 L167.5 188.6 L168.0 188.4 L168.5 188.2 L169.0 188.0 L169.5 187.8 L170.0 187.6 L170.5 187.4 L171.0 187.3 L171.5 187.1 L172.0 186.9 L172.5 186.7 L173.0 186.6 L173.5 186.4 L174.0 186.3 L174.5 186.1 L175.0 186.0 L175.5 185.9 L176.0 185.8 L176.5 185.7 L177.0 185.6 L177.5 185.6 L178.0 185.5 L178.5 185.4 L179.0 185.4 L179.5 185.3 L180.0 185.2 L180.5 185.2 L181.0 185.1 L181.5 185.0 L182.0 185.0 L182.5 184.9 L183.0 184.8 L183.5 184.7 L184.0 184.6 L184.5 184.6 L185.0 184.5 L185.5 184.4 L186.0 184.3 L186.5 184.2 L187.0 184.1 L187.5 184.0 L188.0 183.8 L188.5 183.7 L189.0 183.4 L189.5 183.2 L190.0 182.9 L190.5 182.6 L191.0 182.2 L191.5 181.8 L192.0 181.3 L192.5 180.7 L193.0 180.1 L193.5 179.5 L194.0 178.8 L194.5 177.9 L195.0 177.0 L195.5 175.9 L196.0 174.7 L196.5 173.2 L197.0 171.6 L197.5 169.9 L198.0 168.1 L198.5 166.2 L199.0 164.3 L199.5 162.5 L200.0 160.7 L200.5 158.9 L201.0 157.2 L201.5 155.5 L202.0 153.7 L202.5 152.0 L203.0 150.3 L203.5 148.5 L204.0 146.7 L204.5 144.8 L205.0 142.8 L205.5 140.8 L206.0 138.8 L206.5 136.8 L207.0 134.8 L207.5 132.8 L208.0 130.9 L208.5 129.1 L209.0 127.3 L209.5 125.6 L210.0 123.9 L210.5 122.2 L211.0 120.6 L211.5 119.1 L212.0 117.7 L212.5 116.4 L213.0 115.2 L213.5 114.1 L214.0 113.0 L214.5 112.1 L215.0 111.2 L215.5 110.3 L216.0 109.5 L216.5 108.8 L217.0 108.1 L217.5 107.4 L218.0 106.8 L218.5 106.2 L219.0 105.6 L219.5 105.1 L220.0 104.5 L220.5 104.0 L221.0 103.5 L221.5 102.9 L222.0 102.3 L222.5 101.7 L223.0 101.1 L223.5 100.5 L224.0 99.9 L224.5 99.3 L225.0 98.7 L225.5 98.1 L226.0 97.5 L226.5 96.9 L227.0 96.4 L227.5 95.8 L228.0 95.3 L228.5 94.8 L229.0 94.3 L229.5 93.8 L230.0 93.3 L230.5 92.8 L231.0 92.3 L231.5 91.9 L232.0 91.5 L232.5 91.1 L233.0 90.8 L233.5 90.4 L234.0 90.2 L234.5 90.0 L235.0 89.8 L235.5 89.7 L236.0 89.6 L236.5 89.6 L237.0 89.6 L237.5 89.5 L238.0 89.6 L238.5 89.6 L239.0 89.6 L239.5 89.6 L240.0 89.5 L240.5 89.5 L241.0 89.4 L241.5 89.3 L242.0 89.2 L242.5 89.0 L243.0 88.8 L243.5 88.4 L244.0 88.1 L244.5 87.7 L245.0 87.2 L245.5 86.8 L246.0 86.3 L246.5 85.8 L247.0 85.4 L247.5 84.9 L248.0 84.4 L248.5 83.9 L249.0 83.4 L249.5 82.8 L250.0 82.3 L250.5 81.8 L251.0 81.3 L251.5 81.0 L252.0 80.6 L252.5 80.3 L253.0 80.0 L253.5 79.7 L254.0 79.6 L254.5 79.5 L255.0 79.5 L255.5 79.6 L256.0 79.8 L256.5 80.1 L257.0 80.5 L257.5 81.0 L258.0 81.6 L258.5 82.4 L259.0 83.4 L259.5 84.6 L260.0 85.9 L260.5 87.4 L261.0 89.0 L261.5 90.9 L262.0 92.9 L262.5 95.1 L263.0 97.5 L263.5 100.0 L264.0 102.6 L264.5 105.3 L265.0 108.1 L265.5 110.9 L266.0 113.8 L266.5 116.8 L267.0 119.8 L267.5 122.8 L268.0 125.8 L268.5 128.8 L269.0 131.8 L269.5 134.9 L270.0 138.1 L270.5 141.2 L271.0 144.3 L271.5 147.3 L272.0 150.1 L272.5 152.8 L273.0 155.5 L273.5 158.0 L274.0 160.5 L274.5 162.9 L275.0 165.2 L275.5 167.2 L276.0 169.1 L276.5 170.7 L277.0 172.1 L277.5 173.2 L278.0 174.1 L278.5 174.8 L279.0 175.5 L279.5 176.0 L280.0 176.5 L280.5 176.9 L281.0 177.3 L281.5 177.6 L282.0 177.8 L282.5 177.8 L283.0 177.7 L283.5 177.4 L284.0 176.8 L284.5 176.0 L285.0 175.2 L285.5 174.2 L286.0 173.1 L286.5 172.0 L287.0 170.7 L287.5 169.3 L288.0 167.8 L288.5 166.2 L289.0 164.4 L289.5 162.5 L290.0 160.5 L290.5 158.3 L291.0 156.1 L291.5 153.7 L292.0 151.2 L292.5 148.6 L293.0 145.9 L293.5 143.2 L294.0 140.3 L294.5 137.3 L295.0 134.0 L295.5 130.6 L296.0 127.1 L296.5 123.5 L297.0 119.9 L297.5 116.3 L298.0 112.8 L298.5 109.4 L299.0 106.2 L299.5 103.1 L300.0 99.9 L300.5 96.9 L301.0 93.9 L301.5 91.1 L302.0 88.5 L302.5 86.1 L303.0 84.1 L303.5 82.3 L304.0 80.8 L304.5 79.5 L305.0 78.4 L305.5 77.5 L306.0 76.7 L306.5 76.2 L307.0 75.8 L307.5 75.6 L308.0 75.8 L308.5 76.4 L309.0 77.3 L309.5 78.5 L310.0 80.0 L310.5 81.7 L311.0 83.7 L311.5 85.8 L312.0 88.1 L312.5 90.5 L313.0 93.0 L313.5 95.5 L314.0 98.0 L314.5 100.6 L315.0 103.2 L315.5 106.0 L316.0 108.8 L316.5 111.7 L317.0 114.5 L317.5 117.4 L318.0 120.2 L318.5 123.0 L319.0 125.9 L319.5 128.7 L320.0 131.6 L320.5 134.5 L321.0 137.3 L321.5 140.2 L322.0 142.9 L322.5 145.7 L323.0 148.3 L323.5 151.0 L324.0 153.7 L324.5 156.4 L325.0 159.1 L325.5 161.7 L326.0 164.2 L326.5 166.6 L327.0 168.8 L327.5 170.7 L328.0 172.4 L328.5 173.8 L329.0 174.9 L329.5 175.7 L330.0 176.4 L330.5 176.9 L331.0 177.2 L331.5 177.4 L332.0 177.4 L332.5 177.4 L333.0 177.3 L333.5 177.1 L334.0 176.8 L334.5 176.4 L335.0 175.8 L335.5 175.1 L336.0 174.2 L336.5 173.2 L337.0 171.9 L337.5 170.5 L338.0 168.8 L338.5 166.9 L339.0 164.9 L339.5 162.7 L340.0 160.4 L340.5 158.1 L341.0 155.7 L341.5 153.4 L342.0 151.2 L342.5 149.0 L343.0 146.7 L343.5 144.4 L344.0 142.1 L344.5 139.7 L345.0 137.4 L345.5 135.1 L346.0 132.9 L346.5 130.9 L347.0 128.9 L347.5 127.2 L348.0 125.5 L348.5 124.0 L349.0 122.7 L349.5 121.5 L350.0 120.4 L350.5 119.4 L351.0 118.5 L351.5 117.8 L352.0 117.1 L352.5 116.6 L353.0 116.2 L353.5 116.0 L354.0 115.8 L354.5 115.7 L355.0 115.7 L355.5 115.9 L356.0 116.0 L356.5 116.2 L357.0 116.5 L357.5 117.0 L358.0 117.6 L358.5 118.4 L359.0 119.4 L359.5 120.8 L360.0 122.3 L360.5 124.1 L361.0 126.0 L361.5 128.0 L362.0 130.2 L362.5 132.4 L363.0 134.6 L363.5 136.8 L364.0 139.0 L364.5 141.1 L365.0 143.3 L365.5 145.6 L366.0 147.9 L366.5 150.2 L367.0 152.5 L367.5 154.7 L368.0 157.0 L368.5 159.1 L369.0 161.1 L369.5 163.1 L370.0 164.9 L370.5 166.8 L371.0 168.6 L371.5 170.3 L372.0 171.9 L372.5 173.5 L373.0 175.0 L373.5 176.4 L374.0 177.7 L374.5 178.9 L375.0 179.9 L375.5 180.9 L376.0 181.8 L376.5 182.7 L377.0 183.4 L377.5 184.0 L378.0 184.5 L378.5 184.9 L379.0 185.3 L379.5 185.5 L380.0 185.6 L380.5 185.6 L381.0 185.6 L381.5 185.4 L382.0 185.1 L382.5 184.8 L383.0 184.3 L383.5 183.7 L384.0 183.0 L384.5 182.2 L385.0 181.3 L385.5 180.2 L386.0 179.0 L386.5 177.6 L387.0 176.2 L387.5 174.7 L388.0 173.1 L388.5 171.4 L389.0 169.8 L389.5 168.1 L390.0 166.2 L390.5 164.2 L391.0 162.1 L391.5 159.9 L392.0 157.7 L392.5 155.6 L393.0 153.4 L393.5 151.5 L394.0 149.6 L394.5 148.0 L395.0 146.5 L395.5 145.2 L396.0 144.1 L396.5 143.0 L397.0 141.9 L397.5 140.9 L398.0 139.9 L398.5 138.9 L399.0 137.8 L399.5 136.6 L400.0 135.3 L400.5 133.8 L401.0 132.1 L401.5 130.3 L402.0 128.4 L402.5 126.6 L403.0 124.9 L403.5 123.4 L404.0 122.2 L404.5 121.3 L405.0 120.7 L405.5 120.2 L406.0 119.9 L406.5 119.7 L407.0 119.6 L407.5 119.4 L408.0 119.2 L408.5 119.0 L409.0 118.8 L409.5 118.6 L410.0 118.5 L410.5 118.4 L411.0 118.3 L411.5 118.1 L412.0 118.0 L412.5 117.9 L413.0 117.7 L413.5 117.5 L414.0 117.2 L414.5 116.9 L415.0 116.7 L415.5 116.4 L416.0 116.2 L416.5 115.9 L417.0 115.6 L417.5 115.3 L418.0 114.8 L418.5 114.4 L419.0 113.8 L419.5 113.1 L420.0 112.4 L420.5 111.4 L421.0 110.3 L421.5 109.0 L422.0 107.6 L422.5 106.0 L423.0 104.5 L423.5 102.9 L424.0 101.3 L424.5 99.8 L425.0 98.4 L425.5 97.0 L426.0 95.7 L426.5 94.3 L427.0 93.0 L427.5 91.6 L428.0 90.3 L428.5 89.0 L429.0 87.8 L429.5 86.6 L430.0 85.4 L430.5 84.3 L431.0 83.3 L431.5 82.4 L432.0 81.5 L432.5 80.7 L433.0 79.9 L433.5 79.2 L434.0 78.5 L434.5 77.9 L435.0 77.3 L435.5 76.7 L436.0 76.2 L436.5 75.7 L437.0 75.2 L437.5 74.7 L438.0 74.3 L438.5 73.9 L439.0 73.5 L439.5 73.1 L440.0 72.8 L440.5 72.5 L441.0 72.2 L441.5 72.0 L442.0 71.8 L442.5 71.7 L443.0 71.6 L443.5 71.6 L444.0 71.6 L444.5 71.6 L445.0 71.7 L445.5 71.8 L446.0 72.0 L446.5 72.3 L447.0 72.7 L447.5 73.2 L448.0 73.7 L448.5 74.4 L449.0 75.2 L449.5 76.2 L450.0 77.2 L450.5 78.5 L451.0 79.9 L451.5 81.5 L452.0 83.3 L452.5 85.4 L453.0 87.8 L453.5 90.5 L454.0 93.3 L454.5 96.3 L455.0 99.3 L455.5 102.3 L456.0 105.1 L456.5 107.8 L457.0 110.4 L457.5 112.9 L458.0 115.4 L458.5 117.9 L459.0 120.4 L459.5 122.8 L460.0 125.2 L460.5 127.6 L461.0 129.9 L461.5 132.2 L462.0 134.4 L462.5 136.6 L463.0 138.8 L463.5 141.1 L464.0 143.4 L464.5 145.7 L465.0 148.2 L465.5 150.8 L466.0 153.5 L466.5 156.1 L467.0 158.7 L467.5 161.2 L468.0 163.6 L468.5 165.8 L469.0 167.7 L469.5 169.4 L470.0 171.0 L470.5 172.6 L471.0 174.0 L471.5 175.4 L472.0 176.6 L472.5 177.8 L473.0 178.8 L473.5 179.8 L474.0 180.6 L474.5 181.2 L475.0 181.8 L475.5 182.1 L476.0 182.3 L476.5 182.3 L477.0 182.1 L477.5 181.7 L478.0 181.2 L478.5 180.5 L479.0 179.6 L479.5 178.5 L480.0 177.2 L480.5 175.8 L481.0 174.0 L481.5 171.8 L482.0 169.3 L482.5 166.6 L483.0 163.8 L483.5 160.9 L484.0 158.0 L484.5 155.2 L485.0 152.3 L485.5 149.3 L486.0 146.3 L486.5 143.2 L487.0 140.1 L487.5 137.0 L488.0 133.9 L488.5 130.9 L489.0 127.9 L489.5 125.0 L490.0 122.1 L490.5 119.1 L491.0 116.1 L491.5 113.2 L492.0 110.3 L492.5 107.5 L493.0 104.9 L493.5 102.5 L494.0 100.3 L494.5 98.4 L495.0 96.6 L495.5 94.9 L496.0 93.3 L496.5 91.8 L497.0 90.4 L497.5 89.1 L498.0 87.9 L498.5 86.8 L499.0 85.8 L499.5 84.9 L500.0 84.1 L500.5 83.4 L501.0 82.8 L501.5 82.4 L502.0 82.3 L502.5 82.5 L503.0 83.0 L503.5 83.8 L504.0 85.0 L504.5 86.4 L505.0 88.2 L505.5 90.1 L506.0 92.3 L506.5 94.7 L507.0 97.2 L507.5 99.8 L508.0 102.5 L508.5 105.3 L509.0 108.0 L509.5 110.7 L510.0 113.6 L510.5 116.5 L511.0 119.6 L511.5 122.7 L512.0 125.8 L512.5 129.0 L513.0 132.1 L513.5 135.1 L514.0 138.1 L514.5 140.8 L515.0 143.6 L515.5 146.4 L516.0 149.3 L516.5 152.0 L517.0 154.8 L517.5 157.4 L518.0 159.9 L518.5 162.3 L519.0 164.5 L519.5 166.5 L520.0 168.3 L520.5 169.9 L521.0 171.3 L521.5 172.6 L522.0 173.8 L522.5 174.8 L523.0 175.8 L523.5 176.5 L524.0 177.2 L524.5 177.7 L525.0 178.1 L525.5 178.3 L526.0 178.4 L526.5 178.4 L527.0 178.2 L527.5 177.8 L528.0 177.4 L528.5 176.8 L529.0 176.0 L529.5 175.2 L530.0 174.2 L530.5 173.1 L531.0 171.9 L531.5 170.7 L532.0 169.3 L532.5 167.8 L533.0 166.2 L533.5 164.4 L534.0 162.5 L534.5 160.4 L535.0 158.3 L535.5 156.2 L536.0 153.9 L536.5 151.7 L537.0 149.4 L537.5 147.0 L538.0 144.8 L538.5 142.4 L539.0 140.0 L539.5 137.4 L540.0 134.7 L540.5 132.0 L541.0 129.3 L541.5 126.6 L542.0 124.0 L542.5 121.4 L543.0 119.0 L543.5 116.7 L544.0 114.6 L544.5 112.7 L545.0 110.8 L545.5 109.1 L546.0 107.4 L546.5 105.8 L547.0 104.3 L547.5 103.0 L548.0 101.7 L548.5 100.4 L549.0 99.3 L549.5 98.3 L550.0 97.3 L550.5 96.4 L551.0 95.7 L551.5 95.1 L552.0 94.6 L552.5 94.1 L553.0 93.8 L553.5 93.6 L554.0 93.4 L554.5 93.3 L555.0 93.2 L555.5 93.1 L556.0 93.1 L556.5 93.1 L557.0 93.1 L557.5 93.2 L558.0 93.3 L558.5 93.4 L559.0 93.6 L559.5 93.9 L560.0 94.2 L560.5 94.5 L561.0 94.9 L561.5 95.4 L562.0 96.0 L562.5 96.6 L563.0 97.3 L563.5 98.0 L564.0 98.8 L564.5 99.7 L565.0 100.6 L565.5 101.6 L566.0 102.7 L566.5 103.8 L567.0 105.0 L567.5 106.3 L568.0 107.6 L568.5 109.1 L569.0 110.6 L569.5 112.3 L570.0 114.0 L570.5 115.8 L571.0 117.7 L571.5 119.6 L572.0 121.5 L572.5 123.5 L573.0 125.5 L573.5 127.5 L574.0 129.4 L574.5 131.4 L575.0 133.3 L575.5 135.3 L576.0 137.3 L576.5 139.4 L577.0 141.4 L577.5 143.5 L578.0 145.5 L578.5 147.6 L579.0 149.6 L579.5 151.6 L580.0 153.5 L580.5 155.5 L581.0 157.4 L581.5 159.4 L582.0 161.3 L582.5 163.3 L583.0 165.2 L583.5 167.1 L584.0 169.0 L584.5 170.8 L585.0 172.5 L585.5 174.2 L586.0 175.8 L586.5 177.3 L587.0 178.8 L587.5 180.2 L588.0 181.6 L588.5 182.9 L589.0 184.2 L589.5 185.4 L590.0 186.5 L590.5 187.6 L591.0 188.5 L591.5 189.4 L592.0 190.1 L592.5 190.8 L593.0 191.3 L593.5 191.8 L594.0 192.2 L594.5 192.5 L595.0 192.7 L595.5 192.9 L596.0 193.1 L596.5 193.2 L597.0 193.2 L597.5 193.3 L598.0 193.3 L598.5 193.4 L599.0 193.4 L599.5 193.4 L600.0 193.4 L600.5 193.4 L601.0 193.4 L601.5 193.3 L602.0 193.3 L602.5 193.2 L603.0 193.1 L603.5 192.9 L604.0 192.8 L604.5 192.7 L605.0 192.5 L605.5 192.4 L606.0 192.2 L606.5 192.0 L607.0 191.9 L607.5 191.7 L608.0 191.5 L608.5 191.3 L609.0 191.1 L609.5 190.9 L610.0 190.7 L610.5 190.4 L611.0 190.1 L611.5 189.8 L612.0 189.6 L612.5 189.3 L613.0 189.0 L613.5 188.7 L614.0 188.4 L614.5 188.2 L615.0 187.9 L615.5 187.7 L616.0 187.5 L616.5 187.3 L617.0 187.2 L617.5 187.0 L618.0 186.9 L618.5 186.7 L619.0 186.6 L619.5 186.4 L620.0 186.3 L620.5 186.2 L621.0 186.1 L621.5 186.0 L622.0 185.9 L622.5 185.8 L623.0 185.7 L623.5 185.6 L624.0 185.6 L624.5 185.5 L625.0 185.5 L625.5 185.4 L626.0 185.4 L626.5 185.4 L627.0 185.4 L627.5 185.4 L628.0 185.4 L628.5 185.5 L629.0 185.5 L629.5 185.5 L630.0 185.6 L630.5 185.7 L631.0 185.7 L631.5 185.8 L632.0 185.9 L632.5 186.0 L633.0 186.1 L633.5 186.2 L634.0 186.3 L634.5 186.4 L635.0 186.5 L635.5 186.6 L636.0 186.7 L636.5 186.8 L637.0 186.9 L637.5 187.0 L638.0 187.2 L638.5 187.3 L639.0 187.4 L639.5 187.5 L640.0 187.7 L640.5 187.8 L641.0 188.0 L641.5 188.1 L642.0 188.3 L642.5 188.4 L643.0 188.5 L643.5 188.7 L644.0 188.8 L644.5 189.0 L645.0 189.1" fill="none" stroke="#fff" stroke-width="1" shape-rendering="crispEdges"/>
<path d="M165 190h1v1h-1ZM166 188h1v1h-1ZM167 191h1v1h-1ZM169 191h1v1h-1ZM170 194h1v1h-1ZM171 192h1v1h-1ZM173 187h1v1h-1ZM174 190h1v1h-1ZM176 188h1v1h-1ZM177 191h1v1h-1ZM178 190h1v1h-1ZM180 191h1v1h-1ZM181 197h1v1h-1ZM182 188h1v1h-1ZM184 189h1v1h-1ZM185 189h1v1h-1ZM186 196h1v1h-1ZM188 195h1v1h-1ZM189 190h1v1h-1ZM190 187h1v1h-1ZM192 182h1v1h-1ZM193 181h1v1h-1ZM194 176h1v1h-1ZM196 177h1v1h-1ZM197 170h1v1h-1ZM198 165h1v1h-1ZM200 165h1v1h-1ZM201 151h1v1h-1ZM202 151h1v1h-1ZM204 143h1v1h-1ZM205 145h1v1h-1ZM206 140h1v1h-1ZM208 135h1v1h-1ZM209 131h1v1h-1ZM211 127h1v1h-1ZM212 127h1v1h-1ZM213 129h1v1h-1ZM215 132h1v1h-1ZM216 131h1v1h-1ZM217 126h1v1h-1ZM219 134h1v1h-1ZM220 131h1v1h-1ZM221 130h1v1h-1ZM223 136h1v1h-1ZM224 129h1v1h-1ZM225 123h1v1h-1ZM227 133h1v1h-1ZM228 124h1v1h-1ZM229 121h1v1h-1ZM231 121h1v1h-1ZM232 115h1v1h-1ZM233 115h1v1h-1ZM235 120h1v1h-1ZM236 112h1v1h-1ZM237 112h1v1h-1ZM239 112h1v1h-1ZM240 111h1v1h-1ZM242 116h1v1h-1ZM243 117h1v1h-1ZM244 121h1v1h-1ZM246 113h1v1h-1ZM247 116h1v1h-1ZM248 114h1v1h-1ZM250 115h1v1h-1ZM251 112h1v1h-1ZM252 108h1v1h-1ZM254 99h1v1h-1ZM255 109h1v1h-1ZM256 105h1v1h-1ZM258 98h1v1h-1ZM259 93h1v1h-1ZM260 97h1v1h-1ZM262 109h1v1h-1ZM263 114h1v1h-1ZM264 108h1v1h-1ZM266 116h1v1h-1ZM267 121h1v1h-1ZM268 118h1v1h-1ZM270 123h1v1h-1ZM271 130h1v1h-1ZM272 132h1v1h-1ZM274 134h1v1h-1ZM275 131h1v1h-1ZM277 135h1v1h-1ZM278 136h1v1h-1ZM279 136h1v1h-1ZM281 143h1v1h-1ZM282 133h1v1h-1ZM283 134h1v1h-1ZM285 136h1v1h-1ZM286 145h1v1h-1ZM287 140h1v1h-1ZM289 134h1v1h-1ZM290 141h1v1h-1ZM291 134h1v1h-1ZM293 126h1v1h-1ZM294 131h1v1h-1ZM295 115h1v1h-1ZM297 113h1v1h-1ZM298 110h1v1h-1ZM299 101h1v1h-1ZM301 94h1v1h-1ZM302 91h1v1h-1ZM303 84h1v1h-1ZM305 88h1v1h-1ZM306 85h1v1h-1ZM308 79h1v1h-1ZM309 84h1v1h-1ZM310 89h1v1h-1ZM312 85h1v1h-1ZM313 87h1v1h-1ZM314 99h1v1h-1ZM316 108h1v1h-1ZM317 108h1v1h-1ZM318 112h1v1h-1ZM320 117h1v1h-1ZM321 115h1v1h-1ZM322 126h1v1h-1ZM324 121h1v1h-1ZM325 131h1v1h-1ZM326 130h1v1h-1ZM328 126h1v1h-1ZM329 125h1v1h-1ZM330 126h1v1h-1ZM332 129h1v1h-1ZM333 130h1v1h-1ZM334 131h1v1h-1ZM336 131h1v1h-1ZM337 135h1v1h-1ZM338 135h1v1h-1ZM340 135h1v1h-1ZM341 137h1v1h-1ZM343 133h1v1h-1ZM344 131h1v1h-1ZM345 122h1v1h-1ZM347 125h1v1h-1ZM348 125h1v1h-1ZM349 122h1v1h-1ZM351 119h1v1h-1ZM352 114h1v1h-1ZM353 118h1v1h-1ZM355 116h1v1h-1ZM356 111h1v1h-1ZM357 127h1v1h-1ZM359 124h1v1h-1ZM360 122h1v1h-1ZM361 127h1v1h-1ZM363 133h1v1h-1ZM364 141h1v1h-1ZM365 143h1v1h-1ZM367 150h1v1h-1ZM368 158h1v1h-1ZM369 153h1v1h-1ZM371 166h1v1h-1ZM372 173h1v1h-1ZM374 176h1v1h-1ZM375 179h1v1h-1ZM376 182h1v1h-1ZM378 193h1v1h-1ZM379 187h1v1h-1ZM380 182h1v1h-1ZM382 189h1v1h-1ZM383 185h1v1h-1ZM384 179h1v1h-1ZM386 177h1v1h-1ZM387 171h1v1h-1ZM388 179h1v1h-1ZM390 170h1v1h-1ZM391 165h1v1h-1ZM392 156h1v1h-1ZM394 149h1v1h-1ZM395 158h1v1h-1ZM396 140h1v1h-1ZM398 146h1v1h-1ZM399 135h1v1h-1ZM400 140h1v1h-1ZM402 132h1v1h-1ZM403 127h1v1h-1ZM404 130h1v1h-1ZM406 129h1v1h-1ZM407 127h1v1h-1ZM409 130h1v1h-1ZM410 131h1v1h-1ZM411 126h1v1h-1ZM413 128h1v1h-1ZM414 133h1v1h-1ZM415 122h1v1h-1ZM417 134h1v1h-1ZM418 125h1v1h-1ZM419 128h1v1h-1ZM421 125h1v1h-1ZM422 121h1v1h-1ZM423 121h1v1h-1ZM425 118h1v1h-1ZM426 123h1v1h-1ZM427 121h1v1h-1ZM429 112h1v1h-1ZM430 117h1v1h-1ZM431 117h1v1h-1ZM433 120h1v1h-1ZM434 112h1v1h-1ZM435 116h1v1h-1ZM437 114h1v1h-1ZM438 122h1v1h-1ZM439 118h1v1h-1ZM441 120h1v1h-1ZM442 112h1v1h-1ZM444 107h1v1h-1ZM445 113h1v1h-1ZM446 101h1v1h-1ZM448 100h1v1h-1ZM449 102h1v1h-1ZM450 106h1v1h-1ZM452 93h1v1h-1ZM453 99h1v1h-1ZM454 103h1v1h-1ZM456 102h1v1h-1ZM457 106h1v1h-1ZM458 108h1v1h-1ZM460 122h1v1h-1ZM461 119h1v1h-1ZM462 121h1v1h-1ZM464 125h1v1h-1ZM465 134h1v1h-1ZM466 138h1v1h-1ZM468 133h1v1h-1ZM469 137h1v1h-1ZM470 137h1v1h-1ZM472 133h1v1h-1ZM473 138h1v1h-1ZM475 145h1v1h-1ZM476 138h1v1h-1ZM477 142h1v1h-1ZM479 132h1v1h-1ZM480 133h1v1h-1ZM481 135h1v1h-1ZM483 131h1v1h-1ZM484 126h1v1h-1ZM485 127h1v1h-1ZM487 120h1v1h-1ZM488 121h1v1h-1ZM489 112h1v1h-1ZM491 105h1v1h-1ZM492 99h1v1h-1ZM493 103h1v1h-1ZM495 94h1v1h-1ZM496 99h1v1h-1ZM497 93h1v1h-1ZM499 94h1v1h-1ZM500 82h1v1h-1ZM501 91h1v1h-1ZM503 89h1v1h-1ZM504 94h1v1h-1ZM505 98h1v1h-1ZM507 103h1v1h-1ZM508 105h1v1h-1ZM510 105h1v1h-1ZM511 116h1v1h-1ZM512 118h1v1h-1ZM514 119h1v1h-1ZM515 125h1v1h-1ZM516 130h1v1h-1ZM518 129h1v1h-1ZM519 125h1v1h-1ZM520 135h1v1h-1ZM522 132h1v1h-1ZM523 127h1v1h-1ZM524 128h1v1h-1ZM526 131h1v1h-1ZM527 129h1v1h-1ZM528 132h1v1h-1ZM530 138h1v1h-1ZM531 140h1v1h-1ZM532 138h1v1h-1ZM534 133h1v1h-1ZM535 138h1v1h-1ZM536 138h1v1h-1ZM538 135h1v1h-1ZM539 136h1v1h-1ZM541 128h1v1h-1ZM542 128h1v1h-1ZM543 121h1v1h-1ZM545 129h1v1h-1ZM546 119h1v1h-1ZM547 121h1v1h-1ZM549 126h1v1h-1ZM550 118h1v1h-1ZM551 122h1v1h-1ZM553 131h1v1h-1ZM554 127h1v1h-1ZM555 125h1v1h-1ZM557 129h1v1h-1ZM558 126h1v1h-1ZM559 128h1v1h-1ZM561 129h1v1h-1ZM562 130h1v1h-1ZM563 126h1v1h-1ZM565 128h1v1h-1ZM566 128h1v1h-1ZM567 136h1v1h-1ZM569 125h1v1h-1ZM570 123h1v1h-1ZM571 129h1v1h-1ZM573 130h1v1h-1ZM574 123h1v1h-1ZM576 139h1v1h-1ZM577 135h1v1h-1ZM578 133h1v1h-1ZM580 149h1v1h-1ZM581 148h1v1h-1ZM582 149h1v1h-1ZM584 161h1v1h-1ZM585 163h1v1h-1ZM586 166h1v1h-1ZM588 177h1v1h-1ZM589 178h1v1h-1ZM590 180h1v1h-1ZM592 180h1v1h-1ZM593 185h1v1h-1ZM594 188h1v1h-1ZM596 192h1v1h-1ZM597 191h1v1h-1ZM598 187h1v1h-1ZM600 190h1v1h-1ZM601 194h1v1h-1ZM602 194h1v1h-1ZM604 182h1v1h-1ZM605 187h1v1h-1ZM606 189h1v1h-1ZM608 201h1v1h-1ZM609 189h1v1h-1ZM611 190h1v1h-1ZM612 186h1v1h-1ZM613 190h1v1h-1ZM615 192h1v1h-1ZM616 190h1v1h-1ZM617 199h1v1h-1ZM619 188h1v1h-1ZM620 191h1v1h-1ZM621 194h1v1h-1ZM623 187h1v1h-1ZM624 186h1v1h-1ZM625 197h1v1h-1ZM627 194h1v1h-1ZM628 191h1v1h-1ZM629 191h1v1h-1ZM631 193h1v1h-1ZM632 195h1v1h-1ZM633 184h1v1h-1ZM635 188h1v1h-1ZM636 196h1v1h-1ZM637 196h1v1h-1ZM639 186h1v1h-1ZM640 188h1v1h-1ZM642 185h1v1h-1ZM643 189h1v1h-1ZM644 195h1v1h-1Z" fill="#ff0" shape-rendering="crispEdges"/>
<path d="M164.0 188.7 L164.5 188.9 L165.0 189.1 L165.5 189.3 L166.0 189.5 L166.5 189.7 L167.0 189.8 L167.5 190.0 L168.0 190.1 L168.5 190.3 L169.0 190.4 L169.5 190.5 L170.0 190.6 L170.5 190.7 L171.0 190.8 L171.5 190.9 L172.0 191.0 L172.5 191.0 L173.0 191.1 L173.5 191.2 L174.0 191.2 L174.5 191.3 L175.0 191.3 L175.5 191.4 L176.0 191.4 L176.5 191.4 L177.0 191.4 L177.5 191.4 L178.0 191.4 L178.5 191.4 L179.0 191.4 L179.5 191.4 L180.0 191.4 L180.5 191.4 L181.0 191.4 L181.5 191.4 L182.0 191.3 L182.5 191.2 L183.0 191.1 L183.5 191.0 L184.0 190.8 L184.5 190.6 L185.0 190.4 L185.5 190.1 L186.0 189.8 L186.5 189.5 L187.0 189.1 L187.5 188.6 L188.0 188.1 L188.5 187.6 L189.0 187.1 L189.5 186.5 L190.0 185.9 L190.5 185.2 L191.0 184.5 L191.5 183.8 L192.0 183.0 L192.5 182.1 L193.0 181.2 L193.5 180.1 L194.0 179.0 L194.5 177.9 L195.0 176.6 L195.5 175.4 L196.0 174.0 L196.5 172.6 L197.0 171.1 L197.5 169.5 L198.0 168.0 L198.5 166.4 L199.0 164.7 L199.5 163.1 L200.0 161.4 L200.5 159.6 L201.0 157.9 L201.5 156.1 L202.0 154.3 L202.5 152.5 L203.0 150.7 L203.5 148.8 L204.0 146.9 L204.5 144.9 L205.0 142.9 L205.5 141.0 L206.0 139.1 L206.5 137.4 L207.0 135.9 L207.5 134.5 L208.0 133.3 L208.5 132.1 L209.0 131.1 L209.5 130.2 L210.0 129.4 L210.5 128.8 L211.0 128.3 L211.5 128.0 L212.0 127.8 L212.5 127.8 L213.0 127.8 L213.5 128.0 L214.0 128.2 L214.5 128.4 L215.0 128.7 L215.5 128.9 L216.0 129.1 L216.5 129.3 L217.0 129.6 L217.5 130.0 L218.0 130.4 L218.5 130.8 L219.0 131.1 L219.5 131.5 L220.0 131.7 L220.5 131.8 L221.0 131.8 L221.5 131.7 L222.0 131.4 L222.5 131.0 L223.0 130.5 L223.5 129.9 L224.0 129.3 L224.5 128.6 L225.0 127.9 L225.5 127.2 L226.0 126.5 L226.5 125.8 L227.0 125.0 L227.5 124.1 L228.0 123.2 L228.5 122.2 L229.0 121.3 L229.5 120.4 L230.0 119.4 L230.5 118.6 L231.0 117.8 L231.5 117.0 L232.0 116.4 L232.5 115.9 L233.0 115.5 L233.5 115.2 L234.0 114.9 L234.5 114.7 L235.0 114.6 L235.5 114.6 L236.0 114.5 L236.5 114.5 L237.0 114.6 L237.5 114.6 L238.0 114.8 L238.5 115.0 L239.0 115.3 L239.5 115.6 L240.0 115.9 L240.5 116.3 L241.0 116.6 L241.5 116.9 L242.0 117.1 L242.5 117.2 L243.0 117.2 L243.5 117.1 L244.0 116.9 L244.5 116.6 L245.0 116.2 L245.5 115.7 L246.0 115.1 L246.5 114.5 L247.0 113.9 L247.5 113.2 L248.0 112.6 L248.5 111.9 L249.0 111.2 L249.5 110.5 L250.0 109.7 L250.5 109.0 L251.0 108.1 L251.5 107.3 L252.0 106.5 L252.5 105.7 L253.0 104.9 L253.5 104.2 L254.0 103.5 L254.5 102.8 L255.0 102.1 L255.5 101.4 L256.0 100.7 L256.5 100.0 L257.0 99.3 L257.5 98.8 L258.0 98.4 L258.5 98.1 L259.0 98.0 L259.5 98.2 L260.0 98.7 L260.5 99.4 L261.0 100.4 L261.5 101.6 L262.0 102.8 L262.5 104.1 L263.0 105.4 L263.5 106.7 L264.0 108.0 L264.5 109.4 L265.0 110.9 L265.5 112.3 L266.0 113.9 L266.5 115.4 L267.0 117.0 L267.5 118.5 L268.0 120.2 L268.5 121.9 L269.0 123.7 L269.5 125.5 L270.0 127.3 L270.5 128.9 L271.0 130.3 L271.5 131.4 L272.0 132.4 L272.5 133.3 L273.0 134.1 L273.5 134.8 L274.0 135.4 L274.5 135.9 L275.0 136.4 L275.5 136.7 L276.0 137.1 L276.5 137.4 L277.0 137.6 L277.5 137.7 L278.0 137.8 L278.5 137.8 L279.0 137.8 L279.5 137.8 L280.0 137.7 L280.5 137.6 L281.0 137.5 L281.5 137.4 L282.0 137.4 L282.5 137.3 L283.0 137.3 L283.5 137.3 L284.0 137.4 L284.5 137.6 L285.0 137.7 L285.5 137.8 L286.0 137.9 L286.5 137.9 L287.0 137.8 L287.5 137.6 L288.0 137.3 L288.5 136.9 L289.0 136.3 L289.5 135.8 L290.0 135.1 L290.5 134.3 L291.0 133.5 L291.5 132.6 L292.0 131.6 L292.5 130.4 L293.0 129.2 L293.5 127.8 L294.0 126.2 L294.5 124.4 L295.0 122.5 L295.5 120.5 L296.0 118.5 L296.5 116.3 L297.0 114.2 L297.5 111.9 L298.0 109.4 L298.5 106.7 L299.0 104.1 L299.5 101.4 L300.0 99.0 L300.5 96.9 L301.0 95.1 L301.5 93.6 L302.0 92.1 L302.5 90.8 L303.0 89.5 L303.5 88.3 L304.0 87.2 L304.5 86.2 L305.0 85.3 L305.5 84.6 L306.0 84.0 L306.5 83.5 L307.0 83.1 L307.5 83.0 L308.0 83.1 L308.5 83.4 L309.0 83.9 L309.5 84.6 L310.0 85.4 L310.5 86.4 L311.0 87.5 L311.5 88.6 L312.0 89.8 L312.5 91.2 L313.0 92.8 L313.5 94.5 L314.0 96.4 L314.5 98.4 L315.0 100.4 L315.5 102.4 L316.0 104.4 L316.5 106.2 L317.0 107.9 L317.5 109.4 L318.0 111.0 L318.5 112.6 L319.0 114.1 L319.5 115.6 L320.0 117.0 L320.5 118.4 L321.0 119.8 L321.5 121.0 L322.0 122.1 L322.5 123.1 L323.0 124.0 L323.5 124.8 L324.0 125.5 L324.5 126.0 L325.0 126.5 L325.5 126.9 L326.0 127.2 L326.5 127.5 L327.0 127.7 L327.5 127.9 L328.0 128.1 L328.5 128.3 L329.0 128.5 L329.5 128.8 L330.0 129.1 L330.5 129.4 L331.0 129.7 L331.5 130.0 L332.0 130.3 L332.5 130.5 L333.0 130.8 L333.5 131.1 L334.0 131.4 L334.5 131.7 L335.0 132.1 L335.5 132.4 L336.0 132.9 L336.5 133.5 L337.0 134.1 L337.5 134.8 L338.0 135.4 L338.5 136.0 L339.0 136.5 L339.5 137.0 L340.0 137.3 L340.5 137.4 L341.0 137.4 L341.5 137.1 L342.0 136.6 L342.5 135.8 L343.0 134.8 L343.5 133.6 L344.0 132.4 L344.5 131.1 L345.0 129.9 L345.5 128.7 L346.0 127.6 L346.5 126.6 L347.0 125.6 L347.5 124.6 L348.0 123.6 L348.5 122.6 L349.0 121.6 L349.5 120.7 L350.0 119.8 L350.5 119.1 L351.0 118.4 L351.5 117.9 L352.0 117.5 L352.5 117.2 L353.0 117.0 L353.5 116.9 L354.0 116.9 L354.5 117.0 L355.0 117.1 L355.5 117.3 L356.0 117.4 L356.5 117.6 L357.0 117.9 L357.5 118.3 L358.0 118.8 L358.5 119.5 L359.0 120.5 L359.5 121.7 L360.0 123.2 L360.5 124.9 L361.0 126.7 L361.5 128.6 L362.0 130.7 L362.5 132.8 L363.0 134.9 L363.5 137.0 L364.0 139.1 L364.5 141.1 L365.0 143.2 L365.5 145.3 L366.0 147.5 L366.5 149.7 L367.0 151.9 L367.5 154.0 L368.0 156.1 L368.5 158.2 L369.0 160.2 L369.5 162.0 L370.0 163.9 L370.5 165.7 L371.0 167.4 L371.5 169.2 L372.0 170.8 L372.5 172.4 L373.0 173.9 L373.5 175.3 L374.0 176.7 L374.5 177.9 L375.0 179.0 L375.5 180.1 L376.0 181.1 L376.5 182.1 L377.0 182.9 L377.5 183.7 L378.0 184.3 L378.5 184.8 L379.0 185.2 L379.5 185.5 L380.0 185.6 L380.5 185.7 L381.0 185.6 L381.5 185.4 L382.0 185.1 L382.5 184.7 L383.0 184.3 L383.5 183.7 L384.0 183.0 L384.5 182.2 L385.0 181.4 L385.5 180.3 L386.0 179.2 L386.5 178.0 L387.0 176.6 L387.5 175.2 L388.0 173.8 L388.5 172.2 L389.0 170.7 L389.5 169.1 L390.0 167.4 L390.5 165.5 L391.0 163.5 L391.5 161.5 L392.0 159.4 L392.5 157.4 L393.0 155.4 L393.5 153.5 L394.0 151.6 L394.5 150.0 L395.0 148.4 L395.5 146.9 L396.0 145.4 L396.5 143.9 L397.0 142.6 L397.5 141.2 L398.0 139.9 L398.5 138.7 L399.0 137.5 L399.5 136.4 L400.0 135.3 L400.5 134.3 L401.0 133.4 L401.5 132.7 L402.0 132.0 L402.5 131.5 L403.0 131.0 L403.5 130.5 L404.0 130.2 L404.5 129.9 L405.0 129.8 L405.5 129.8 L406.0 129.8 L406.5 129.9 L407.0 130.0 L407.5 130.1 L408.0 130.2 L408.5 130.3 L409.0 130.5 L409.5 130.7 L410.0 130.9 L410.5 131.1 L411.0 131.4 L411.5 131.6 L412.0 131.8 L412.5 131.9 L413.0 131.9 L413.5 131.9 L414.0 131.8 L414.5 131.6 L415.0 131.3 L415.5 131.0 L416.0 130.6 L416.5 130.1 L417.0 129.7 L417.5 129.1 L418.0 128.6 L418.5 128.0 L419.0 127.5 L419.5 126.9 L420.0 126.3 L420.5 125.7 L421.0 125.1 L421.5 124.4 L422.0 123.7 L422.5 123.0 L423.0 122.2 L423.5 121.5 L424.0 120.7 L424.5 120.0 L425.0 119.3 L425.5 118.7 L426.0 117.9 L426.5 117.1 L427.0 116.3 L427.5 115.5 L428.0 114.8 L428.5 114.2 L429.0 113.7 L429.5 113.4 L430.0 113.2 L430.5 113.3 L431.0 113.5 L431.5 113.8 L432.0 114.3 L432.5 114.8 L433.0 115.4 L433.5 116.1 L434.0 116.7 L434.5 117.3 L435.0 117.9 L435.5 118.4 L436.0 118.8 L436.5 119.1 L437.0 119.2 L437.5 119.2 L438.0 119.0 L438.5 118.8 L439.0 118.4 L439.5 118.0 L440.0 117.5 L440.5 116.9 L441.0 116.3 L441.5 115.6 L442.0 114.9 L442.5 114.1 L443.0 113.4 L443.5 112.5 L444.0 111.6 L444.5 110.5 L445.0 109.3 L445.5 108.1 L446.0 106.9 L446.5 105.6 L447.0 104.5 L447.5 103.4 L448.0 102.4 L448.5 101.6 L449.0 100.8 L449.5 100.0 L450.0 99.3 L450.5 98.7 L451.0 98.3 L451.5 98.1 L452.0 98.0 L452.5 98.3 L453.0 98.7 L453.5 99.3 L454.0 100.1 L454.5 101.1 L455.0 102.1 L455.5 103.3 L456.0 104.7 L456.5 106.1 L457.0 107.8 L457.5 109.7 L458.0 111.7 L458.5 113.8 L459.0 115.8 L459.5 117.8 L460.0 119.6 L460.5 121.1 L461.0 122.7 L461.5 124.2 L462.0 125.6 L462.5 127.0 L463.0 128.4 L463.5 129.6 L464.0 130.8 L464.5 131.9 L465.0 132.8 L465.5 133.7 L466.0 134.4 L466.5 135.0 L467.0 135.6 L467.5 136.0 L468.0 136.4 L468.5 136.6 L469.0 136.9 L469.5 137.1 L470.0 137.2 L470.5 137.4 L471.0 137.5 L471.5 137.5 L472.0 137.5 L472.5 137.5 L473.0 137.4 L473.5 137.3 L474.0 137.2 L474.5 137.1 L475.0 136.9 L475.5 136.7 L476.0 136.4 L476.5 136.2 L477.0 135.9 L477.5 135.6 L478.0 135.3 L478.5 134.9 L479.0 134.5 L479.5 134.1 L480.0 133.6 L480.5 133.2 L481.0 132.7 L481.5 132.1 L482.0 131.6 L482.5 131.0 L483.0 130.4 L483.5 129.8 L484.0 129.2 L484.5 128.6 L485.0 127.9 L485.5 127.1 L486.0 126.2 L486.5 125.2 L487.0 124.0 L487.5 122.6 L488.0 121.0 L488.5 119.2 L489.0 117.2 L489.5 115.1 L490.0 112.9 L490.5 110.8 L491.0 108.7 L491.5 106.8 L492.0 105.0 L492.5 103.5 L493.0 102.0 L493.5 100.4 L494.0 98.8 L494.5 97.3 L495.0 95.7 L495.5 94.2 L496.0 92.8 L496.5 91.4 L497.0 90.1 L497.5 89.0 L498.0 88.0 L498.5 87.1 L499.0 86.4 L499.5 86.0 L500.0 85.7 L500.5 85.7 L501.0 86.1 L501.5 86.7 L502.0 87.6 L502.5 88.7 L503.0 89.9 L503.5 91.3 L504.0 92.8 L504.5 94.3 L505.0 95.9 L505.5 97.4 L506.0 99.0 L506.5 100.4 L507.0 101.9 L507.5 103.6 L508.0 105.4 L508.5 107.2 L509.0 109.1 L509.5 111.0 L510.0 112.9 L510.5 114.7 L511.0 116.4 L511.5 117.9 L512.0 119.3 L512.5 120.4 L513.0 121.4 L513.5 122.3 L514.0 123.1 L514.5 123.9 L515.0 124.6 L515.5 125.2 L516.0 125.8 L516.5 126.3 L517.0 126.7 L517.5 127.2 L518.0 127.6 L518.5 128.0 L519.0 128.4 L519.5 128.8 L520.0 129.2 L520.5 129.6 L521.0 129.8 L521.5 130.1 L522.0 130.2 L522.5 130.4 L523.0 130.5 L523.5 130.5 L524.0 130.6 L524.5 130.7 L525.0 130.8 L525.5 131.0 L526.0 131.2 L526.5 131.5 L527.0 131.7 L527.5 132.1 L528.0 132.4 L528.5 132.8 L529.0 133.1 L529.5 133.5 L530.0 133.9 L530.5 134.2 L531.0 134.6 L531.5 134.9 L532.0 135.2 L532.5 135.4 L533.0 135.6 L533.5 135.7 L534.0 135.8 L534.5 135.8 L535.0 135.6 L535.5 135.3 L536.0 134.9 L536.5 134.3 L537.0 133.7 L537.5 133.1 L538.0 132.3 L538.5 131.6 L539.0 130.6 L539.5 129.6 L540.0 128.5 L540.5 127.3 L541.0 126.2 L541.5 125.1 L542.0 124.0 L542.5 123.1 L543.0 122.3 L543.5 121.7 L544.0 121.1 L544.5 120.7 L545.0 120.2 L545.5 119.9 L546.0 119.6 L546.5 119.4 L547.0 119.3 L547.5 119.2 L548.0 119.2 L548.5 119.3 L549.0 119.5 L549.5 119.8 L550.0 120.1 L550.5 120.5 L551.0 121.0 L551.5 121.5 L552.0 122.1 L552.5 122.6 L553.0 123.1 L553.5 123.6 L554.0 124.2 L554.5 124.8 L555.0 125.4 L555.5 126.1 L556.0 126.7 L556.5 127.4 L557.0 128.0 L557.5 128.6 L558.0 129.2 L558.5 129.7 L559.0 130.1 L559.5 130.5 L560.0 130.8 L560.5 131.0 L561.0 131.2 L561.5 131.3 L562.0 131.3 L562.5 131.3 L563.0 131.2 L563.5 131.1 L564.0 130.9 L564.5 130.7 L565.0 130.4 L565.5 130.0 L566.0 129.7 L566.5 129.4 L567.0 129.1 L567.5 128.8 L568.0 128.5 L568.5 128.3 L569.0 128.2 L569.5 128.2 L570.0 128.1 L570.5 128.0 L571.0 128.0 L571.5 128.0 L572.0 128.1 L572.5 128.3 L573.0 128.6 L573.5 129.1 L574.0 129.9 L574.5 130.8 L575.0 131.9 L575.5 133.1 L576.0 134.5 L576.5 136.0 L577.0 137.5 L577.5 139.2 L578.0 140.8 L578.5 142.6 L579.0 144.3 L579.5 146.0 L580.0 147.6 L580.5 149.3 L581.0 151.0 L581.5 152.7 L582.0 154.5 L582.5 156.4 L583.0 158.2 L583.5 160.0 L584.0 161.8 L584.5 163.6 L585.0 165.4 L585.5 167.1 L586.0 168.7 L586.5 170.2 L587.0 171.8 L587.5 173.2 L588.0 174.7 L588.5 176.1 L589.0 177.4 L589.5 178.7 L590.0 179.9 L590.5 181.0 L591.0 182.0 L591.5 182.9 L592.0 183.8 L592.5 184.6 L593.0 185.3 L593.5 186.0 L594.0 186.6 L594.5 187.2 L595.0 187.7 L595.5 188.1 L596.0 188.6 L596.5 188.9 L597.0 189.3 L597.5 189.6 L598.0 189.8 L598.5 190.1 L599.0 190.3 L599.5 190.4 L600.0 190.6 L600.5 190.7 L601.0 190.8 L601.5 190.9 L602.0 191.0 L602.5 191.1 L603.0 191.1 L603.5 191.2 L604.0 191.2 L604.5 191.2 L605.0 191.3 L605.5 191.3 L606.0 191.4 L606.5 191.4 L607.0 191.5 L607.5 191.5 L608.0 191.6 L608.5 191.6 L609.0 191.7 L609.5 191.7 L610.0 191.7 L610.5 191.8 L611.0 191.8 L611.5 191.8 L612.0 191.8 L612.5 191.9 L613.0 191.9 L613.5 191.9 L614.0 191.9 L614.5 191.9 L615.0 191.9 L615.5 192.0 L616.0 192.0 L616.5 192.0 L617.0 192.0 L617.5 192.0 L618.0 192.0 L618.5 192.0 L619.0 192.0 L619.5 192.0 L620.0 192.0 L620.5 192.0 L621.0 192.0 L621.5 192.0 L622.0 192.0 L622.5 192.0 L623.0 192.0 L623.5 192.0 L624.0 192.0 L624.5 192.0 L625.0 192.0 L625.5 192.0 L626.0 191.9 L626.5 191.9 L627.0 191.9 L627.5 191.9 L628.0 191.9 L628.5 191.9 L629.0 191.9 L629.5 191.9 L630.0 191.9 L630.5 191.8 L631.0 191.8 L631.5 191.8 L632.0 191.8 L632.5 191.8 L633.0 191.8 L633.5 191.8 L634.0 191.7 L634.5 191.7 L635.0 191.7 L635.5 191.7 L636.0 191.7 L636.5 191.7 L637.0 191.7 L637.5 191.6 L638.0 191.6 L638.5 191.6 L639.0 191.6 L639.5 191.6 L640.0 191.6 L640.5 191.6 L641.0 191.5 L641.5 191.5 L642.0 191.5 L642.5 191.5 L643.0 191.5 L643.5 191.5 L644.0 191.5 L644.5 191.4 L645.0 191.4" fill="none" stroke="#ff0" stroke-width="1.1" shape-rendering="crispEdges"/>
<path d="M164 340h1v1h-1ZM165 341h1v1h-1ZM166 336h1v1h-1ZM167 345h1v1h-1ZM168 339h1v1h-1ZM169 345h1v1h-1ZM170 335h1v1h-1ZM171 338h1v1h-1ZM172 335h1v1h-1ZM173 341h1v1h-1ZM174 338h1v1h-1ZM175 340h1v1h-1ZM176 342h1v1h-1ZM177 339h1v1h-1ZM178 343h1v1h-1ZM179 340h1v1h-1ZM180 337h1v1h-1ZM181 339h1v1h-1ZM182 341h1v1h-1ZM183 333h1v1h-1ZM184 339h1v1h-1ZM185 340h1v1h-1ZM186 338h1v1h-1ZM186 339h1v1h-1ZM187 338h1v1h-1ZM188 337h1v1h-1ZM189 329h1v1h-1ZM190 333h1v1h-1ZM191 332h1v1h-1ZM192 328h1v1h-1ZM193 323h1v1h-1ZM194 327h1v1h-1ZM195 326h1v1h-1ZM196 314h1v1h-1ZM197 323h1v1h-1ZM198 317h1v1h-1ZM199 311h1v1h-1ZM200 303h1v1h-1ZM201 309h1v1h-1ZM202 310h1v1h-1ZM203 297h1v1h-1ZM204 297h1v1h-1ZM205 293h1v1h-1ZM206 286h1v1h-1ZM207 284h1v1h-1ZM208 281h1v1h-1ZM209 281h1v1h-1ZM210 274h1v1h-1ZM211 272h1v1h-1ZM212 275h1v1h-1ZM212 277h1v1h-1ZM213 273h1v1h-1ZM214 274h1v1h-1ZM215 279h1v1h-1ZM216 278h1v1h-1ZM217 274h1v1h-1ZM218 278h1v1h-1ZM219 280h1v1h-1ZM220 279h1v1h-1ZM221 279h1v1h-1ZM222 279h1v1h-1ZM223 284h1v1h-1ZM224 272h1v1h-1ZM225 275h1v1h-1ZM226 277h1v1h-1ZM227 270h1v1h-1ZM228 270h1v1h-1ZM229 269h1v1h-1ZM230 264h1v1h-1ZM231 259h1v1h-1ZM232 263h1v1h-1ZM233 259h1v1h-1ZM234 256h1v1h-1ZM235 265h1v1h-1ZM236 264h1v1h-1ZM237 260h1v1h-1ZM237 267h1v1h-1ZM238 263h1v1h-1ZM239 259h1v1h-1ZM240 261h1v1h-1ZM241 263h1v1h-1ZM242 270h1v1h-1ZM243 258h1v1h-1ZM244 263h1v1h-1ZM245 261h1v1h-1ZM246 261h1v1h-1ZM247 266h1v1h-1ZM248 264h1v1h-1ZM249 262h1v1h-1ZM250 252h1v1h-1ZM251 258h1v1h-1ZM252 255h1v1h-1ZM253 253h1v1h-1ZM254 249h1v1h-1ZM255 248h1v1h-1ZM256 248h1v1h-1ZM257 251h1v1h-1ZM258 255h1v1h-1ZM259 245h1v1h-1ZM260 245h1v1h-1ZM261 243h1v1h-1ZM262 249h1v1h-1ZM262 253h1v1h-1ZM263 253h1v1h-1ZM264 261h1v1h-1ZM265 262h1v1h-1ZM266 265h1v1h-1ZM267 265h1v1h-1ZM268 262h1v1h-1ZM269 270h1v1h-1ZM270 272h1v1h-1ZM271 277h1v1h-1ZM272 279h1v1h-1ZM273 283h1v1h-1ZM274 284h1v1h-1ZM275 291h1v1h-1ZM276 288h1v1h-1ZM277 289h1v1h-1ZM278 283h1v1h-1ZM279 283h1v1h-1ZM280 282h1v1h-1ZM281 281h1v1h-1ZM282 286h1v1h-1ZM283 282h1v1h-1ZM284 279h1v1h-1ZM285 285h1v1h-1ZM286 282h1v1h-1ZM287 286h1v1h-1ZM287 290h1v1h-1ZM288 284h1v1h-1ZM289 286h1v1h-1ZM290 282h1v1h-1ZM291 282h1v1h-1ZM292 277h1v1h-1ZM293 282h1v1h-1ZM294 267h1v1h-1ZM295 265h1v1h-1ZM296 266h1v1h-1ZM297 264h1v1h-1ZM298 256h1v1h-1ZM299 249h1v1h-1ZM300 245h1v1h-1ZM301 241h1v1h-1ZM302 245h1v1h-1ZM303 240h1v1h-1ZM304 231h1v1h-1ZM305 232h1v1h-1ZM306 236h1v1h-1ZM307 233h1v1h-1ZM308 235h1v1h-1ZM309 234h1v1h-1ZM310 229h1v1h-1ZM311 234h1v1h-1ZM312 233h1v1h-1ZM313 238h1v1h-1ZM313 246h1v1h-1ZM314 247h1v1h-1ZM315 243h1v1h-1ZM316 255h1v1h-1ZM317 259h1v1h-1ZM318 256h1v1h-1ZM319 262h1v1h-1ZM320 265h1v1h-1ZM321 263h1v1h-1ZM322 275h1v1h-1ZM323 270h1v1h-1ZM324 276h1v1h-1ZM325 278h1v1h-1ZM326 277h1v1h-1ZM327 272h1v1h-1ZM328 276h1v1h-1ZM329 282h1v1h-1ZM330 280h1v1h-1ZM331 273h1v1h-1ZM332 275h1v1h-1ZM333 282h1v1h-1ZM334 271h1v1h-1ZM335 280h1v1h-1ZM336 284h1v1h-1ZM337 282h1v1h-1ZM338 280h1v1h-1ZM338 279h1v1h-1ZM339 281h1v1h-1ZM340 286h1v1h-1ZM341 287h1v1h-1ZM342 288h1v1h-1ZM343 282h1v1h-1ZM344 281h1v1h-1ZM345 276h1v1h-1ZM346 279h1v1h-1ZM347 274h1v1h-1ZM348 274h1v1h-1ZM349 273h1v1h-1ZM350 271h1v1h-1ZM351 269h1v1h-1ZM352 269h1v1h-1ZM353 263h1v1h-1ZM354 264h1v1h-1ZM355 269h1v1h-1ZM356 263h1v1h-1ZM357 264h1v1h-1ZM358 262h1v1h-1ZM359 268h1v1h-1ZM360 270h1v1h-1ZM361 275h1v1h-1ZM362 276h1v1h-1ZM363 279h1v1h-1ZM363 284h1v1h-1ZM364 289h1v1h-1ZM365 291h1v1h-1ZM366 297h1v1h-1ZM367 300h1v1h-1ZM368 308h1v1h-1ZM369 308h1v1h-1ZM370 316h1v1h-1ZM371 318h1v1h-1ZM372 319h1v1h-1ZM373 316h1v1h-1ZM374 322h1v1h-1ZM375 327h1v1h-1ZM376 330h1v1h-1ZM377 328h1v1h-1ZM378 328h1v1h-1ZM379 329h1v1h-1ZM380 334h1v1h-1ZM381 333h1v1h-1ZM382 334h1v1h-1ZM383 333h1v1h-1ZM384 334h1v1h-1ZM385 331h1v1h-1ZM386 334h1v1h-1ZM387 329h1v1h-1ZM388 322h1v1h-1ZM389 323h1v1h-1ZM389 315h1v1h-1ZM390 317h1v1h-1ZM391 311h1v1h-1ZM392 305h1v1h-1ZM393 305h1v1h-1ZM394 301h1v1h-1ZM395 288h1v1h-1ZM396 295h1v1h-1ZM397 292h1v1h-1ZM398 289h1v1h-1ZM399 285h1v1h-1ZM400 283h1v1h-1ZM401 278h1v1h-1ZM402 277h1v1h-1ZM403 280h1v1h-1ZM404 279h1v1h-1ZM405 282h1v1h-1ZM406 282h1v1h-1ZM407 280h1v1h-1ZM408 276h1v1h-1ZM409 278h1v1h-1ZM410 276h1v1h-1ZM411 276h1v1h-1ZM412 280h1v1h-1ZM413 273h1v1h-1ZM414 281h1v1h-1ZM414 281h1v1h-1ZM415 280h1v1h-1ZM416 274h1v1h-1ZM417 277h1v1h-1ZM418 278h1v1h-1ZM419 273h1v1h-1ZM420 270h1v1h-1ZM421 273h1v1h-1ZM422 272h1v1h-1ZM423 266h1v1h-1ZM424 265h1v1h-1ZM425 264h1v1h-1ZM426 268h1v1h-1ZM427 263h1v1h-1ZM428 261h1v1h-1ZM429 267h1v1h-1ZM430 257h1v1h-1ZM431 261h1v1h-1ZM432 263h1v1h-1ZM433 256h1v1h-1ZM434 263h1v1h-1ZM435 267h1v1h-1ZM436 266h1v1h-1ZM437 265h1v1h-1ZM438 264h1v1h-1ZM439 266h1v1h-1ZM439 268h1v1h-1ZM440 267h1v1h-1ZM441 266h1v1h-1ZM442 265h1v1h-1ZM443 260h1v1h-1ZM444 260h1v1h-1ZM445 256h1v1h-1ZM446 256h1v1h-1ZM447 254h1v1h-1ZM448 250h1v1h-1ZM449 249h1v1h-1ZM450 243h1v1h-1ZM451 248h1v1h-1ZM452 245h1v1h-1ZM453 246h1v1h-1ZM454 251h1v1h-1ZM455 247h1v1h-1ZM456 251h1v1h-1ZM457 261h1v1h-1ZM458 256h1v1h-1ZM459 259h1v1h-1ZM460 268h1v1h-1ZM461 264h1v1h-1ZM462 272h1v1h-1ZM463 278h1v1h-1ZM464 276h1v1h-1ZM465 281h1v1h-1ZM465 285h1v1h-1ZM466 289h1v1h-1ZM467 283h1v1h-1ZM468 286h1v1h-1ZM469 283h1v1h-1ZM470 284h1v1h-1ZM471 287h1v1h-1ZM472 287h1v1h-1ZM473 280h1v1h-1ZM474 280h1v1h-1ZM475 282h1v1h-1ZM476 285h1v1h-1ZM477 286h1v1h-1ZM478 284h1v1h-1ZM479 277h1v1h-1ZM480 280h1v1h-1ZM481 281h1v1h-1ZM482 283h1v1h-1ZM483 278h1v1h-1ZM484 280h1v1h-1ZM485 276h1v1h-1ZM486 272h1v1h-1ZM487 269h1v1h-1ZM488 269h1v1h-1ZM489 267h1v1h-1ZM490 262h1v1h-1ZM490 253h1v1h-1ZM491 253h1v1h-1ZM492 255h1v1h-1ZM493 244h1v1h-1ZM494 244h1v1h-1ZM495 232h1v1h-1ZM496 241h1v1h-1ZM497 237h1v1h-1ZM498 236h1v1h-1ZM499 232h1v1h-1ZM500 235h1v1h-1ZM501 238h1v1h-1ZM502 241h1v1h-1ZM503 238h1v1h-1ZM504 241h1v1h-1ZM505 245h1v1h-1ZM506 240h1v1h-1ZM507 246h1v1h-1ZM508 249h1v1h-1ZM509 257h1v1h-1ZM510 258h1v1h-1ZM511 263h1v1h-1ZM512 266h1v1h-1ZM513 266h1v1h-1ZM514 268h1v1h-1ZM515 271h1v1h-1ZM515 272h1v1h-1ZM516 278h1v1h-1ZM517 277h1v1h-1ZM518 274h1v1h-1ZM519 277h1v1h-1ZM520 279h1v1h-1ZM521 276h1v1h-1ZM522 281h1v1h-1ZM523 280h1v1h-1ZM524 276h1v1h-1ZM525 280h1v1h-1ZM526 275h1v1h-1ZM527 278h1v1h-1ZM528 278h1v1h-1ZM529 277h1v1h-1ZM530 288h1v1h-1ZM531 282h1v1h-1ZM532 287h1v1h-1ZM533 285h1v1h-1ZM534 284h1v1h-1ZM535 280h1v1h-1ZM536 283h1v1h-1ZM537 277h1v1h-1ZM538 282h1v1h-1ZM539 279h1v1h-1ZM540 277h1v1h-1ZM541 272h1v1h-1ZM541 273h1v1h-1ZM542 273h1v1h-1ZM543 270h1v1h-1ZM544 272h1v1h-1ZM545 264h1v1h-1ZM546 265h1v1h-1ZM547 265h1v1h-1ZM548 266h1v1h-1ZM549 269h1v1h-1ZM550 269h1v1h-1ZM551 266h1v1h-1ZM552 272h1v1h-1ZM553 273h1v1h-1ZM554 267h1v1h-1ZM555 268h1v1h-1ZM556 273h1v1h-1ZM557 274h1v1h-1ZM558 276h1v1h-1ZM559 273h1v1h-1ZM560 280h1v1h-1ZM561 278h1v1h-1ZM562 277h1v1h-1ZM563 275h1v1h-1ZM564 279h1v1h-1ZM565 277h1v1h-1ZM566 279h1v1h-1ZM566 279h1v1h-1ZM567 278h1v1h-1ZM568 276h1v1h-1ZM569 273h1v1h-1ZM570 278h1v1h-1ZM571 277h1v1h-1ZM572 277h1v1h-1ZM573 275h1v1h-1ZM574 276h1v1h-1ZM575 283h1v1h-1ZM576 281h1v1h-1ZM577 288h1v1h-1ZM578 286h1v1h-1ZM579 295h1v1h-1ZM580 298h1v1h-1ZM581 300h1v1h-1ZM582 302h1v1h-1ZM583 308h1v1h-1ZM584 308h1v1h-1ZM585 312h1v1h-1ZM586 315h1v1h-1ZM587 318h1v1h-1ZM588 319h1v1h-1ZM589 326h1v1h-1ZM590 327h1v1h-1ZM591 329h1v1h-1ZM591 337h1v1h-1ZM592 331h1v1h-1ZM593 336h1v1h-1ZM594 337h1v1h-1ZM595 337h1v1h-1ZM596 336h1v1h-1ZM597 336h1v1h-1ZM598 336h1v1h-1ZM599 340h1v1h-1ZM600 337h1v1h-1ZM601 338h1v1h-1ZM602 340h1v1h-1ZM603 339h1v1h-1ZM604 337h1v1h-1ZM605 338h1v1h-1ZM606 337h1v1h-1ZM607 339h1v1h-1ZM608 336h1v1h-1ZM609 333h1v1h-1ZM610 338h1v1h-1ZM611 344h1v1h-1ZM612 335h1v1h-1ZM613 342h1v1h-1ZM614 344h1v1h-1ZM615 347h1v1h-1ZM616 339h1v1h-1ZM617 337h1v1h-1ZM617 337h1v1h-1ZM618 341h1v1h-1ZM619 336h1v1h-1ZM620 340h1v1h-1ZM621 342h1v1h-1ZM622 340h1v1h-1ZM623 339h1v1h-1ZM624 340h1v1h-1ZM625 339h1v1h-1ZM626 346h1v1h-1ZM627 335h1v1h-1ZM628 342h1v1h-1ZM629 338h1v1h-1ZM630 342h1v1h-1ZM631 339h1v1h-1ZM632 340h1v1h-1ZM633 344h1v1h-1ZM634 339h1v1h-1ZM635 338h1v1h-1ZM636 343h1v1h-1ZM637 346h1v1h-1ZM638 342h1v1h-1ZM639 342h1v1h-1ZM640 339h1v1h-1ZM641 340h1v1h-1ZM642 335h1v1h-1ZM642 338h1v1h-1ZM643 340h1v1h-1ZM644 339h1v1h-1Z" fill="#ff0" shape-rendering="crispEdges"/>
<path d="M164.0 339.4 L164.5 339.2 L165.0 338.9 L165.5 338.7 L166.0 338.4 L166.5 338.1 L167.0 337.8 L167.5 337.5 L168.0 337.2 L168.5 336.9 L169.0 336.6 L169.5 336.3 L170.0 336.0 L170.5 335.7 L171.0 335.4 L171.5 335.1 L172.0 334.8 L172.5 334.5 L173.0 334.2 L173.5 334.0 L174.0 333.7 L174.5 333.5 L175.0 333.3 L175.5 333.1 L176.0 333.0 L176.5 332.9 L177.0 332.7 L177.5 332.7 L178.0 332.6 L178.5 332.6 L179.0 332.6 L179.5 332.6 L180.0 332.6 L180.5 332.7 L181.0 332.8 L181.5 332.9 L182.0 333.1 L182.5 333.3 L183.0 333.5 L183.5 333.7 L184.0 333.9 L184.5 334.2 L185.0 334.4 L185.5 334.7 L186.0 335.0 L186.5 335.3 L187.0 335.6 L187.5 335.9 L188.0 336.2 L188.5 336.5 L189.0 336.8 L189.5 337.1 L190.0 337.4 L190.5 337.7 L191.0 338.0 L191.5 338.3 L192.0 338.6 L192.5 338.8 L193.0 339.1 L193.5 339.3 L194.0 339.6 L194.5 339.8 L195.0 340.0 L195.5 340.2 L196.0 340.4 L196.5 340.6 L197.0 340.7 L197.5 340.9 L198.0 341.0 L198.5 341.2 L199.0 341.3 L199.5 341.4 L200.0 341.5 L200.5 341.6 L201.0 341.7 L201.5 341.7 L202.0 341.8 L202.5 341.9 L203.0 341.9 L203.5 342.0 L204.0 342.0 L204.5 342.0 L205.0 342.1 L205.5 342.1 L206.0 342.1 L206.5 342.2 L207.0 342.2 L207.5 342.2 L208.0 342.2 L208.5 342.2 L209.0 342.2 L209.5 342.2 L210.0 342.3 L210.5 342.3 L211.0 342.3 L211.5 342.3 L212.0 342.3 L212.5 342.3 L213.0 342.3 L213.5 342.3 L214.0 342.3 L214.5 342.3 L215.0 342.3 L215.5 342.3 L216.0 342.3 L216.5 342.3 L217.0 342.3 L217.5 342.3 L218.0 342.3 L218.5 342.3 L219.0 342.3 L219.5 342.3 L220.0 342.3 L220.5 342.3 L221.0 342.3 L221.5 342.3" fill="none" stroke="#fff" stroke-width="1" shape-rendering="crispEdges"/>
<rect x="177.3" y="331.1" width="3" height="3" fill="#fff"/>
<path d="M179.0 342.3 L179.5 342.3 L180.0 342.3 L180.5 342.3 L181.0 342.3 L181.5 342.3 L182.0 342.3 L182.5 342.3 L183.0 342.3 L183.5 342.3 L184.0 342.3 L184.5 342.2 L185.0 342.2 L185.5 342.2 L186.0 342.2 L186.5 342.2 L187.0 342.1 L187.5 342.1 L188.0 342.0 L188.5 342.0 L189.0 341.9 L189.5 341.8 L190.0 341.7 L190.5 341.5 L191.0 341.4 L191.5 341.2 L192.0 341.0 L192.5 340.7 L193.0 340.4 L193.5 340.1 L194.0 339.7 L194.5 339.2 L195.0 338.7 L195.5 338.1 L196.0 337.4 L196.5 336.6 L197.0 335.8 L197.5 334.8 L198.0 333.8 L198.5 332.6 L199.0 331.3 L199.5 329.9 L200.0 328.4 L200.5 326.7 L201.0 324.9 L201.5 323.0 L202.0 321.0 L202.5 318.9 L203.0 316.6 L203.5 314.3 L204.0 311.8 L204.5 309.3 L205.0 306.7 L205.5 304.1 L206.0 301.4 L206.5 298.8 L207.0 296.1 L207.5 293.5 L208.0 291.0 L208.5 288.5 L209.0 286.2 L209.5 284.0 L210.0 282.0 L210.5 280.1 L211.0 278.5 L211.5 277.1 L212.0 275.9 L212.5 275.0 L213.0 274.3 L213.5 274.0 L214.0 273.9 L214.5 274.0 L215.0 274.5 L215.5 275.3 L216.0 276.3 L216.5 277.5 L217.0 279.0 L217.5 280.7 L218.0 282.6 L218.5 284.7 L219.0 286.9 L219.5 289.3 L220.0 291.8 L220.5 294.4 L221.0 297.0 L221.5 299.6 L222.0 302.3 L222.5 304.9 L223.0 307.5 L223.5 310.1 L224.0 312.6 L224.5 315.0 L225.0 317.3 L225.5 319.6 L226.0 321.7 L226.5 323.7 L227.0 325.5 L227.5 327.3 L228.0 328.9 L228.5 330.4 L229.0 331.7 L229.5 333.0 L230.0 334.1 L230.5 335.2 L231.0 336.1 L231.5 336.9 L232.0 337.6 L232.5 338.3 L233.0 338.9 L233.5 339.4 L234.0 339.8 L234.5 340.2 L235.0 340.5 L235.5 340.8 L236.0 341.1 L236.5 341.3 L237.0 341.4 L237.5 341.6 L238.0 341.7 L238.5 341.8 L239.0 341.9 L239.5 342.0 L240.0 342.0 L240.5 342.1 L241.0 342.1 L241.5 342.2 L242.0 342.2 L242.5 342.2 L243.0 342.2 L243.5 342.2 L244.0 342.3 L244.5 342.3 L245.0 342.3 L245.5 342.3 L246.0 342.3 L246.5 342.3 L247.0 342.3 L247.5 342.3 L248.0 342.3 L248.5 342.3 L249.0 342.3" fill="none" stroke="#ffff00" stroke-width="1" shape-rendering="crispEdges"/>
<rect x="212.4" y="272.4" width="3" height="3" fill="#ffff00"/>
<path d="M197.0 342.3 L197.5 342.3 L198.0 342.3 L198.5 342.3 L199.0 342.3 L199.5 342.3 L200.0 342.3 L200.5 342.3 L201.0 342.3 L201.5 342.3 L202.0 342.3 L202.5 342.2 L203.0 342.2 L203.5 342.2 L204.0 342.2 L204.5 342.2 L205.0 342.1 L205.5 342.1 L206.0 342.0 L206.5 342.0 L207.0 341.9 L207.5 341.8 L208.0 341.8 L208.5 341.6 L209.0 341.5 L209.5 341.4 L210.0 341.2 L210.5 341.0 L211.0 340.7 L211.5 340.5 L212.0 340.2 L212.5 339.8 L213.0 339.4 L213.5 338.9 L214.0 338.4 L214.5 337.8 L215.0 337.1 L215.5 336.4 L216.0 335.5 L216.5 334.6 L217.0 333.5 L217.5 332.4 L218.0 331.1 L218.5 329.8 L219.0 328.3 L219.5 326.7 L220.0 324.9 L220.5 323.1 L221.0 321.1 L221.5 319.0 L222.0 316.7 L222.5 314.4 L223.0 311.9 L223.5 309.3 L224.0 306.6 L224.5 303.8 L225.0 300.9 L225.5 298.0 L226.0 295.0 L226.5 292.0 L227.0 289.0 L227.5 286.0 L228.0 283.1 L228.5 280.2 L229.0 277.3 L229.5 274.6 L230.0 272.0 L230.5 269.5 L231.0 267.2 L231.5 265.1 L232.0 263.2 L232.5 261.5 L233.0 260.1 L233.5 258.9 L234.0 258.0 L234.5 257.4 L235.0 257.1 L235.5 257.0 L236.0 257.2 L236.5 257.7 L237.0 258.5 L237.5 259.6 L238.0 260.9 L238.5 262.5 L239.0 264.3 L239.5 266.4 L240.0 268.6 L240.5 271.0 L241.0 273.6 L241.5 276.2 L242.0 279.0 L242.5 281.9 L243.0 284.9 L243.5 287.9 L244.0 290.9 L244.5 293.9 L245.0 296.9 L245.5 299.8 L246.0 302.7 L246.5 305.5 L247.0 308.2 L247.5 310.9 L248.0 313.4 L248.5 315.8 L249.0 318.1 L249.5 320.3 L250.0 322.3 L250.5 324.2 L251.0 326.0 L251.5 327.7 L252.0 329.2 L252.5 330.6 L253.0 331.9 L253.5 333.1 L254.0 334.2 L254.5 335.2 L255.0 336.0 L255.5 336.8 L256.0 337.5 L256.5 338.2 L257.0 338.7 L257.5 339.2 L258.0 339.6 L258.5 340.0 L259.0 340.4 L259.5 340.6 L260.0 340.9 L260.5 341.1 L261.0 341.3 L261.5 341.5 L262.0 341.6 L262.5 341.7 L263.0 341.8 L263.5 341.9 L264.0 342.0 L264.5 342.0 L265.0 342.1 L265.5 342.1 L266.0 342.2 L266.5 342.2 L267.0 342.2 L267.5 342.2 L268.0 342.2 L268.5 342.2 L269.0 342.3 L269.5 342.3 L270.0 342.3 L270.5 342.3 L271.0 342.3 L271.5 342.3 L272.0 342.3 L272.5 342.3 L273.0 342.3 L273.5 342.3 L274.0 342.3" fill="none" stroke="#00ff00" stroke-width="1" shape-rendering="crispEdges"/>
<rect x="233.8" y="255.5" width="3" height="3" fill="#00ff00"/>
<path d="M212.5 342.3 L213.0 342.3 L213.5 342.3 L214.0 342.3 L214.5 342.3 L215.0 342.3 L215.5 342.3 L216.0 342.3 L216.5 342.3 L217.0 342.3 L217.5 342.3 L218.0 342.3 L218.5 342.3 L219.0 342.2 L219.5 342.2 L220.0 342.2 L220.5 342.2 L221.0 342.2 L221.5 342.1 L222.0 342.1 L222.5 342.1 L223.0 342.0 L223.5 342.0 L224.0 341.9 L224.5 341.9 L225.0 341.8 L225.5 341.7 L226.0 341.6 L226.5 341.5 L227.0 341.4 L227.5 341.2 L228.0 341.1 L228.5 340.9 L229.0 340.7 L229.5 340.4 L230.0 340.1 L230.5 339.8 L231.0 339.5 L231.5 339.1 L232.0 338.6 L232.5 338.1 L233.0 337.6 L233.5 337.0 L234.0 336.3 L234.5 335.6 L235.0 334.8 L235.5 333.9 L236.0 332.9 L236.5 331.9 L237.0 330.7 L237.5 329.5 L238.0 328.2 L238.5 326.7 L239.0 325.2 L239.5 323.6 L240.0 321.8 L240.5 319.9 L241.0 318.0 L241.5 315.9 L242.0 313.7 L242.5 311.4 L243.0 309.0 L243.5 306.4 L244.0 303.8 L244.5 301.1 L245.0 298.3 L245.5 295.5 L246.0 292.5 L246.5 289.6 L247.0 286.5 L247.5 283.5 L248.0 280.4 L248.5 277.3 L249.0 274.2 L249.5 271.2 L250.0 268.2 L250.5 265.2 L251.0 262.3 L251.5 259.6 L252.0 256.9 L252.5 254.3 L253.0 251.9 L253.5 249.7 L254.0 247.6 L254.5 245.7 L255.0 244.0 L255.5 242.5 L256.0 241.2 L256.5 240.2 L257.0 239.4 L257.5 238.8 L258.0 238.5 L258.5 238.5 L259.0 238.7 L259.5 239.1 L260.0 239.8 L260.5 240.7 L261.0 241.8 L261.5 243.2 L262.0 244.8 L262.5 246.6 L263.0 248.6 L263.5 250.8 L264.0 253.1 L264.5 255.6 L265.0 258.2 L265.5 260.9 L266.0 263.8 L266.5 266.7 L267.0 269.7 L267.5 272.7 L268.0 275.8 L268.5 278.9 L269.0 282.0 L269.5 285.0 L270.0 288.1 L270.5 291.1 L271.0 294.0 L271.5 296.9 L272.0 299.8 L272.5 302.5 L273.0 305.2 L273.5 307.7 L274.0 310.2 L274.5 312.5 L275.0 314.8 L275.5 316.9 L276.0 319.0 L276.5 320.9 L277.0 322.7 L277.5 324.4 L278.0 326.0 L278.5 327.5 L279.0 328.9 L279.5 330.1 L280.0 331.3 L280.5 332.4 L281.0 333.4 L281.5 334.4 L282.0 335.2 L282.5 336.0 L283.0 336.7 L283.5 337.3 L284.0 337.9 L284.5 338.4 L285.0 338.9 L285.5 339.3 L286.0 339.6 L286.5 340.0 L287.0 340.3 L287.5 340.5 L288.0 340.8 L288.5 341.0 L289.0 341.2 L289.5 341.3 L290.0 341.5 L290.5 341.6 L291.0 341.7 L291.5 341.8 L292.0 341.8 L292.5 341.9 L293.0 342.0 L293.5 342.0 L294.0 342.1 L294.5 342.1 L295.0 342.1 L295.5 342.2 L296.0 342.2 L296.5 342.2 L297.0 342.2 L297.5 342.2 L298.0 342.2 L298.5 342.3 L299.0 342.3 L299.5 342.3 L300.0 342.3 L300.5 342.3 L301.0 342.3 L301.5 342.3 L302.0 342.3 L302.5 342.3 L303.0 342.3 L303.5 342.3 L304.0 342.3" fill="none" stroke="#00ffff" stroke-width="1" shape-rendering="crispEdges"/>
<rect x="256.9" y="237.0" width="3" height="3" fill="#00ffff"/>
<path d="M260.0 342.3 L260.5 342.3 L261.0 342.3 L261.5 342.3 L262.0 342.3 L262.5 342.3 L263.0 342.3 L263.5 342.3 L264.0 342.3 L264.5 342.3 L265.0 342.3 L265.5 342.3 L266.0 342.2 L266.5 342.2 L267.0 342.2 L267.5 342.2 L268.0 342.2 L268.5 342.2 L269.0 342.1 L269.5 342.1 L270.0 342.1 L270.5 342.0 L271.0 342.0 L271.5 341.9 L272.0 341.9 L272.5 341.8 L273.0 341.7 L273.5 341.6 L274.0 341.5 L274.5 341.4 L275.0 341.2 L275.5 341.1 L276.0 340.9 L276.5 340.7 L277.0 340.4 L277.5 340.1 L278.0 339.8 L278.5 339.5 L279.0 339.1 L279.5 338.7 L280.0 338.2 L280.5 337.7 L281.0 337.1 L281.5 336.5 L282.0 335.7 L282.5 335.0 L283.0 334.1 L283.5 333.2 L284.0 332.2 L284.5 331.0 L285.0 329.8 L285.5 328.5 L286.0 327.1 L286.5 325.6 L287.0 324.0 L287.5 322.3 L288.0 320.4 L288.5 318.5 L289.0 316.4 L289.5 314.2 L290.0 311.9 L290.5 309.4 L291.0 306.9 L291.5 304.2 L292.0 301.4 L292.5 298.5 L293.0 295.5 L293.5 292.5 L294.0 289.3 L294.5 286.1 L295.0 282.8 L295.5 279.4 L296.0 276.0 L296.5 272.6 L297.0 269.1 L297.5 265.7 L298.0 262.3 L298.5 258.9 L299.0 255.5 L299.5 252.3 L300.0 249.1 L300.5 246.0 L301.0 243.0 L301.5 240.2 L302.0 237.5 L302.5 235.0 L303.0 232.6 L303.5 230.5 L304.0 228.6 L304.5 226.9 L305.0 225.4 L305.5 224.2 L306.0 223.3 L306.5 222.6 L307.0 222.1 L307.5 221.9 L308.0 222.0 L308.5 222.4 L309.0 223.0 L309.5 223.9 L310.0 225.0 L310.5 226.4 L311.0 228.1 L311.5 229.9 L312.0 232.0 L312.5 234.3 L313.0 236.7 L313.5 239.3 L314.0 242.1 L314.5 245.1 L315.0 248.1 L315.5 251.3 L316.0 254.5 L316.5 257.9 L317.0 261.2 L317.5 264.7 L318.0 268.1 L318.5 271.5 L319.0 275.0 L319.5 278.4 L320.0 281.7 L320.5 285.1 L321.0 288.3 L321.5 291.5 L322.0 294.6 L322.5 297.6 L323.0 300.6 L323.5 303.4 L324.0 306.1 L324.5 308.7 L325.0 311.1 L325.5 313.5 L326.0 315.7 L326.5 317.8 L327.0 319.8 L327.5 321.7 L328.0 323.5 L328.5 325.1 L329.0 326.7 L329.5 328.1 L330.0 329.5 L330.5 330.7 L331.0 331.8 L331.5 332.9 L332.0 333.8 L332.5 334.7 L333.0 335.5 L333.5 336.3 L334.0 336.9 L334.5 337.5 L335.0 338.1 L335.5 338.6 L336.0 339.0 L336.5 339.4 L337.0 339.7 L337.5 340.1 L338.0 340.3 L338.5 340.6 L339.0 340.8 L339.5 341.0 L340.0 341.2 L340.5 341.3 L341.0 341.5 L341.5 341.6 L342.0 341.7 L342.5 341.8 L343.0 341.8 L343.5 341.9 L344.0 342.0 L344.5 342.0 L345.0 342.1 L345.5 342.1 L346.0 342.1 L346.5 342.2 L347.0 342.2 L347.5 342.2 L348.0 342.2 L348.5 342.2 L349.0 342.2 L349.5 342.3 L350.0 342.3 L350.5 342.3 L351.0 342.3 L351.5 342.3 L352.0 342.3 L352.5 342.3 L353.0 342.3 L353.5 342.3 L354.0 342.3 L354.5 342.3 L355.0 342.3" fill="none" stroke="#ff0000" stroke-width="1" shape-rendering="crispEdges"/>
<rect x="306.1" y="220.4" width="3" height="3" fill="#ff0000"/>
<path d="M311.5 342.3 L312.0 342.3 L312.5 342.3 L313.0 342.3 L313.5 342.3 L314.0 342.3 L314.5 342.3 L315.0 342.3 L315.5 342.3 L316.0 342.3 L316.5 342.3 L317.0 342.3 L317.5 342.3 L318.0 342.2 L318.5 342.2 L319.0 342.2 L319.5 342.2 L320.0 342.2 L320.5 342.2 L321.0 342.1 L321.5 342.1 L322.0 342.1 L322.5 342.0 L323.0 342.0 L323.5 341.9 L324.0 341.8 L324.5 341.7 L325.0 341.6 L325.5 341.5 L326.0 341.4 L326.5 341.2 L327.0 341.1 L327.5 340.9 L328.0 340.7 L328.5 340.4 L329.0 340.1 L329.5 339.8 L330.0 339.4 L330.5 339.0 L331.0 338.6 L331.5 338.1 L332.0 337.5 L332.5 336.9 L333.0 336.2 L333.5 335.5 L334.0 334.7 L334.5 333.8 L335.0 332.8 L335.5 331.8 L336.0 330.7 L336.5 329.4 L337.0 328.1 L337.5 326.7 L338.0 325.2 L338.5 323.6 L339.0 322.0 L339.5 320.2 L340.0 318.3 L340.5 316.3 L341.0 314.3 L341.5 312.2 L342.0 310.0 L342.5 307.7 L343.0 305.4 L343.5 303.0 L344.0 300.6 L344.5 298.1 L345.0 295.6 L345.5 293.1 L346.0 290.7 L346.5 288.2 L347.0 285.8 L347.5 283.4 L348.0 281.1 L348.5 278.8 L349.0 276.7 L349.5 274.6 L350.0 272.7 L350.5 270.9 L351.0 269.3 L351.5 267.8 L352.0 266.5 L352.5 265.4 L353.0 264.5 L353.5 263.7 L354.0 263.2 L354.5 262.9 L355.0 262.8 L355.5 262.9 L356.0 263.2 L356.5 263.7 L357.0 264.4 L357.5 265.3 L358.0 266.4 L358.5 267.7 L359.0 269.2 L359.5 270.8 L360.0 272.6 L360.5 274.5 L361.0 276.5 L361.5 278.7 L362.0 280.9 L362.5 283.2 L363.0 285.6 L363.5 288.0 L364.0 290.5 L364.5 293.0 L365.0 295.5 L365.5 298.0 L366.0 300.4 L366.5 302.8 L367.0 305.2 L367.5 307.6 L368.0 309.8 L368.5 312.0 L369.0 314.2 L369.5 316.2 L370.0 318.2 L370.5 320.1 L371.0 321.8 L371.5 323.5 L372.0 325.1 L372.5 326.6 L373.0 328.0 L373.5 329.4 L374.0 330.6 L374.5 331.7 L375.0 332.8 L375.5 333.7 L376.0 334.6 L376.5 335.5 L377.0 336.2 L377.5 336.9 L378.0 337.5 L378.5 338.1 L379.0 338.6 L379.5 339.0 L380.0 339.4 L380.5 339.8 L381.0 340.1 L381.5 340.4 L382.0 340.6 L382.5 340.9 L383.0 341.1 L383.5 341.2 L384.0 341.4 L384.5 341.5 L385.0 341.6 L385.5 341.7 L386.0 341.8 L386.5 341.9 L387.0 342.0 L387.5 342.0 L388.0 342.1 L388.5 342.1 L389.0 342.1 L389.5 342.2 L390.0 342.2 L390.5 342.2 L391.0 342.2 L391.5 342.2 L392.0 342.2 L392.5 342.3 L393.0 342.3 L393.5 342.3 L394.0 342.3 L394.5 342.3 L395.0 342.3 L395.5 342.3 L396.0 342.3 L396.5 342.3 L397.0 342.3 L397.5 342.3 L398.0 342.3 L398.5 342.3" fill="none" stroke="#ff00ff" stroke-width="1" shape-rendering="crispEdges"/>
<rect x="353.5" y="261.3" width="3" height="3" fill="#ff00ff"/>
<path d="M362.5 342.3 L363.0 342.3 L363.5 342.3 L364.0 342.3 L364.5 342.3 L365.0 342.3 L365.5 342.3 L366.0 342.3 L366.5 342.3 L367.0 342.3 L367.5 342.3 L368.0 342.3 L368.5 342.3 L369.0 342.3 L369.5 342.2 L370.0 342.2 L370.5 342.2 L371.0 342.2 L371.5 342.2 L372.0 342.2 L372.5 342.1 L373.0 342.1 L373.5 342.1 L374.0 342.0 L374.5 341.9 L375.0 341.9 L375.5 341.8 L376.0 341.7 L376.5 341.6 L377.0 341.5 L377.5 341.4 L378.0 341.2 L378.5 341.1 L379.0 340.9 L379.5 340.6 L380.0 340.4 L380.5 340.1 L381.0 339.8 L381.5 339.4 L382.0 339.0 L382.5 338.6 L383.0 338.1 L383.5 337.6 L384.0 337.0 L384.5 336.3 L385.0 335.6 L385.5 334.8 L386.0 334.0 L386.5 333.1 L387.0 332.1 L387.5 331.0 L388.0 329.8 L388.5 328.6 L389.0 327.3 L389.5 325.9 L390.0 324.4 L390.5 322.9 L391.0 321.2 L391.5 319.5 L392.0 317.8 L392.5 315.9 L393.0 314.0 L393.5 312.0 L394.0 310.0 L394.5 308.0 L395.0 305.9 L395.5 303.8 L396.0 301.7 L396.5 299.5 L397.0 297.4 L397.5 295.4 L398.0 293.3 L398.5 291.3 L399.0 289.4 L399.5 287.5 L400.0 285.8 L400.5 284.1 L401.0 282.5 L401.5 281.1 L402.0 279.8 L402.5 278.7 L403.0 277.7 L403.5 276.8 L404.0 276.2 L404.5 275.7 L405.0 275.4 L405.5 275.2 L406.0 275.3 L406.5 275.5 L407.0 275.9 L407.5 276.5 L408.0 277.3 L408.5 278.2 L409.0 279.3 L409.5 280.5 L410.0 281.9 L410.5 283.4 L411.0 285.0 L411.5 286.7 L412.0 288.5 L412.5 290.4 L413.0 292.4 L413.5 294.4 L414.0 296.5 L414.5 298.6 L415.0 300.7 L415.5 302.8 L416.0 304.9 L416.5 307.0 L417.0 309.1 L417.5 311.1 L418.0 313.1 L418.5 315.1 L419.0 316.9 L419.5 318.7 L420.0 320.5 L420.5 322.1 L421.0 323.7 L421.5 325.2 L422.0 326.7 L422.5 328.0 L423.0 329.3 L423.5 330.5 L424.0 331.6 L424.5 332.6 L425.0 333.6 L425.5 334.5 L426.0 335.3 L426.5 336.0 L427.0 336.7 L427.5 337.3 L428.0 337.9 L428.5 338.4 L429.0 338.9 L429.5 339.3 L430.0 339.6 L430.5 340.0 L431.0 340.3 L431.5 340.5 L432.0 340.8 L432.5 341.0 L433.0 341.2 L433.5 341.3 L434.0 341.5 L434.5 341.6 L435.0 341.7 L435.5 341.8 L436.0 341.9 L436.5 341.9 L437.0 342.0 L437.5 342.0 L438.0 342.1 L438.5 342.1 L439.0 342.1 L439.5 342.2 L440.0 342.2 L440.5 342.2 L441.0 342.2 L441.5 342.2 L442.0 342.2 L442.5 342.3 L443.0 342.3 L443.5 342.3 L444.0 342.3 L444.5 342.3 L445.0 342.3 L445.5 342.3 L446.0 342.3 L446.5 342.3 L447.0 342.3 L447.5 342.3 L448.0 342.3 L448.5 342.3" fill="none" stroke="#fff" stroke-width="1" shape-rendering="crispEdges"/>
<rect x="404.1" y="273.7" width="3" height="3" fill="#fff"/>
<path d="M389.5 342.3 L390.0 342.3 L390.5 342.3 L391.0 342.3 L391.5 342.3 L392.0 342.3 L392.5 342.3 L393.0 342.3 L393.5 342.3 L394.0 342.3 L394.5 342.3 L395.0 342.3 L395.5 342.2 L396.0 342.2 L396.5 342.2 L397.0 342.2 L397.5 342.2 L398.0 342.1 L398.5 342.1 L399.0 342.1 L399.5 342.0 L400.0 342.0 L400.5 341.9 L401.0 341.8 L401.5 341.7 L402.0 341.6 L402.5 341.5 L403.0 341.3 L403.5 341.2 L404.0 341.0 L404.5 340.8 L405.0 340.5 L405.5 340.2 L406.0 339.9 L406.5 339.5 L407.0 339.1 L407.5 338.6 L408.0 338.0 L408.5 337.4 L409.0 336.8 L409.5 336.0 L410.0 335.2 L410.5 334.3 L411.0 333.3 L411.5 332.2 L412.0 331.0 L412.5 329.7 L413.0 328.3 L413.5 326.8 L414.0 325.2 L414.5 323.5 L415.0 321.6 L415.5 319.7 L416.0 317.6 L416.5 315.5 L417.0 313.2 L417.5 310.8 L418.0 308.4 L418.5 305.8 L419.0 303.2 L419.5 300.6 L420.0 297.8 L420.5 295.1 L421.0 292.3 L421.5 289.6 L422.0 286.8 L422.5 284.1 L423.0 281.4 L423.5 278.8 L424.0 276.3 L424.5 273.9 L425.0 271.6 L425.5 269.4 L426.0 267.5 L426.5 265.7 L427.0 264.1 L427.5 262.7 L428.0 261.5 L428.5 260.5 L429.0 259.8 L429.5 259.3 L430.0 259.1 L430.5 259.2 L431.0 259.4 L431.5 260.0 L432.0 260.7 L432.5 261.8 L433.0 263.0 L433.5 264.4 L434.0 266.1 L434.5 267.9 L435.0 270.0 L435.5 272.1 L436.0 274.5 L436.5 276.9 L437.0 279.4 L437.5 282.1 L438.0 284.8 L438.5 287.5 L439.0 290.3 L439.5 293.0 L440.0 295.8 L440.5 298.5 L441.0 301.2 L441.5 303.9 L442.0 306.5 L442.5 309.0 L443.0 311.4 L443.5 313.8 L444.0 316.0 L444.5 318.2 L445.0 320.2 L445.5 322.1 L446.0 323.9 L446.5 325.6 L447.0 327.2 L447.5 328.7 L448.0 330.1 L448.5 331.3 L449.0 332.5 L449.5 333.6 L450.0 334.5 L450.5 335.4 L451.0 336.2 L451.5 336.9 L452.0 337.6 L452.5 338.2 L453.0 338.7 L453.5 339.2 L454.0 339.6 L454.5 340.0 L455.0 340.3 L455.5 340.6 L456.0 340.8 L456.5 341.0 L457.0 341.2 L457.5 341.4 L458.0 341.5 L458.5 341.6 L459.0 341.7 L459.5 341.8 L460.0 341.9 L460.5 342.0 L461.0 342.0 L461.5 342.1 L462.0 342.1 L462.5 342.1 L463.0 342.2 L463.5 342.2 L464.0 342.2 L464.5 342.2 L465.0 342.2 L465.5 342.3 L466.0 342.3 L466.5 342.3 L467.0 342.3 L467.5 342.3 L468.0 342.3 L468.5 342.3 L469.0 342.3 L469.5 342.3 L470.0 342.3 L470.5 342.3 L471.0 342.3" fill="none" stroke="#ffff00" stroke-width="1" shape-rendering="crispEdges"/>
<rect x="428.7" y="257.6" width="3" height="3" fill="#ffff00"/>
<path d="M405.5 342.3 L406.0 342.3 L406.5 342.3 L407.0 342.3 L407.5 342.3 L408.0 342.3 L408.5 342.3 L409.0 342.3 L409.5 342.3 L410.0 342.3 L410.5 342.3 L411.0 342.3 L411.5 342.2 L412.0 342.2 L412.5 342.2 L413.0 342.2 L413.5 342.2 L414.0 342.2 L414.5 342.1 L415.0 342.1 L415.5 342.1 L416.0 342.0 L416.5 342.0 L417.0 341.9 L417.5 341.8 L418.0 341.7 L418.5 341.6 L419.0 341.5 L419.5 341.4 L420.0 341.2 L420.5 341.1 L421.0 340.9 L421.5 340.6 L422.0 340.4 L422.5 340.1 L423.0 339.7 L423.5 339.4 L424.0 339.0 L424.5 338.5 L425.0 338.0 L425.5 337.4 L426.0 336.8 L426.5 336.0 L427.0 335.3 L427.5 334.4 L428.0 333.5 L428.5 332.4 L429.0 331.3 L429.5 330.1 L430.0 328.8 L430.5 327.3 L431.0 325.8 L431.5 324.2 L432.0 322.4 L432.5 320.6 L433.0 318.6 L433.5 316.5 L434.0 314.3 L434.5 312.0 L435.0 309.5 L435.5 307.0 L436.0 304.4 L436.5 301.6 L437.0 298.8 L437.5 295.9 L438.0 293.0 L438.5 290.0 L439.0 286.9 L439.5 283.9 L440.0 280.8 L440.5 277.7 L441.0 274.6 L441.5 271.6 L442.0 268.6 L442.5 265.7 L443.0 262.9 L443.5 260.1 L444.0 257.5 L444.5 255.1 L445.0 252.8 L445.5 250.7 L446.0 248.7 L446.5 247.0 L447.0 245.5 L447.5 244.2 L448.0 243.1 L448.5 242.3 L449.0 241.8 L449.5 241.5 L450.0 241.4 L450.5 241.6 L451.0 242.1 L451.5 242.8 L452.0 243.8 L452.5 245.0 L453.0 246.4 L453.5 248.1 L454.0 249.9 L454.5 252.0 L455.0 254.2 L455.5 256.6 L456.0 259.1 L456.5 261.8 L457.0 264.6 L457.5 267.5 L458.0 270.4 L458.5 273.5 L459.0 276.5 L459.5 279.6 L460.0 282.7 L460.5 285.8 L461.0 288.8 L461.5 291.8 L462.0 294.8 L462.5 297.7 L463.0 300.6 L463.5 303.3 L464.0 306.0 L464.5 308.6 L465.0 311.0 L465.5 313.4 L466.0 315.7 L466.5 317.8 L467.0 319.8 L467.5 321.7 L468.0 323.5 L468.5 325.2 L469.0 326.8 L469.5 328.2 L470.0 329.6 L470.5 330.9 L471.0 332.0 L471.5 333.1 L472.0 334.1 L472.5 334.9 L473.0 335.8 L473.5 336.5 L474.0 337.2 L474.5 337.8 L475.0 338.3 L475.5 338.8 L476.0 339.2 L476.5 339.6 L477.0 340.0 L477.5 340.3 L478.0 340.5 L478.5 340.8 L479.0 341.0 L479.5 341.2 L480.0 341.3 L480.5 341.5 L481.0 341.6 L481.5 341.7 L482.0 341.8 L482.5 341.9 L483.0 341.9 L483.5 342.0 L484.0 342.0 L484.5 342.1 L485.0 342.1 L485.5 342.1 L486.0 342.2 L486.5 342.2 L487.0 342.2 L487.5 342.2 L488.0 342.2 L488.5 342.3 L489.0 342.3 L489.5 342.3 L490.0 342.3 L490.5 342.3 L491.0 342.3 L491.5 342.3 L492.0 342.3 L492.5 342.3 L493.0 342.3 L493.5 342.3 L494.0 342.3" fill="none" stroke="#00ff00" stroke-width="1" shape-rendering="crispEdges"/>
<rect x="448.3" y="239.9" width="3" height="3" fill="#00ff00"/>
<path d="M455.5 342.3 L456.0 342.3 L456.5 342.3 L457.0 342.3 L457.5 342.3 L458.0 342.3 L458.5 342.3 L459.0 342.3 L459.5 342.3 L460.0 342.3 L460.5 342.3 L461.0 342.3 L461.5 342.2 L462.0 342.2 L462.5 342.2 L463.0 342.2 L463.5 342.2 L464.0 342.2 L464.5 342.1 L465.0 342.1 L465.5 342.1 L466.0 342.0 L466.5 342.0 L467.0 341.9 L467.5 341.8 L468.0 341.8 L468.5 341.7 L469.0 341.6 L469.5 341.4 L470.0 341.3 L470.5 341.1 L471.0 340.9 L471.5 340.7 L472.0 340.5 L472.5 340.2 L473.0 339.9 L473.5 339.6 L474.0 339.2 L474.5 338.8 L475.0 338.3 L475.5 337.7 L476.0 337.1 L476.5 336.5 L477.0 335.7 L477.5 334.9 L478.0 334.0 L478.5 333.1 L479.0 332.0 L479.5 330.9 L480.0 329.6 L480.5 328.3 L481.0 326.8 L481.5 325.2 L482.0 323.5 L482.5 321.7 L483.0 319.8 L483.5 317.8 L484.0 315.6 L484.5 313.3 L485.0 310.9 L485.5 308.4 L486.0 305.8 L486.5 303.0 L487.0 300.2 L487.5 297.2 L488.0 294.2 L488.5 291.0 L489.0 287.8 L489.5 284.6 L490.0 281.3 L490.5 277.9 L491.0 274.6 L491.5 271.2 L492.0 267.9 L492.5 264.5 L493.0 261.2 L493.5 258.0 L494.0 254.9 L494.5 251.9 L495.0 249.0 L495.5 246.2 L496.0 243.6 L496.5 241.1 L497.0 238.8 L497.5 236.8 L498.0 235.0 L498.5 233.3 L499.0 232.0 L499.5 230.9 L500.0 230.0 L500.5 229.4 L501.0 229.1 L501.5 229.0 L502.0 229.3 L502.5 229.7 L503.0 230.5 L503.5 231.5 L504.0 232.8 L504.5 234.3 L505.0 236.1 L505.5 238.0 L506.0 240.2 L506.5 242.6 L507.0 245.2 L507.5 247.9 L508.0 250.7 L508.5 253.7 L509.0 256.8 L509.5 260.0 L510.0 263.3 L510.5 266.6 L511.0 269.9 L511.5 273.3 L512.0 276.6 L512.5 280.0 L513.0 283.3 L513.5 286.6 L514.0 289.8 L514.5 293.0 L515.0 296.1 L515.5 299.0 L516.0 301.9 L516.5 304.7 L517.0 307.4 L517.5 310.0 L518.0 312.4 L518.5 314.8 L519.0 317.0 L519.5 319.1 L520.0 321.0 L520.5 322.9 L521.0 324.6 L521.5 326.2 L522.0 327.7 L522.5 329.1 L523.0 330.4 L523.5 331.6 L524.0 332.7 L524.5 333.7 L525.0 334.6 L525.5 335.4 L526.0 336.2 L526.5 336.9 L527.0 337.5 L527.5 338.1 L528.0 338.6 L528.5 339.0 L529.0 339.4 L529.5 339.8 L530.0 340.1 L530.5 340.4 L531.0 340.6 L531.5 340.9 L532.0 341.1 L532.5 341.2 L533.0 341.4 L533.5 341.5 L534.0 341.6 L534.5 341.7 L535.0 341.8 L535.5 341.9 L536.0 341.9 L536.5 342.0 L537.0 342.0 L537.5 342.1 L538.0 342.1 L538.5 342.2 L539.0 342.2 L539.5 342.2 L540.0 342.2 L540.5 342.2 L541.0 342.2 L541.5 342.3 L542.0 342.3 L542.5 342.3 L543.0 342.3 L543.5 342.3 L544.0 342.3 L544.5 342.3 L545.0 342.3 L545.5 342.3 L546.0 342.3 L546.5 342.3 L547.0 342.3" fill="none" stroke="#00ffff" stroke-width="1" shape-rendering="crispEdges"/>
<rect x="499.8" y="227.5" width="3" height="3" fill="#00ffff"/>
<path d="M506.0 342.3 L506.5 342.3 L507.0 342.3 L507.5 342.3 L508.0 342.3 L508.5 342.3 L509.0 342.3 L509.5 342.3 L510.0 342.3 L510.5 342.3 L511.0 342.3 L511.5 342.3 L512.0 342.3 L512.5 342.2 L513.0 342.2 L513.5 342.2 L514.0 342.2 L514.5 342.2 L515.0 342.2 L515.5 342.1 L516.0 342.1 L516.5 342.0 L517.0 342.0 L517.5 341.9 L518.0 341.9 L518.5 341.8 L519.0 341.7 L519.5 341.6 L520.0 341.5 L520.5 341.3 L521.0 341.2 L521.5 341.0 L522.0 340.8 L522.5 340.5 L523.0 340.3 L523.5 340.0 L524.0 339.6 L524.5 339.2 L525.0 338.8 L525.5 338.3 L526.0 337.8 L526.5 337.2 L527.0 336.6 L527.5 335.8 L528.0 335.0 L528.5 334.2 L529.0 333.2 L529.5 332.2 L530.0 331.1 L530.5 329.9 L531.0 328.6 L531.5 327.2 L532.0 325.7 L532.5 324.1 L533.0 322.5 L533.5 320.7 L534.0 318.8 L534.5 316.9 L535.0 314.8 L535.5 312.7 L536.0 310.5 L536.5 308.2 L537.0 305.8 L537.5 303.4 L538.0 301.0 L538.5 298.5 L539.0 296.0 L539.5 293.4 L540.0 290.9 L540.5 288.4 L541.0 285.9 L541.5 283.5 L542.0 281.1 L542.5 278.9 L543.0 276.7 L543.5 274.6 L544.0 272.6 L544.5 270.8 L545.0 269.1 L545.5 267.6 L546.0 266.2 L546.5 265.1 L547.0 264.1 L547.5 263.4 L548.0 262.8 L548.5 262.5 L549.0 262.4 L549.5 262.5 L550.0 262.8 L550.5 263.3 L551.0 264.0 L551.5 265.0 L552.0 266.1 L552.5 267.4 L553.0 268.9 L553.5 270.6 L554.0 272.4 L554.5 274.3 L555.0 276.4 L555.5 278.6 L556.0 280.9 L556.5 283.3 L557.0 285.7 L557.5 288.1 L558.0 290.6 L558.5 293.2 L559.0 295.7 L559.5 298.2 L560.0 300.7 L560.5 303.2 L561.0 305.6 L561.5 307.9 L562.0 310.2 L562.5 312.4 L563.0 314.6 L563.5 316.6 L564.0 318.6 L564.5 320.5 L565.0 322.3 L565.5 324.0 L566.0 325.5 L566.5 327.0 L567.0 328.4 L567.5 329.7 L568.0 331.0 L568.5 332.1 L569.0 333.1 L569.5 334.1 L570.0 334.9 L570.5 335.7 L571.0 336.5 L571.5 337.1 L572.0 337.7 L572.5 338.3 L573.0 338.8 L573.5 339.2 L574.0 339.6 L574.5 339.9 L575.0 340.2 L575.5 340.5 L576.0 340.8 L576.5 341.0 L577.0 341.2 L577.5 341.3 L578.0 341.5 L578.5 341.6 L579.0 341.7 L579.5 341.8 L580.0 341.9 L580.5 341.9 L581.0 342.0 L581.5 342.0 L582.0 342.1 L582.5 342.1 L583.0 342.1 L583.5 342.2 L584.0 342.2 L584.5 342.2 L585.0 342.2 L585.5 342.2 L586.0 342.3 L586.5 342.3 L587.0 342.3 L587.5 342.3 L588.0 342.3 L588.5 342.3 L589.0 342.3 L589.5 342.3 L590.0 342.3 L590.5 342.3 L591.0 342.3 L591.5 342.3 L592.0 342.3" fill="none" stroke="#ff0000" stroke-width="1" shape-rendering="crispEdges"/>
<rect x="547.5" y="260.9" width="3" height="3" fill="#ff0000"/>
<path d="M523.5 342.3 L524.0 342.3 L524.5 342.3 L525.0 342.3 L525.5 342.3 L526.0 342.3 L526.5 342.3 L527.0 342.3 L527.5 342.3 L528.0 342.3 L528.5 342.3 L529.0 342.3 L529.5 342.3 L530.0 342.3 L530.5 342.2 L531.0 342.2 L531.5 342.2 L532.0 342.2 L532.5 342.2 L533.0 342.2 L533.5 342.1 L534.0 342.1 L534.5 342.1 L535.0 342.0 L535.5 342.0 L536.0 341.9 L536.5 341.9 L537.0 341.8 L537.5 341.7 L538.0 341.6 L538.5 341.5 L539.0 341.4 L539.5 341.2 L540.0 341.0 L540.5 340.8 L541.0 340.6 L541.5 340.4 L542.0 340.1 L542.5 339.8 L543.0 339.5 L543.5 339.1 L544.0 338.7 L544.5 338.2 L545.0 337.7 L545.5 337.2 L546.0 336.6 L546.5 335.9 L547.0 335.2 L547.5 334.4 L548.0 333.5 L548.5 332.6 L549.0 331.6 L549.5 330.5 L550.0 329.4 L550.5 328.2 L551.0 326.9 L551.5 325.5 L552.0 324.1 L552.5 322.6 L553.0 321.0 L553.5 319.3 L554.0 317.6 L554.5 315.8 L555.0 313.9 L555.5 312.0 L556.0 310.1 L556.5 308.1 L557.0 306.1 L557.5 304.0 L558.0 302.0 L558.5 299.9 L559.0 297.8 L559.5 295.8 L560.0 293.8 L560.5 291.8 L561.0 289.9 L561.5 288.0 L562.0 286.2 L562.5 284.5 L563.0 282.9 L563.5 281.4 L564.0 280.0 L564.5 278.8 L565.0 277.6 L565.5 276.7 L566.0 275.8 L566.5 275.2 L567.0 274.7 L567.5 274.3 L568.0 274.2 L568.5 274.2 L569.0 274.4 L569.5 274.7 L570.0 275.2 L570.5 275.9 L571.0 276.7 L571.5 277.7 L572.0 278.8 L572.5 280.1 L573.0 281.5 L573.5 283.0 L574.0 284.6 L574.5 286.3 L575.0 288.1 L575.5 289.9 L576.0 291.9 L576.5 293.9 L577.0 295.9 L577.5 297.9 L578.0 300.0 L578.5 302.0 L579.0 304.1 L579.5 306.2 L580.0 308.2 L580.5 310.2 L581.0 312.1 L581.5 314.0 L582.0 315.9 L582.5 317.7 L583.0 319.4 L583.5 321.0 L584.0 322.6 L584.5 324.1 L585.0 325.6 L585.5 326.9 L586.0 328.2 L586.5 329.4 L587.0 330.6 L587.5 331.6 L588.0 332.6 L588.5 333.6 L589.0 334.4 L589.5 335.2 L590.0 335.9 L590.5 336.6 L591.0 337.2 L591.5 337.7 L592.0 338.3 L592.5 338.7 L593.0 339.1 L593.5 339.5 L594.0 339.8 L594.5 340.1 L595.0 340.4 L595.5 340.6 L596.0 340.9 L596.5 341.0 L597.0 341.2 L597.5 341.4 L598.0 341.5 L598.5 341.6 L599.0 341.7 L599.5 341.8 L600.0 341.9 L600.5 341.9 L601.0 342.0 L601.5 342.0 L602.0 342.1 L602.5 342.1 L603.0 342.1 L603.5 342.2 L604.0 342.2 L604.5 342.2 L605.0 342.2 L605.5 342.2 L606.0 342.2 L606.5 342.3 L607.0 342.3 L607.5 342.3 L608.0 342.3 L608.5 342.3 L609.0 342.3 L609.5 342.3 L610.0 342.3 L610.5 342.3 L611.0 342.3 L611.5 342.3 L612.0 342.3 L612.5 342.3 L613.0 342.3" fill="none" stroke="#ff00ff" stroke-width="1" shape-rendering="crispEdges"/>
<rect x="566.7" y="272.7" width="3" height="3" fill="#ff00ff"/>
<path d="M584.0 342.3 L584.5 342.3 L585.0 342.3 L585.5 342.3 L586.0 342.3 L586.5 342.3 L587.0 342.3 L587.5 342.3 L588.0 342.3 L588.5 342.3 L589.0 342.3 L589.5 342.3 L590.0 342.3 L590.5 342.3 L591.0 342.3 L591.5 342.3 L592.0 342.3 L592.5 342.3 L593.0 342.3 L593.5 342.3 L594.0 342.3 L594.5 342.3 L595.0 342.3 L595.5 342.3 L596.0 342.2 L596.5 342.2 L597.0 342.2 L597.5 342.2 L598.0 342.2 L598.5 342.2 L599.0 342.1 L599.5 342.1 L600.0 342.1 L600.5 342.1 L601.0 342.0 L601.5 342.0 L602.0 341.9 L602.5 341.9 L603.0 341.8 L603.5 341.8 L604.0 341.7 L604.5 341.6 L605.0 341.5 L605.5 341.4 L606.0 341.3 L606.5 341.2 L607.0 341.1 L607.5 340.9 L608.0 340.8 L608.5 340.7 L609.0 340.5 L609.5 340.3 L610.0 340.1 L610.5 339.9 L611.0 339.7 L611.5 339.5 L612.0 339.3 L612.5 339.1 L613.0 338.8 L613.5 338.6 L614.0 338.4 L614.5 338.1 L615.0 337.9 L615.5 337.6 L616.0 337.4 L616.5 337.1 L617.0 336.9 L617.5 336.7 L618.0 336.4 L618.5 336.2 L619.0 336.0 L619.5 335.8 L620.0 335.6 L620.5 335.5 L621.0 335.3 L621.5 335.2 L622.0 335.1 L622.5 335.0 L623.0 335.0 L623.5 334.9 L624.0 334.9 L624.5 334.9 L625.0 335.0 L625.5 335.0 L626.0 335.1 L626.5 335.2 L627.0 335.3 L627.5 335.4 L628.0 335.6 L628.5 335.8 L629.0 335.9 L629.5 336.1 L630.0 336.4 L630.5 336.6 L631.0 336.8 L631.5 337.1 L632.0 337.3 L632.5 337.5 L633.0 337.8 L633.5 338.0 L634.0 338.3 L634.5 338.5 L635.0 338.8 L635.5 339.0 L636.0 339.2 L636.5 339.5 L637.0 339.7 L637.5 339.9 L638.0 340.1 L638.5 340.3 L639.0 340.4 L639.5 340.6 L640.0 340.8 L640.5 340.9 L641.0 341.0 L641.5 341.2 L642.0 341.3 L642.5 341.4 L643.0 341.5 L643.5 341.6 L644.0 341.7 L644.5 341.7 L645.0 341.8" fill="none" stroke="#fff" stroke-width="1" shape-rendering="crispEdges"/>
<rect x="622.6" y="333.4" width="3" height="3" fill="#fff"/>
<path d="M603.0 342.3 L603.5 342.3 L604.0 342.3 L604.5 342.3 L605.0 342.3 L605.5 342.3 L606.0 342.3 L606.5 342.3 L607.0 342.3 L607.5 342.3 L608.0 342.3 L608.5 342.3 L609.0 342.3 L609.5 342.3 L610.0 342.3 L610.5 342.3 L611.0 342.3 L611.5 342.3 L612.0 342.3 L612.5 342.3 L613.0 342.3 L613.5 342.3 L614.0 342.3 L614.5 342.3 L615.0 342.3 L615.5 342.3 L616.0 342.3 L616.5 342.2 L617.0 342.2 L617.5 342.2 L618.0 342.2 L618.5 342.2 L619.0 342.2 L619.5 342.1 L620.0 342.1 L620.5 342.1 L621.0 342.1 L621.5 342.0 L622.0 342.0 L622.5 341.9 L623.0 341.9 L623.5 341.8 L624.0 341.8 L624.5 341.7 L625.0 341.7 L625.5 341.6 L626.0 341.5 L626.5 341.4 L627.0 341.3 L627.5 341.2 L628.0 341.1 L628.5 341.0 L629.0 340.9 L629.5 340.8 L630.0 340.7 L630.5 340.6 L631.0 340.5 L631.5 340.4 L632.0 340.3 L632.5 340.2 L633.0 340.1 L633.5 340.0 L634.0 339.9 L634.5 339.8 L635.0 339.7 L635.5 339.6 L636.0 339.5 L636.5 339.5 L637.0 339.4 L637.5 339.4 L638.0 339.4 L638.5 339.4 L639.0 339.4 L639.5 339.4 L640.0 339.4 L640.5 339.4 L641.0 339.4 L641.5 339.5 L642.0 339.6 L642.5 339.6 L643.0 339.7 L643.5 339.8 L644.0 339.9 L644.5 340.0 L645.0 340.1" fill="none" stroke="#ffff00" stroke-width="1" shape-rendering="crispEdges"/>
<rect x="637.4" y="337.9" width="3" height="3" fill="#ffff00"/>
</g><g clip-path="url(#cp2)">
<path d="M164 648h2v2h-2ZM165 644h2v2h-2ZM166 643h2v2h-2ZM167 647h2v2h-2ZM168 650h2v2h-2ZM169 647h2v2h-2ZM169 645h2v2h-2ZM170 644h2v2h-2ZM171 650h2v2h-2ZM172 651h2v2h-2ZM173 645h2v2h-2ZM174 646h2v2h-2ZM175 643h2v2h-2ZM176 645h2v2h-2ZM176 648h2v2h-2ZM177 648h2v2h-2ZM178 641h2v2h-2ZM179 648h2v2h-2ZM180 650h2v2h-2ZM181 651h2v2h-2ZM182 647h2v2h-2ZM182 647h2v2h-2ZM183 648h2v2h-2ZM184 647h2v2h-2ZM185 646h2v2h-2ZM186 644h2v2h-2ZM187 642h2v2h-2ZM188 644h2v2h-2ZM189 649h2v2h-2ZM189 641h2v2h-2ZM190 646h2v2h-2ZM191 641h2v2h-2ZM192 643h2v2h-2ZM193 638h2v2h-2ZM194 638h2v2h-2ZM195 634h2v2h-2ZM195 623h2v2h-2ZM196 630h2v2h-2ZM197 625h2v2h-2ZM198 628h2v2h-2ZM199 623h2v2h-2ZM200 618h2v2h-2ZM201 617h2v2h-2ZM201 613h2v2h-2ZM202 610h2v2h-2ZM203 610h2v2h-2ZM204 603h2v2h-2ZM205 603h2v2h-2ZM206 593h2v2h-2ZM207 596h2v2h-2ZM208 591h2v2h-2ZM208 591h2v2h-2ZM209 586h2v2h-2ZM210 589h2v2h-2ZM211 584h2v2h-2ZM212 587h2v2h-2ZM213 583h2v2h-2ZM214 585h2v2h-2ZM214 587h2v2h-2ZM215 589h2v2h-2ZM216 586h2v2h-2ZM217 587h2v2h-2ZM218 584h2v2h-2ZM219 590h2v2h-2ZM220 588h2v2h-2ZM221 589h2v2h-2ZM221 589h2v2h-2ZM222 589h2v2h-2ZM223 588h2v2h-2ZM224 589h2v2h-2ZM225 589h2v2h-2ZM226 586h2v2h-2ZM227 583h2v2h-2ZM227 579h2v2h-2ZM228 579h2v2h-2ZM229 577h2v2h-2ZM230 576h2v2h-2ZM231 575h2v2h-2ZM232 575h2v2h-2ZM233 573h2v2h-2ZM234 569h2v2h-2ZM234 575h2v2h-2ZM235 575h2v2h-2ZM236 568h2v2h-2ZM237 573h2v2h-2ZM238 571h2v2h-2ZM239 572h2v2h-2ZM240 578h2v2h-2ZM240 569h2v2h-2ZM241 571h2v2h-2ZM242 576h2v2h-2ZM243 574h2v2h-2ZM244 576h2v2h-2ZM245 578h2v2h-2ZM246 575h2v2h-2ZM247 573h2v2h-2ZM247 570h2v2h-2ZM248 570h2v2h-2ZM249 570h2v2h-2ZM250 565h2v2h-2ZM251 570h2v2h-2ZM252 564h2v2h-2ZM253 562h2v2h-2ZM253 564h2v2h-2ZM254 567h2v2h-2ZM255 564h2v2h-2ZM256 560h2v2h-2ZM257 558h2v2h-2ZM258 554h2v2h-2ZM259 560h2v2h-2ZM260 558h2v2h-2ZM260 557h2v2h-2ZM261 561h2v2h-2ZM262 569h2v2h-2ZM263 563h2v2h-2ZM264 561h2v2h-2ZM265 567h2v2h-2ZM266 574h2v2h-2ZM266 575h2v2h-2ZM267 576h2v2h-2ZM268 573h2v2h-2ZM269 581h2v2h-2ZM270 585h2v2h-2ZM271 584h2v2h-2ZM272 590h2v2h-2ZM272 587h2v2h-2ZM273 595h2v2h-2ZM274 595h2v2h-2ZM275 593h2v2h-2ZM276 591h2v2h-2ZM277 594h2v2h-2ZM278 595h2v2h-2ZM279 601h2v2h-2ZM279 598h2v2h-2ZM280 597h2v2h-2ZM281 597h2v2h-2ZM282 594h2v2h-2ZM283 596h2v2h-2ZM284 593h2v2h-2ZM285 596h2v2h-2ZM285 597h2v2h-2ZM286 596h2v2h-2ZM287 595h2v2h-2ZM288 593h2v2h-2ZM289 596h2v2h-2ZM290 594h2v2h-2ZM291 596h2v2h-2ZM292 587h2v2h-2ZM292 585h2v2h-2ZM293 587h2v2h-2ZM294 586h2v2h-2ZM295 585h2v2h-2ZM296 577h2v2h-2ZM297 574h2v2h-2ZM298 565h2v2h-2ZM298 566h2v2h-2ZM299 564h2v2h-2ZM300 564h2v2h-2ZM301 551h2v2h-2ZM302 552h2v2h-2ZM303 554h2v2h-2ZM304 548h2v2h-2ZM305 551h2v2h-2ZM305 536h2v2h-2ZM306 541h2v2h-2ZM307 542h2v2h-2ZM308 544h2v2h-2ZM309 550h2v2h-2ZM310 545h2v2h-2ZM311 551h2v2h-2ZM311 547h2v2h-2ZM312 556h2v2h-2ZM313 556h2v2h-2ZM314 553h2v2h-2ZM315 555h2v2h-2ZM316 566h2v2h-2ZM317 570h2v2h-2ZM318 566h2v2h-2ZM318 569h2v2h-2ZM319 576h2v2h-2ZM320 578h2v2h-2ZM321 580h2v2h-2ZM322 584h2v2h-2ZM323 584h2v2h-2ZM324 580h2v2h-2ZM324 583h2v2h-2ZM325 580h2v2h-2ZM326 586h2v2h-2ZM327 587h2v2h-2ZM328 589h2v2h-2ZM329 587h2v2h-2ZM330 591h2v2h-2ZM330 593h2v2h-2ZM331 587h2v2h-2ZM332 585h2v2h-2ZM333 587h2v2h-2ZM334 586h2v2h-2ZM335 590h2v2h-2ZM336 593h2v2h-2ZM337 592h2v2h-2ZM337 594h2v2h-2ZM338 597h2v2h-2ZM339 599h2v2h-2ZM340 599h2v2h-2ZM341 596h2v2h-2ZM342 595h2v2h-2ZM343 595h2v2h-2ZM343 588h2v2h-2ZM344 589h2v2h-2ZM345 586h2v2h-2ZM346 583h2v2h-2ZM347 587h2v2h-2ZM348 588h2v2h-2ZM349 579h2v2h-2ZM350 581h2v2h-2ZM350 575h2v2h-2ZM351 576h2v2h-2ZM352 574h2v2h-2ZM353 574h2v2h-2ZM354 581h2v2h-2ZM355 574h2v2h-2ZM356 578h2v2h-2ZM356 579h2v2h-2ZM357 578h2v2h-2ZM358 576h2v2h-2ZM359 577h2v2h-2ZM360 579h2v2h-2ZM361 589h2v2h-2ZM362 589h2v2h-2ZM363 598h2v2h-2ZM363 595h2v2h-2ZM364 597h2v2h-2ZM365 604h2v2h-2ZM366 605h2v2h-2ZM367 608h2v2h-2ZM368 610h2v2h-2ZM369 618h2v2h-2ZM369 621h2v2h-2ZM370 624h2v2h-2ZM371 620h2v2h-2ZM372 625h2v2h-2ZM373 631h2v2h-2ZM374 632h2v2h-2ZM375 635h2v2h-2ZM376 636h2v2h-2ZM376 639h2v2h-2ZM377 641h2v2h-2ZM378 644h2v2h-2ZM379 643h2v2h-2ZM380 638h2v2h-2ZM381 641h2v2h-2ZM382 642h2v2h-2ZM382 642h2v2h-2ZM383 640h2v2h-2ZM384 638h2v2h-2ZM385 639h2v2h-2ZM386 635h2v2h-2ZM387 633h2v2h-2ZM388 634h2v2h-2ZM389 631h2v2h-2ZM389 629h2v2h-2ZM390 626h2v2h-2ZM391 618h2v2h-2ZM392 623h2v2h-2ZM393 614h2v2h-2ZM394 612h2v2h-2ZM395 609h2v2h-2ZM395 605h2v2h-2ZM396 599h2v2h-2ZM397 600h2v2h-2ZM398 598h2v2h-2ZM399 598h2v2h-2ZM400 594h2v2h-2ZM401 590h2v2h-2ZM401 592h2v2h-2ZM402 593h2v2h-2ZM403 593h2v2h-2ZM404 592h2v2h-2ZM405 592h2v2h-2ZM406 585h2v2h-2ZM407 587h2v2h-2ZM408 589h2v2h-2ZM408 585h2v2h-2ZM409 591h2v2h-2ZM410 587h2v2h-2ZM411 588h2v2h-2ZM412 594h2v2h-2ZM413 594h2v2h-2ZM414 593h2v2h-2ZM414 588h2v2h-2ZM415 586h2v2h-2ZM416 592h2v2h-2ZM417 585h2v2h-2ZM418 588h2v2h-2ZM419 587h2v2h-2ZM420 587h2v2h-2ZM421 585h2v2h-2ZM421 588h2v2h-2ZM422 585h2v2h-2ZM423 584h2v2h-2ZM424 578h2v2h-2ZM425 573h2v2h-2ZM426 570h2v2h-2ZM427 577h2v2h-2ZM427 579h2v2h-2ZM428 575h2v2h-2ZM429 575h2v2h-2ZM430 567h2v2h-2ZM431 571h2v2h-2ZM432 575h2v2h-2ZM433 572h2v2h-2ZM434 574h2v2h-2ZM434 580h2v2h-2ZM435 578h2v2h-2ZM436 578h2v2h-2ZM437 578h2v2h-2ZM438 578h2v2h-2ZM439 578h2v2h-2ZM440 576h2v2h-2ZM440 577h2v2h-2ZM441 577h2v2h-2ZM442 570h2v2h-2ZM443 571h2v2h-2ZM444 570h2v2h-2ZM445 573h2v2h-2ZM446 567h2v2h-2ZM447 563h2v2h-2ZM447 567h2v2h-2ZM448 559h2v2h-2ZM449 561h2v2h-2ZM450 558h2v2h-2ZM451 558h2v2h-2ZM452 557h2v2h-2ZM453 555h2v2h-2ZM453 560h2v2h-2ZM454 556h2v2h-2ZM455 564h2v2h-2ZM456 567h2v2h-2ZM457 565h2v2h-2ZM458 573h2v2h-2ZM459 574h2v2h-2ZM460 574h2v2h-2ZM460 576h2v2h-2ZM461 587h2v2h-2ZM462 583h2v2h-2ZM463 582h2v2h-2ZM464 586h2v2h-2ZM465 591h2v2h-2ZM466 594h2v2h-2ZM466 594h2v2h-2ZM467 597h2v2h-2ZM468 595h2v2h-2ZM469 596h2v2h-2ZM470 596h2v2h-2ZM471 592h2v2h-2ZM472 596h2v2h-2ZM472 600h2v2h-2ZM473 593h2v2h-2ZM474 598h2v2h-2ZM475 596h2v2h-2ZM476 595h2v2h-2ZM477 595h2v2h-2ZM478 596h2v2h-2ZM479 594h2v2h-2ZM479 587h2v2h-2ZM480 593h2v2h-2ZM481 591h2v2h-2ZM482 587h2v2h-2ZM483 587h2v2h-2ZM484 586h2v2h-2ZM485 585h2v2h-2ZM485 591h2v2h-2ZM486 586h2v2h-2ZM487 582h2v2h-2ZM488 578h2v2h-2ZM489 573h2v2h-2ZM490 572h2v2h-2ZM491 570h2v2h-2ZM492 566h2v2h-2ZM492 564h2v2h-2ZM493 560h2v2h-2ZM494 556h2v2h-2ZM495 556h2v2h-2ZM496 555h2v2h-2ZM497 553h2v2h-2ZM498 546h2v2h-2ZM498 544h2v2h-2ZM499 544h2v2h-2ZM500 544h2v2h-2ZM501 544h2v2h-2ZM502 548h2v2h-2ZM503 548h2v2h-2ZM504 554h2v2h-2ZM505 555h2v2h-2ZM505 559h2v2h-2ZM506 557h2v2h-2ZM507 563h2v2h-2ZM508 565h2v2h-2ZM509 567h2v2h-2ZM510 567h2v2h-2ZM511 576h2v2h-2ZM511 579h2v2h-2ZM512 577h2v2h-2ZM513 583h2v2h-2ZM514 581h2v2h-2ZM515 585h2v2h-2ZM516 584h2v2h-2ZM517 590h2v2h-2ZM518 584h2v2h-2ZM518 588h2v2h-2ZM519 589h2v2h-2ZM520 582h2v2h-2ZM521 586h2v2h-2ZM522 579h2v2h-2ZM523 588h2v2h-2ZM524 590h2v2h-2ZM524 589h2v2h-2ZM525 585h2v2h-2ZM526 590h2v2h-2ZM527 589h2v2h-2ZM528 589h2v2h-2ZM529 594h2v2h-2ZM530 592h2v2h-2ZM530 594h2v2h-2ZM531 596h2v2h-2ZM532 591h2v2h-2ZM533 592h2v2h-2ZM534 594h2v2h-2ZM535 596h2v2h-2ZM536 599h2v2h-2ZM537 591h2v2h-2ZM537 592h2v2h-2ZM538 595h2v2h-2ZM539 589h2v2h-2ZM540 591h2v2h-2ZM541 585h2v2h-2ZM542 583h2v2h-2ZM543 581h2v2h-2ZM543 580h2v2h-2ZM544 579h2v2h-2ZM545 582h2v2h-2ZM546 579h2v2h-2ZM547 579h2v2h-2ZM548 579h2v2h-2ZM549 577h2v2h-2ZM550 577h2v2h-2ZM550 575h2v2h-2ZM551 587h2v2h-2ZM552 580h2v2h-2ZM553 582h2v2h-2ZM554 577h2v2h-2ZM555 581h2v2h-2ZM556 589h2v2h-2ZM556 585h2v2h-2ZM557 588h2v2h-2ZM558 585h2v2h-2ZM559 591h2v2h-2ZM560 589h2v2h-2ZM561 590h2v2h-2ZM562 590h2v2h-2ZM563 591h2v2h-2ZM563 594h2v2h-2ZM564 588h2v2h-2ZM565 586h2v2h-2ZM566 588h2v2h-2ZM567 590h2v2h-2ZM568 587h2v2h-2ZM569 585h2v2h-2ZM569 587h2v2h-2ZM570 587h2v2h-2ZM571 583h2v2h-2ZM572 590h2v2h-2ZM573 589h2v2h-2ZM574 593h2v2h-2ZM575 591h2v2h-2ZM576 593h2v2h-2ZM576 596h2v2h-2ZM577 598h2v2h-2ZM578 594h2v2h-2ZM579 603h2v2h-2ZM580 605h2v2h-2ZM581 602h2v2h-2ZM582 611h2v2h-2ZM582 618h2v2h-2ZM583 616h2v2h-2ZM584 622h2v2h-2ZM585 618h2v2h-2ZM586 629h2v2h-2ZM587 629h2v2h-2ZM588 635h2v2h-2ZM589 633h2v2h-2ZM589 638h2v2h-2ZM590 637h2v2h-2ZM591 640h2v2h-2ZM592 642h2v2h-2ZM593 639h2v2h-2ZM594 640h2v2h-2ZM595 643h2v2h-2ZM595 647h2v2h-2ZM596 648h2v2h-2ZM597 645h2v2h-2ZM598 640h2v2h-2ZM599 648h2v2h-2ZM600 649h2v2h-2ZM601 649h2v2h-2ZM601 650h2v2h-2ZM602 650h2v2h-2ZM603 648h2v2h-2ZM604 643h2v2h-2ZM605 647h2v2h-2ZM606 649h2v2h-2ZM607 652h2v2h-2ZM608 647h2v2h-2ZM608 648h2v2h-2ZM609 651h2v2h-2ZM610 651h2v2h-2ZM611 648h2v2h-2ZM612 645h2v2h-2ZM613 646h2v2h-2ZM614 647h2v2h-2ZM614 649h2v2h-2ZM615 647h2v2h-2ZM616 648h2v2h-2ZM617 642h2v2h-2ZM618 651h2v2h-2ZM619 649h2v2h-2ZM620 645h2v2h-2ZM621 649h2v2h-2ZM621 644h2v2h-2ZM622 648h2v2h-2ZM623 648h2v2h-2ZM624 649h2v2h-2ZM625 652h2v2h-2ZM626 651h2v2h-2ZM627 642h2v2h-2ZM627 646h2v2h-2ZM628 646h2v2h-2ZM629 645h2v2h-2ZM630 646h2v2h-2ZM631 645h2v2h-2ZM632 649h2v2h-2ZM633 648h2v2h-2ZM634 645h2v2h-2ZM634 649h2v2h-2ZM635 651h2v2h-2ZM636 648h2v2h-2ZM637 649h2v2h-2ZM638 646h2v2h-2ZM639 650h2v2h-2ZM640 650h2v2h-2ZM640 649h2v2h-2ZM641 643h2v2h-2ZM642 648h2v2h-2ZM643 647h2v2h-2ZM644 648h2v2h-2Z" fill="#888888" shape-rendering="crispEdges"/>
<path d="M166 652h2v2h-2ZM170 654h2v2h-2ZM174 654h2v2h-2ZM178 651h2v2h-2ZM182 653h2v2h-2ZM186 654h2v2h-2ZM190 651h2v2h-2ZM598 653h2v2h-2ZM602 651h2v2h-2ZM606 652h2v2h-2ZM610 654h2v2h-2ZM614 654h2v2h-2ZM618 653h2v2h-2ZM622 652h2v2h-2ZM626 651h2v2h-2ZM630 651h2v2h-2ZM634 654h2v2h-2ZM638 652h2v2h-2ZM642 652h2v2h-2Z" fill="#ff0" shape-rendering="crispEdges"/>
</g><path d="M164 341.5H645" stroke="#ff0" shape-rendering="crispEdges"/>
</svg>
<div class="t" style="left:164px;top:71.5px;color:#fff">200</div>
<div class="t" style="right:9.5px;top:71.5px;color:#fff">200</div>
<div class="t" style="left:164px;top:100.5px;color:#fff">150</div>
<div class="t" style="right:9.5px;top:100.5px;color:#fff">150</div>
<div class="t" style="left:164px;top:130.5px;color:#fff">100</div>
<div class="t" style="right:9.5px;top:130.5px;color:#fff">100</div>
<div class="t" style="left:164px;top:159.5px;color:#fff">50</div>
<div class="t" style="right:9.5px;top:159.5px;color:#fff">50</div>
<div class="t" style="left:164px;top:218.5px;color:#ff0">200</div>
<div class="t" style="right:9.5px;top:218.5px;color:#ff0">200</div>
<div class="t" style="left:164px;top:248.5px;color:#ff0">150</div>
<div class="t" style="right:9.5px;top:248.5px;color:#ff0">150</div>
<div class="t" style="left:164px;top:277.5px;color:#ff0">100</div>
<div class="t" style="right:9.5px;top:277.5px;color:#ff0">100</div>
<div class="t" style="left:164px;top:307.5px;color:#ff0">50</div>
<div class="t" style="right:9.5px;top:307.5px;color:#ff0">50</div>
<div class="t" style="left:164px;top:397.5px;color:#fff">75</div>
<div class="t" style="right:9.5px;top:397.5px;color:#fff">75</div>
<div class="t" style="left:164px;top:434.5px;color:#fff">25</div>
<div class="t" style="right:9.5px;top:434.5px;color:#fff">25</div>
<div class="t" style="left:164px;top:471.5px;color:#fff">-25</div>
<div class="t" style="right:9.5px;top:471.5px;color:#fff">-25</div>
<div class="t" style="left:164px;top:507.5px;color:#fff">-75</div>
<div class="t" style="right:9.5px;top:507.5px;color:#fff">-75</div>
<div class="t" style="left:164px;top:555.5px;color:#ff0">150</div>
<div class="t" style="right:9.5px;top:555.5px;color:#ff0">150</div>
<div class="t" style="left:164px;top:584.5px;color:#ff0">100</div>
<div class="t" style="right:9.5px;top:584.5px;color:#ff0">100</div>
<div class="t" style="left:164px;top:614.5px;color:#ff0">50</div>
<div class="t" style="right:9.5px;top:614.5px;color:#ff0">50</div>
<div class="t" style="left:164px;top:643.5px;color:#ff0">0</div>
<div class="t" style="right:9.5px;top:643.5px;color:#ff0">0</div>
<div class="t" style="left:219.60000000000002px;width:80px;text-align:center;top:328px;color:#ff0">2</div>
<div class="t" style="left:219.60000000000002px;width:80px;text-align:center;top:663px;color:#ff0">2</div>
<div class="t" style="left:315.8px;width:80px;text-align:center;top:328px;color:#ff0">4</div>
<div class="t" style="left:315.8px;width:80px;text-align:center;top:663px;color:#ff0">4</div>
<div class="t" style="left:412.0px;width:80px;text-align:center;top:328px;color:#ff0">6</div>
<div class="t" style="left:412.0px;width:80px;text-align:center;top:663px;color:#ff0">6</div>
<div class="t" style="left:508.20000000000005px;width:80px;text-align:center;top:328px;color:#ff0">8</div>
<div class="t" style="left:508.20000000000005px;width:80px;text-align:center;top:663px;color:#ff0">8</div>
<div class="t" style="left:142px;width:80px;text-align:center;top:318.8px;color:#fff">0.32061</div>
<div class="t" style="left:173.91943px;width:80px;text-align:center;top:260.36px;color:#ffff00">1.0503</div>
<div class="t" style="left:195.34798px;width:80px;text-align:center;top:243.486px;color:#00ff00">1.4958</div>
<div class="t" style="left:218.37345px;width:80px;text-align:center;top:224.96000000000004px;color:#00ffff">1.9745</div>
<div class="t" style="left:267.57493999999997px;width:80px;text-align:center;top:208.44px;color:#ff0000">2.9974</div>
<div class="t" style="left:315.01597000000004px;width:80px;text-align:center;top:249.26800000000003px;color:#ff00ff">3.9837</div>
<div class="t" style="left:365.61235999999997px;width:80px;text-align:center;top:261.717px;color:#fff">5.0356</div>
<div class="t" style="left:390.18665px;width:80px;text-align:center;top:245.61px;color:#ffff00">5.5465</div>
<div class="t" style="left:409.84511999999995px;width:80px;text-align:center;top:227.91000000000003px;color:#00ff00">5.9552</div>
<div class="t" style="left:461.34578999999997px;width:80px;text-align:center;top:215.52px;color:#00ffff">7.0259</div>
<div class="t" style="left:506.6px;width:80px;text-align:center;top:248px;color:#ff0000">8.0172</div>
<div class="t" style="left:527.7px;width:80px;text-align:center;top:232.2px;color:#ff00ff">8.4166</div>
<div class="t" style="left:582.4px;width:80px;text-align:center;top:321px;color:#fff">9.5775</div>
<div class="t" style="left:586.3px;width:80px;text-align:center;top:303.3px;color:#ffff00">9.8863</div>
<div style="position:absolute;left:163px;top:343px;width:1px;height:15px;background:#fff"></div>
<div style="position:absolute;left:163px;top:679px;width:1px;height:13px;background:#fff"></div>
<div style="position:absolute;left:259px;top:343px;width:1px;height:15px;background:#a0a0a0"></div>
<div style="position:absolute;left:260px;top:343px;width:1px;height:15px;background:#fff"></div>
<div style="position:absolute;left:259px;top:679px;width:1px;height:13px;background:#a0a0a0"></div>
<div style="position:absolute;left:260px;top:679px;width:1px;height:13px;background:#fff"></div>
<div style="position:absolute;left:548px;top:343px;width:1px;height:15px;background:#a0a0a0"></div>
<div style="position:absolute;left:549px;top:343px;width:1px;height:15px;background:#fff"></div>
<div style="position:absolute;left:548px;top:679px;width:1px;height:13px;background:#a0a0a0"></div>
<div style="position:absolute;left:549px;top:679px;width:1px;height:13px;background:#fff"></div>
</body></html>
